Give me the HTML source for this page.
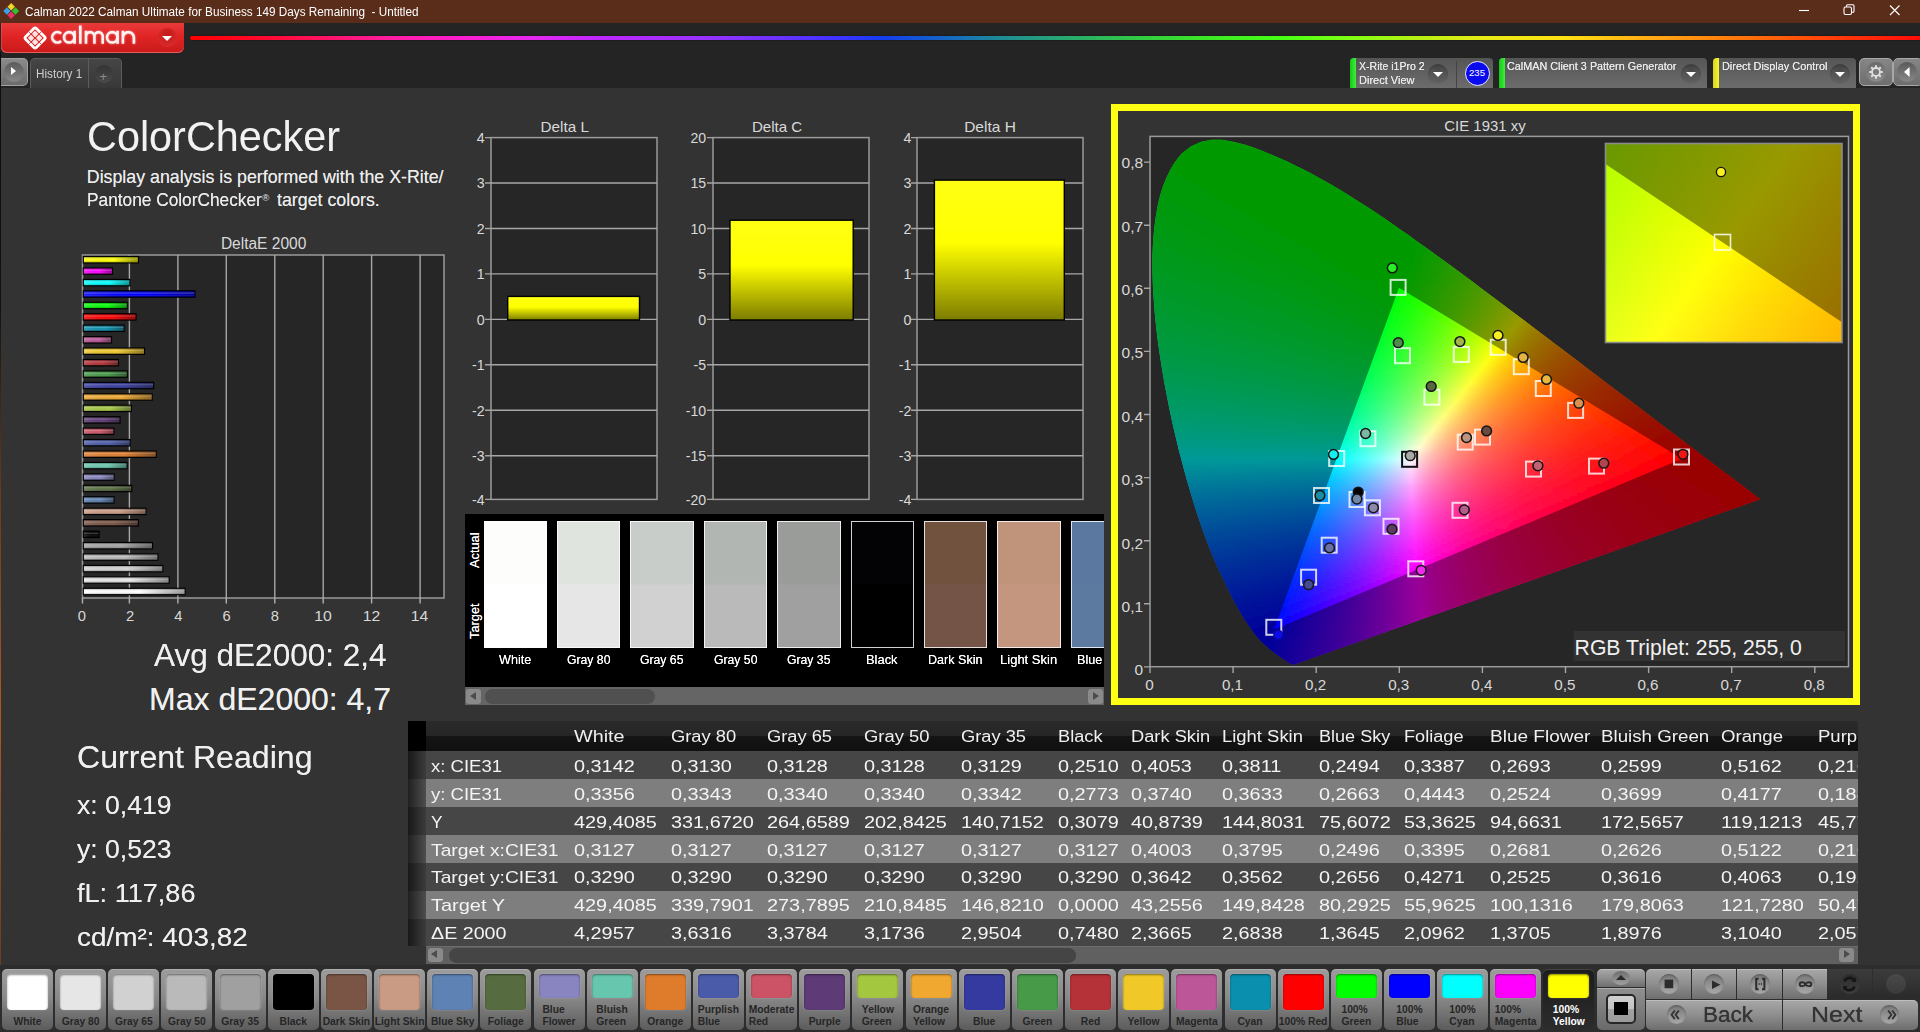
<!DOCTYPE html>
<html lang="en"><head><meta charset="utf-8"><title>Calman 2022 - ColorChecker</title>
<style>
html,body{margin:0;padding:0;background:#333;overflow:hidden;}
body{width:1920px;height:1032px;position:relative;overflow:hidden;font-family:"Liberation Sans",sans-serif;color:#e6e6e6;}
.t{position:absolute;white-space:pre;line-height:1;transform-origin:0 0;}
.abs{position:absolute;}
svg{position:absolute;left:0;top:0;overflow:visible;}
svg text{font-family:"Liberation Sans",sans-serif;}
.ddc{position:absolute;width:20px;height:20px;border-radius:50%;background:radial-gradient(circle at 50% 25%,#484848,#5c5c5c 65%,#6e6e6e);box-shadow:inset 0 2px 3px rgba(0,0,0,.25);}
.ddc:after{content:"";position:absolute;left:5px;top:8.3px;border-left:5px solid transparent;border-right:5px solid transparent;border-top:5.3px solid #fff;}
.tb{position:absolute;top:58px;height:30px;border-radius:4px 4px 0 0;background:linear-gradient(#555,#6c6c6c);overflow:hidden;}
.tb i{position:absolute;left:0;top:0;bottom:0;width:6px;}
.sw{position:absolute;top:969px;width:51px;height:61px;border-radius:5px;background:linear-gradient(#9c9c9c,#8a8a8a 45%,#5c5c5c);box-shadow:inset 0 1px 0 rgba(255,255,255,.18);}
.sw b{position:absolute;left:5px;top:5px;width:41px;border-radius:4px;box-shadow:inset 0 1px 2px rgba(0,0,0,.45),0 0 2px rgba(255,255,255,.25);}
.sw span{position:absolute;left:0;width:51px;text-align:center;font-size:10.3px;font-weight:700;color:#262626;line-height:11.8px;white-space:nowrap;}
.sw span u{display:inline-block;text-align:left;text-decoration:none;}
.sw.sel{background:linear-gradient(#1c1c1c,#2c2c2c);}
.sw.sel span{color:#fff;}
.cb{position:absolute;background:linear-gradient(#a8a8a8,#8e8e8e 50%,#6e6e6e);box-shadow:inset 0 1px 0 rgba(255,255,255,.25);}
.cb.dk{background:linear-gradient(#3c3c3c,#2a2a2a);box-shadow:none;}
.ic{position:absolute;width:20px;height:20px;border-radius:50%;background:linear-gradient(#777,#a9a9a9);box-shadow:inset 0 1px 2px rgba(0,0,0,.3);}
.row{position:absolute;left:425.5px;width:1432px;height:27.9px;}
</style></head><body>

<div id="titlebar" class="abs" style="left:0;top:0;width:1920px;height:23px;background:#5a2d1b"></div>
<svg width="1920" height="23" viewBox="0 0 1920 23"><g transform="translate(11.2,11) rotate(45)"><rect x="-5.6" y="-5.6" width="5.2" height="5.2" fill="#f4d62a"/><rect x="0.4" y="-5.6" width="5.2" height="5.2" fill="#35c02c"/><rect x="-5.6" y="0.4" width="5.2" height="5.2" fill="#3aa0e8"/><rect x="0.4" y="0.4" width="5.2" height="5.2" fill="#e8306a"/></g><g stroke="#fff" stroke-width="1.1" fill="none"><path d="M1799 10.5h10"/><rect x="1844" y="7" width="7.5" height="7.5" rx="1.5"/><path d="M1846.5 7v-1.2q0-1 1-1h5.5q1 0 1 1v5.5q0 1-1 1h-1.2"/><path d="M1890 5.5l9.5 9.5M1899.5 5.5l-9.5 9.5"/></g></svg>
<div class="t" style="left:25.00px;top:5.54px;font-size:12.00px;color:#ffffff;transform:scaleX(0.9784);">Calman 2022 Calman Ultimate for Business 149 Days Remaining  - Untitled</div>
<div id="toolbar" class="abs" style="left:0;top:23px;width:1920px;height:65px;background:#242424"></div>
<div class="abs" style="left:1px;top:23px;width:183px;height:29.5px;border-radius:0 0 6px 6px;background:linear-gradient(#ea3a3a,#e02424 45%,#c81a1a);box-shadow:inset 0 -1px 0 rgba(255,150,150,.55),inset 1px 0 0 rgba(255,120,120,.3)"></div>
<svg width="200" height="60" viewBox="0 0 200 60"><g transform="translate(35.1,38) rotate(45) scale(1.1)"><rect x="-6.9" y="-6.9" width="13.8" height="13.8" rx="1.6" fill="none" stroke="#fff" stroke-width="2.5"/><path d="M0 -8.4V8.4M-8.4 0H8.4" stroke="#d62a2a" stroke-width=".7"/><g fill="#ffe4e4"><rect x="-4.75" y="-4.75" width="4.3" height="4.3" rx=".8"/><rect x=".45" y="-4.75" width="4.3" height="4.3" rx=".8"/><rect x="-4.75" y=".45" width="4.3" height="4.3" rx=".8"/><rect x=".45" y=".45" width="4.3" height="4.3" rx=".8"/></g></g><g fill="none" stroke="#fff2f2" stroke-width="2.6" style="filter:drop-shadow(0 0 1px rgba(255,200,200,.6))"><path d="M61.08 33.62A5.2 5.2 0 1 0 61.08 40.98"/><circle cx="69.2" cy="37.3" r="5.2"/><path d="M74.6 30.8V43.8"/><path d="M80.3 25.5V43.8"/><path d="M86 30.8V43.8M86 36.3a4.2 4.2 0 0 1 8.4 0V43.8M94.4 36.3a4.15 4.15 0 0 1 8.3 0V43.8"/><circle cx="112.2" cy="37.3" r="5.2"/><path d="M117.6 30.8V43.8"/><path d="M122.9 30.8V43.8M122.9 37.6a5.5 5.5 0 0 1 11 0V43.8"/></g></svg>
<div class="abs" style="left:157.5px;top:28px;width:19px;height:19px;border-radius:50%;background:radial-gradient(circle at 50% 35%,#c41818,#d82a2a 75%,#e24444)"></div>
<div class="abs" style="left:161.5px;top:35.5px;border-left:5.5px solid transparent;border-right:5.5px solid transparent;border-top:5.5px solid #fff"></div>
<div class="abs" style="left:190px;top:35.6px;width:1732px;height:4.8px;border-radius:2px 0 0 2px;filter:blur(.45px);background:linear-gradient(90deg,#ff0000 0.0%,#ff0a32 4.5%,#ff146e 8.3%,#ff1eaa 12.1%,#fa1ed2 16.0%,#e628f0 19.8%,#be28ff 23.7%,#9632ff 29.9%,#6e32ff 33.7%,#3c32ff 37.6%,#143cf0 39.9%,#1464c8 43.4%,#1e8c96 46.8%,#28aa6e 50.7%,#32c846 54.5%,#3ce628 58.4%,#46ff14 63.0%,#82ff14 67.1%,#b4f014 70.7%,#e6eb14 74.6%,#ffe114 79.2%,#ffaa14 84.4%,#ff6e0a 90.2%,#ff320a 96.0%,#ff0a0a 100.0%);box-shadow:0 0 2px rgba(0,0,0,.6)"></div>
<div class="abs" style="left:0;top:58px;width:28px;height:28px;border-radius:0 5px 5px 0;background:linear-gradient(#8a8a8a,#6c6c6c);border:1px solid #a0a0a0;border-left:0;box-sizing:border-box"></div>
<div class="abs" style="left:4px;top:62px;width:20px;height:20px;border-radius:50%;background:linear-gradient(#5a5a5a,#888)"></div>
<div class="abs" style="left:11px;top:66.7px;border-top:4.9px solid transparent;border-bottom:4.9px solid transparent;border-left:5.6px solid #fff"></div>
<div class="abs" style="left:30px;top:58px;width:92px;height:30px;border-radius:5px 5px 0 0;background:linear-gradient(#454545,#383838);border:1px solid #5c5c5c;border-bottom:0;box-sizing:border-box"></div>
<div class="abs" style="left:88px;top:59px;width:1px;height:29px;background:#5c5c5c"></div>
<div class="t" style="left:36.30px;top:67.63px;font-size:12.60px;color:#cfcfcf;transform:scaleX(0.9294);">History 1</div>
<div class="abs" style="left:95px;top:65px;width:18px;height:18px;border-radius:50%;background:linear-gradient(#333,#4a4a4a)"></div>
<div class="t" style="left:99.60px;top:69.80px;font-size:13.00px;color:#8c8c8c;">+</div>
<div id="meter" class="tb" style="left:1350px;width:142.5px"><i style="background:linear-gradient(90deg,#16c816,#3cf03c)"></i></div>
<div class="t" style="left:1358.50px;top:60.73px;font-size:10.60px;color:#e8e8e8;transform:scaleX(0.9942);text-shadow:0 0 .5px #e8e8e8;">X-Rite i1Pro 2</div>
<div class="t" style="left:1358.50px;top:75.23px;font-size:10.60px;color:#e8e8e8;transform:scaleX(1.0391);text-shadow:0 0 .5px #e8e8e8;">Direct View</div>
<div class="ddc" style="left:1427.7px;top:63.5px"></div>
<div class="abs" style="left:1456px;top:61px;width:1px;height:27px;background:#444"></div>
<div class="abs" style="left:1464.5px;top:60.5px;width:25px;height:25px;border-radius:50%;background:#0a0aee;border:1.5px solid #e8e8ff;box-sizing:border-box"></div>
<div class="t" style="left:1468.99px;top:68.37px;font-size:9.60px;color:#fff;">235</div>
<div id="source" class="tb" style="left:1498.5px;width:208px"><i style="background:linear-gradient(90deg,#16c816,#3cf03c)"></i></div>
<div class="t" style="left:1507.00px;top:60.73px;font-size:10.60px;color:#e8e8e8;transform:scaleX(1.0202);text-shadow:0 0 .5px #e8e8e8;">CalMAN Client 3 Pattern Generator</div>
<div class="ddc" style="left:1680.6px;top:63.5px"></div>
<div id="display" class="tb" style="left:1713px;width:143px"><i style="background:linear-gradient(90deg,#d8d814,#f4f43c)"></i></div>
<div class="t" style="left:1721.50px;top:60.73px;font-size:10.60px;color:#e8e8e8;transform:scaleX(1.0293);text-shadow:0 0 .5px #e8e8e8;">Direct Display Control</div>
<div class="ddc" style="left:1830px;top:63.5px"></div>
<div class="abs" style="left:1859px;top:58px;width:33.5px;height:28px;border-radius:5px;background:linear-gradient(#868686,#6e6e6e);border:1px solid #a8a8a8;box-sizing:border-box"></div>
<div class="abs" style="left:1892.6px;top:58px;width:30px;height:28px;border-radius:5px;background:linear-gradient(#868686,#6e6e6e);border:1px solid #a8a8a8;box-sizing:border-box"></div>
<div class="abs" style="left:1865.5px;top:62px;width:20px;height:20px;border-radius:50%;background:linear-gradient(#6a6a6a,#8c8c8c)"></div>
<div class="abs" style="left:1896.7px;top:62px;width:20px;height:20px;border-radius:50%;background:linear-gradient(#5a5a5a,#888)"></div>
<svg width="1920" height="100" viewBox="0 0 1920 100"><g transform="translate(1876,72)" fill="none" stroke="#e2e2e2"><circle r="4" stroke-width="1.8"/><g stroke-width="2"><path d="M0 -4.6V-6.7" transform="rotate(0)"/><path d="M0 -4.6V-6.7" transform="rotate(45)"/><path d="M0 -4.6V-6.7" transform="rotate(90)"/><path d="M0 -4.6V-6.7" transform="rotate(135)"/><path d="M0 -4.6V-6.7" transform="rotate(180)"/><path d="M0 -4.6V-6.7" transform="rotate(225)"/><path d="M0 -4.6V-6.7" transform="rotate(270)"/><path d="M0 -4.6V-6.7" transform="rotate(315)"/></g></g><path d="M1909.6 67.1v9.8l-5.6-4.900z" fill="#fff"/></svg>
<div class="abs" style="left:0;top:52px;width:1px;height:916px;background:linear-gradient(#0c0c0c 0,#141210 28%,#6a3a1a 48%,#b0581e 72%,#6a3c20 100%)"></div>
<div class="t" style="left:87.00px;top:115.62px;font-size:42.50px;color:#f2f2f2;transform:scaleX(0.9737);">ColorChecker</div>
<div class="t" style="left:86.80px;top:168.63px;font-size:17.80px;color:#ededed;text-shadow:0 0 .6px rgba(240,240,240,.7);">Display analysis is performed with the X-Rite/</div>
<div class="t" style="left:86.80px;top:192.23px;font-size:17.80px;color:#ededed;transform:scaleX(0.9718);text-shadow:0 0 .6px rgba(240,240,240,.7);">Pantone ColorChecker</div>
<div class="t" style="left:262.20px;top:192.96px;font-size:9.50px;color:#ededed;">®</div>
<div class="t" style="left:277.00px;top:192.23px;font-size:17.80px;color:#ededed;text-shadow:0 0 .6px rgba(240,240,240,.7);">target colors.</div>
<div class="t" style="left:153.90px;top:639.11px;font-size:32.00px;color:#f0f0f0;transform:scaleX(0.9854);text-shadow:0 0 .6px rgba(240,240,240,.7);">Avg dE2000: 2,4</div>
<div class="t" style="left:149.10px;top:683.31px;font-size:32.00px;color:#f0f0f0;text-shadow:0 0 .6px rgba(240,240,240,.7);">Max dE2000: 4,7</div>
<div class="t" style="left:76.60px;top:741.86px;font-size:31.00px;color:#f0f0f0;transform:scaleX(1.0353);text-shadow:0 0 .6px rgba(240,240,240,.7);">Current Reading</div>
<div class="t" style="left:76.60px;top:792.80px;font-size:25.40px;color:#f0f0f0;transform:scaleX(1.0467);text-shadow:0 0 .6px rgba(240,240,240,.7);">x: 0,419</div>
<div class="t" style="left:76.60px;top:836.70px;font-size:25.40px;color:#f0f0f0;transform:scaleX(1.0467);text-shadow:0 0 .6px rgba(240,240,240,.7);">y: 0,523</div>
<div class="t" style="left:76.60px;top:880.90px;font-size:25.40px;color:#f0f0f0;transform:scaleX(1.0666);text-shadow:0 0 .6px rgba(240,240,240,.7);">fL: 117,86</div>
<div class="t" style="left:76.60px;top:924.60px;font-size:25.40px;color:#f0f0f0;transform:scaleX(1.0998);text-shadow:0 0 .6px rgba(240,240,240,.7);">cd/m²: 403,82</div>
<div id="cie" class="abs" style="left:1111px;top:104px;width:749px;height:601px;box-sizing:border-box;border:7.5px solid #ffff14;background:#333"></div>
<svg width="1920" height="1032" viewBox="0 0 1920 1032"><defs><linearGradient id="bs" x1="0" x2="1" y1="0" y2="0"><stop offset="0" stop-color="#fff" stop-opacity=".12"/><stop offset=".55" stop-color="#000" stop-opacity="0"/><stop offset="1" stop-color="#000" stop-opacity=".42"/></linearGradient><linearGradient id="bv" x1="0" x2="0" y1="0" y2="1"><stop offset="0" stop-color="#000" stop-opacity=".25"/><stop offset=".35" stop-color="#fff" stop-opacity=".22"/><stop offset=".6" stop-color="#fff" stop-opacity="0"/><stop offset="1" stop-color="#000" stop-opacity=".3"/></linearGradient><linearGradient id="yb" x1="0" x2="0" y1="0" y2="1"><stop offset="0" stop-color="#ffff14"/><stop offset=".45" stop-color="#ffff00"/><stop offset="1" stop-color="#7c7c00"/></linearGradient><clipPath id="hs"><path d="M1294.2 664.4L1293.0 664.6L1291.0 663.9L1289.9 663.2L1288.2 662.2L1286.1 660.7L1283.4 658.9L1279.6 656.4L1275.0 653.2L1269.2 648.8L1262.1 642.3L1257.6 637.4L1252.6 631.0L1248.9 625.8L1244.9 619.8L1240.5 612.7L1237.0 606.5L1233.3 599.7L1229.4 592.1L1225.3 583.6L1222.4 577.4L1219.3 570.9L1216.1 564.0L1212.9 556.7L1209.7 548.9L1206.5 540.6L1204.1 534.0L1201.6 527.2L1199.2 520.0L1196.7 512.7L1194.3 505.1L1191.9 497.2L1189.5 489.1L1187.1 480.9L1185.2 474.0L1183.3 467.0L1181.4 459.8L1179.4 452.4L1177.6 444.9L1175.7 437.2L1173.9 429.6L1172.1 421.8L1170.5 414.1L1168.9 406.4L1167.5 399.3L1166.1 392.1L1164.7 384.9L1163.4 377.6L1162.2 370.2L1161.0 362.8L1159.9 355.5L1158.8 348.2L1157.8 341.0L1156.9 333.8L1156.1 326.8L1155.3 319.1L1154.6 311.5L1154.0 303.8L1153.5 296.3L1153.0 288.8L1152.7 281.3L1152.5 274.1L1152.4 266.9L1152.4 259.9L1152.5 253.1L1152.9 244.8L1153.5 236.6L1154.2 228.6L1155.2 220.8L1156.3 213.2L1157.6 206.0L1159.1 199.2L1160.9 192.7L1163.5 184.7L1166.6 177.2L1170.0 170.3L1173.6 164.0L1177.6 158.4L1181.7 153.6L1190.7 146.4L1200.7 142.1L1211.1 139.8L1221.9 139.7L1233.1 141.7L1244.3 144.6L1252.8 147.2L1261.3 150.4L1269.8 153.9L1278.1 157.5L1286.2 161.1L1294.2 164.9L1302.0 168.8L1309.9 172.8L1317.6 177.0L1325.2 181.3L1332.8 185.6L1340.4 190.1L1348.0 194.7L1355.5 199.4L1363.0 204.2L1370.5 209.1L1378.0 214.1L1385.4 219.1L1392.9 224.2L1400.3 229.4L1407.8 234.6L1415.2 239.9L1422.6 245.2L1430.0 250.5L1437.5 255.9L1444.9 261.3L1452.4 266.8L1459.8 272.3L1467.3 277.8L1474.7 283.3L1482.1 288.9L1489.5 294.4L1496.9 299.9L1504.2 305.4L1511.6 311.0L1518.9 316.5L1526.2 322.0L1533.5 327.4L1540.7 332.9L1547.8 338.3L1554.9 343.7L1562.0 349.0L1568.9 354.3L1575.9 359.6L1582.7 364.8L1589.5 369.9L1596.2 375.0L1602.7 380.0L1609.2 384.9L1615.6 389.7L1621.9 394.4L1628.0 399.1L1636.0 405.1L1643.7 411.0L1651.1 416.6L1658.1 421.9L1664.8 427.0L1671.2 431.8L1680.3 438.7L1688.8 445.2L1696.5 450.9L1703.4 456.2L1709.7 460.9L1715.3 465.2L1724.8 472.4L1732.4 478.1L1738.5 482.8L1743.6 486.6L1747.7 489.8L1751.1 492.3L1753.5 494.2L1755.5 495.6L1756.9 496.7L1757.8 497.4L1759.1 498.4L1760.2 499.2Z"/></clipPath><linearGradient id="c0"><stop offset="0" stop-color="#00ff00"/><stop offset="0.4967" stop-color="#00ff00"/><stop offset="0.6672" stop-color="#6dff00"/><stop offset="0.777" stop-color="#c2ff00"/><stop offset="0.8459" stop-color="#ffff00"/><stop offset="0.918" stop-color="#ffc700"/><stop offset="1" stop-color="#ff9c00"/></linearGradient><linearGradient id="c1"><stop offset="0" stop-color="#00ff00"/><stop offset="0.4951" stop-color="#00ff00"/><stop offset="0.5885" stop-color="#39ff00"/><stop offset="0.6836" stop-color="#7bff00"/><stop offset="0.7639" stop-color="#baff00"/><stop offset="0.8426" stop-color="#fffe00"/><stop offset="0.9016" stop-color="#ffcf00"/><stop offset="1" stop-color="#ff9a00"/></linearGradient><linearGradient id="c2"><stop offset="0" stop-color="#00ff01"/><stop offset="0.4934" stop-color="#00ff00"/><stop offset="0.5967" stop-color="#40ff00"/><stop offset="0.682" stop-color="#7cff00"/><stop offset="0.7689" stop-color="#c1ff00"/><stop offset="0.8377" stop-color="#ffff00"/><stop offset="0.9033" stop-color="#ffcb00"/><stop offset="1" stop-color="#ff9700"/></linearGradient><linearGradient id="c3"><stop offset="0" stop-color="#00ff02"/><stop offset="0.4918" stop-color="#00ff00"/><stop offset="0.6656" stop-color="#72ff00"/><stop offset="0.7475" stop-color="#b2ff00"/><stop offset="0.8344" stop-color="#ffff00"/><stop offset="0.9066" stop-color="#ffc600"/><stop offset="1" stop-color="#ff9500"/></linearGradient><linearGradient id="c4"><stop offset="0" stop-color="#00ff03"/><stop offset="0.4902" stop-color="#00ff00"/><stop offset="0.5738" stop-color="#34ff00"/><stop offset="0.6721" stop-color="#79ff00"/><stop offset="0.7525" stop-color="#b9ff00"/><stop offset="0.8311" stop-color="#fffe00"/><stop offset="0.8902" stop-color="#ffce00"/><stop offset="0.941" stop-color="#ffaf00"/><stop offset="1" stop-color="#ff9300"/></linearGradient><linearGradient id="c5"><stop offset="0" stop-color="#00ff04"/><stop offset="0.0262" stop-color="#00ff00"/><stop offset="0.4885" stop-color="#00ff00"/><stop offset="0.582" stop-color="#3bff00"/><stop offset="0.6705" stop-color="#7aff00"/><stop offset="0.7443" stop-color="#b5ff00"/><stop offset="0.8262" stop-color="#ffff00"/><stop offset="0.8918" stop-color="#ffca00"/><stop offset="1" stop-color="#ff9100"/></linearGradient><linearGradient id="c6"><stop offset="0" stop-color="#00ff05"/><stop offset="0.0344" stop-color="#00ff00"/><stop offset="0.4852" stop-color="#00ff00"/><stop offset="0.5721" stop-color="#36ff00"/><stop offset="0.6623" stop-color="#76ff00"/><stop offset="0.741" stop-color="#b5ff00"/><stop offset="0.823" stop-color="#fffe00"/><stop offset="0.8934" stop-color="#ffc600"/><stop offset="1" stop-color="#ff8f00"/></linearGradient><linearGradient id="c7"><stop offset="0" stop-color="#00ff06"/><stop offset="0.0426" stop-color="#00ff00"/><stop offset="0.4836" stop-color="#00ff00"/><stop offset="0.5623" stop-color="#31ff00"/><stop offset="0.6541" stop-color="#72ff00"/><stop offset="0.7492" stop-color="#bfff00"/><stop offset="0.818" stop-color="#ffff00"/><stop offset="0.8984" stop-color="#ffc000"/><stop offset="1" stop-color="#ff8d00"/></linearGradient><linearGradient id="c8"><stop offset="0" stop-color="#00ff07"/><stop offset="0.0508" stop-color="#00ff00"/><stop offset="0.482" stop-color="#00ff00"/><stop offset="0.5705" stop-color="#38ff00"/><stop offset="0.6656" stop-color="#7dff00"/><stop offset="0.7295" stop-color="#b1ff00"/><stop offset="0.8148" stop-color="#ffff00"/><stop offset="0.8803" stop-color="#ffc900"/><stop offset="0.9377" stop-color="#ffa700"/><stop offset="1" stop-color="#ff8b00"/></linearGradient><linearGradient id="c9"><stop offset="0" stop-color="#00ff08"/><stop offset="0.059" stop-color="#00ff00"/><stop offset="0.4803" stop-color="#00ff00"/><stop offset="0.5754" stop-color="#3dff00"/><stop offset="0.6574" stop-color="#79ff00"/><stop offset="0.7295" stop-color="#b4ff00"/><stop offset="0.8115" stop-color="#fffe00"/><stop offset="0.8803" stop-color="#ffc600"/><stop offset="0.9328" stop-color="#ffa700"/><stop offset="1" stop-color="#ff8900"/></linearGradient><linearGradient id="c10"><stop offset="0" stop-color="#00ff09"/><stop offset="0.0672" stop-color="#00ff00"/><stop offset="0.4787" stop-color="#00ff00"/><stop offset="0.5672" stop-color="#39ff00"/><stop offset="0.6557" stop-color="#7aff00"/><stop offset="0.741" stop-color="#c1ff00"/><stop offset="0.8066" stop-color="#ffff00"/><stop offset="0.8836" stop-color="#ffc100"/><stop offset="0.9459" stop-color="#ff9e00"/><stop offset="1" stop-color="#ff8700"/></linearGradient><linearGradient id="c11"><stop offset="0" stop-color="#00ff0a"/><stop offset="0.0754" stop-color="#00ff00"/><stop offset="0.477" stop-color="#00ff00"/><stop offset="0.6426" stop-color="#72ff00"/><stop offset="0.7262" stop-color="#b7ff00"/><stop offset="0.8033" stop-color="#fffe00"/><stop offset="0.8443" stop-color="#ffda00"/><stop offset="0.8902" stop-color="#ffba00"/><stop offset="1" stop-color="#ff8500"/></linearGradient><linearGradient id="c12"><stop offset="0" stop-color="#00ff0b"/><stop offset="0.0836" stop-color="#00ff00"/><stop offset="0.4754" stop-color="#00ff00"/><stop offset="0.5639" stop-color="#3aff00"/><stop offset="0.6525" stop-color="#7cff00"/><stop offset="0.7262" stop-color="#baff00"/><stop offset="0.7984" stop-color="#ffff00"/><stop offset="0.8689" stop-color="#ffc500"/><stop offset="0.9344" stop-color="#ff9f00"/><stop offset="1" stop-color="#ff8300"/></linearGradient><linearGradient id="c13"><stop offset="0" stop-color="#00ff0c"/><stop offset="0.0918" stop-color="#00ff00"/><stop offset="0.4738" stop-color="#00ff00"/><stop offset="0.5672" stop-color="#3eff00"/><stop offset="0.6557" stop-color="#81ff00"/><stop offset="0.7951" stop-color="#ffff00"/><stop offset="0.8689" stop-color="#ffc200"/><stop offset="0.9295" stop-color="#ff9f00"/><stop offset="1" stop-color="#ff8100"/></linearGradient><linearGradient id="c14"><stop offset="0" stop-color="#00ff0d"/><stop offset="0.1" stop-color="#00ff00"/><stop offset="0.4721" stop-color="#00ff00"/><stop offset="0.6377" stop-color="#75ff00"/><stop offset="0.7115" stop-color="#b3ff00"/><stop offset="0.7918" stop-color="#fffe00"/><stop offset="0.8393" stop-color="#ffd400"/><stop offset="0.877" stop-color="#ffba00"/><stop offset="0.9328" stop-color="#ff9b00"/><stop offset="1" stop-color="#ff7f00"/></linearGradient><linearGradient id="c15"><stop offset="0" stop-color="#00ff0e"/><stop offset="0.1082" stop-color="#00ff00"/><stop offset="0.4705" stop-color="#00ff00"/><stop offset="0.6311" stop-color="#72ff00"/><stop offset="0.7115" stop-color="#b6ff00"/><stop offset="0.7869" stop-color="#ffff00"/><stop offset="0.8262" stop-color="#ffdb00"/><stop offset="0.8754" stop-color="#ffb800"/><stop offset="0.9426" stop-color="#ff9400"/><stop offset="1" stop-color="#ff7d00"/></linearGradient><linearGradient id="c16"><stop offset="0" stop-color="#00ff0f"/><stop offset="0.1164" stop-color="#00ff00"/><stop offset="0.4672" stop-color="#00ff00"/><stop offset="0.5361" stop-color="#2dff00"/><stop offset="0.6295" stop-color="#73ff00"/><stop offset="0.6902" stop-color="#a6ff00"/><stop offset="0.7836" stop-color="#ffff00"/><stop offset="0.8557" stop-color="#ffc200"/><stop offset="0.9131" stop-color="#ffa000"/><stop offset="1" stop-color="#ff7b00"/></linearGradient><linearGradient id="c17"><stop offset="0" stop-color="#00ff11"/><stop offset="0.1246" stop-color="#00ff00"/><stop offset="0.4656" stop-color="#00ff00"/><stop offset="0.5492" stop-color="#38ff00"/><stop offset="0.6279" stop-color="#74ff00"/><stop offset="0.6869" stop-color="#a6ff00"/><stop offset="0.7803" stop-color="#fffe00"/><stop offset="0.8279" stop-color="#ffd300"/><stop offset="0.8934" stop-color="#ffa800"/><stop offset="1" stop-color="#ff7900"/></linearGradient><linearGradient id="c18"><stop offset="0" stop-color="#00ff12"/><stop offset="0.1328" stop-color="#00ff00"/><stop offset="0.4639" stop-color="#00ff00"/><stop offset="0.5426" stop-color="#35ff00"/><stop offset="0.6262" stop-color="#75ff00"/><stop offset="0.7131" stop-color="#c1ff00"/><stop offset="0.7754" stop-color="#ffff00"/><stop offset="0.8262" stop-color="#ffd100"/><stop offset="0.8852" stop-color="#ffaa00"/><stop offset="1" stop-color="#ff7700"/></linearGradient><linearGradient id="c19"><stop offset="0" stop-color="#00ff13"/><stop offset="0.141" stop-color="#00ff00"/><stop offset="0.4623" stop-color="#00ff00"/><stop offset="0.5459" stop-color="#39ff00"/><stop offset="0.6197" stop-color="#72ff00"/><stop offset="0.7" stop-color="#b8ff00"/><stop offset="0.7721" stop-color="#fffe00"/><stop offset="0.8246" stop-color="#ffcf00"/><stop offset="0.877" stop-color="#ffac00"/><stop offset="0.9361" stop-color="#ff8e00"/><stop offset="1" stop-color="#ff7500"/></linearGradient><linearGradient id="c20"><stop offset="0" stop-color="#00ff14"/><stop offset="0.1492" stop-color="#00ff00"/><stop offset="0.4607" stop-color="#00ff00"/><stop offset="0.6131" stop-color="#6fff00"/><stop offset="0.6869" stop-color="#afff00"/><stop offset="0.7672" stop-color="#ffff00"/><stop offset="0.823" stop-color="#ffcd00"/><stop offset="0.8885" stop-color="#ffa300"/><stop offset="1" stop-color="#ff7300"/></linearGradient><linearGradient id="c21"><stop offset="0" stop-color="#00ff15"/><stop offset="0.1574" stop-color="#00ff00"/><stop offset="0.459" stop-color="#00ff00"/><stop offset="0.6115" stop-color="#70ff00"/><stop offset="0.6984" stop-color="#bdff00"/><stop offset="0.7639" stop-color="#ffff00"/><stop offset="0.8148" stop-color="#ffd000"/><stop offset="0.8836" stop-color="#ffa300"/><stop offset="1" stop-color="#ff7100"/></linearGradient><linearGradient id="c22"><stop offset="0" stop-color="#00ff17"/><stop offset="0.1656" stop-color="#00ff00"/><stop offset="0.4574" stop-color="#00ff00"/><stop offset="0.6098" stop-color="#71ff00"/><stop offset="0.6918" stop-color="#baff00"/><stop offset="0.7607" stop-color="#fffe00"/><stop offset="0.8131" stop-color="#ffce00"/><stop offset="0.877" stop-color="#ffa400"/><stop offset="0.9344" stop-color="#ff8800"/><stop offset="1" stop-color="#ff7000"/></linearGradient><linearGradient id="c23"><stop offset="0" stop-color="#00ff18"/><stop offset="0.1738" stop-color="#00ff00"/><stop offset="0.4557" stop-color="#00ff00"/><stop offset="0.5377" stop-color="#3aff00"/><stop offset="0.6164" stop-color="#79ff00"/><stop offset="0.6852" stop-color="#b7ff00"/><stop offset="0.7557" stop-color="#ffff00"/><stop offset="0.8" stop-color="#ffd500"/><stop offset="0.8689" stop-color="#ffa600"/><stop offset="0.9246" stop-color="#ff8a00"/><stop offset="1" stop-color="#ff6e00"/></linearGradient><linearGradient id="c24"><stop offset="0" stop-color="#00ff19"/><stop offset="0.182" stop-color="#00ff00"/><stop offset="0.4541" stop-color="#00ff00"/><stop offset="0.5393" stop-color="#3dff00"/><stop offset="0.6262" stop-color="#84ff00"/><stop offset="0.7525" stop-color="#fffe00"/><stop offset="0.8033" stop-color="#ffcf00"/><stop offset="0.8607" stop-color="#ffa800"/><stop offset="0.9311" stop-color="#ff8500"/><stop offset="1" stop-color="#ff6c00"/></linearGradient><linearGradient id="c25"><stop offset="0" stop-color="#00ff1a"/><stop offset="0.1902" stop-color="#00ff00"/><stop offset="0.4525" stop-color="#00ff00"/><stop offset="0.6082" stop-color="#77ff00"/><stop offset="0.6836" stop-color="#bcff00"/><stop offset="0.7492" stop-color="#fffe00"/><stop offset="0.8016" stop-color="#ffcd00"/><stop offset="0.8738" stop-color="#ff9e00"/><stop offset="1" stop-color="#ff6a00"/></linearGradient><linearGradient id="c26"><stop offset="0" stop-color="#00ff1c"/><stop offset="0.1984" stop-color="#00ff00"/><stop offset="0.4492" stop-color="#00ff00"/><stop offset="0.5082" stop-color="#29ff00"/><stop offset="0.5984" stop-color="#71ff00"/><stop offset="0.6689" stop-color="#b1ff00"/><stop offset="0.7443" stop-color="#ffff00"/><stop offset="0.8049" stop-color="#ffc700"/><stop offset="0.8672" stop-color="#ff9f00"/><stop offset="0.9279" stop-color="#ff8200"/><stop offset="1" stop-color="#ff6800"/></linearGradient><linearGradient id="c27"><stop offset="0" stop-color="#00ff1d"/><stop offset="0.2066" stop-color="#00ff00"/><stop offset="0.4475" stop-color="#00ff00"/><stop offset="0.5885" stop-color="#6bff00"/><stop offset="0.6623" stop-color="#aeff00"/><stop offset="0.741" stop-color="#fffe00"/><stop offset="0.7967" stop-color="#ffca00"/><stop offset="0.8623" stop-color="#ff9f00"/><stop offset="0.918" stop-color="#ff8400"/><stop offset="1" stop-color="#ff6600"/></linearGradient><linearGradient id="c28"><stop offset="0" stop-color="#00ff1e"/><stop offset="0.2148" stop-color="#00ff00"/><stop offset="0.4459" stop-color="#00ff00"/><stop offset="0.5246" stop-color="#39ff00"/><stop offset="0.5984" stop-color="#76ff00"/><stop offset="0.6721" stop-color="#bbff00"/><stop offset="0.7361" stop-color="#ffff00"/><stop offset="0.7951" stop-color="#ffc800"/><stop offset="0.8557" stop-color="#ffa000"/><stop offset="0.9197" stop-color="#ff8100"/><stop offset="1" stop-color="#ff6500"/></linearGradient><linearGradient id="c29"><stop offset="0" stop-color="#00ff20"/><stop offset="0.223" stop-color="#00ff00"/><stop offset="0.4443" stop-color="#00ff00"/><stop offset="0.5197" stop-color="#37ff00"/><stop offset="0.6" stop-color="#7aff00"/><stop offset="0.6738" stop-color="#c0ff00"/><stop offset="0.7328" stop-color="#ffff00"/><stop offset="0.7869" stop-color="#ffcb00"/><stop offset="0.8492" stop-color="#ffa100"/><stop offset="0.9098" stop-color="#ff8300"/><stop offset="1" stop-color="#ff6300"/></linearGradient><linearGradient id="c30"><stop offset="0" stop-color="#00ff21"/><stop offset="0.2311" stop-color="#00ff00"/><stop offset="0.4426" stop-color="#00ff00"/><stop offset="0.5869" stop-color="#71ff00"/><stop offset="0.6574" stop-color="#b3ff00"/><stop offset="0.7279" stop-color="#feff00"/><stop offset="0.7902" stop-color="#ffc500"/><stop offset="0.8426" stop-color="#ffa200"/><stop offset="0.9164" stop-color="#ff7e00"/><stop offset="1" stop-color="#ff6100"/></linearGradient><linearGradient id="c31"><stop offset="0" stop-color="#00ff22"/><stop offset="0.2393" stop-color="#00ff00"/><stop offset="0.441" stop-color="#00ff00"/><stop offset="0.5262" stop-color="#40ff00"/><stop offset="0.5885" stop-color="#75ff00"/><stop offset="0.6459" stop-color="#abff00"/><stop offset="0.7246" stop-color="#ffff00"/><stop offset="0.7721" stop-color="#ffd000"/><stop offset="0.8328" stop-color="#ffa500"/><stop offset="0.9016" stop-color="#ff8200"/><stop offset="1" stop-color="#ff5f00"/></linearGradient><linearGradient id="c32"><stop offset="0" stop-color="#00ff24"/><stop offset="0.2475" stop-color="#00ff00"/><stop offset="0.4393" stop-color="#00ff00"/><stop offset="0.5721" stop-color="#69ff00"/><stop offset="0.6426" stop-color="#abff00"/><stop offset="0.7197" stop-color="#feff00"/><stop offset="0.7803" stop-color="#ffc600"/><stop offset="0.8492" stop-color="#ff9900"/><stop offset="0.918" stop-color="#ff7900"/><stop offset="1" stop-color="#ff5e00"/></linearGradient><linearGradient id="c33"><stop offset="0" stop-color="#00ff25"/><stop offset="0.2557" stop-color="#00ff00"/><stop offset="0.4377" stop-color="#00ff00"/><stop offset="0.5705" stop-color="#6aff00"/><stop offset="0.6492" stop-color="#b5ff00"/><stop offset="0.7164" stop-color="#ffff00"/><stop offset="0.777" stop-color="#ffc500"/><stop offset="0.8443" stop-color="#ff9900"/><stop offset="0.923" stop-color="#ff7500"/><stop offset="1" stop-color="#ff5c00"/></linearGradient><linearGradient id="c34"><stop offset="0" stop-color="#00ff27"/><stop offset="0.2639" stop-color="#00ff00"/><stop offset="0.4361" stop-color="#00ff00"/><stop offset="0.5213" stop-color="#42ff00"/><stop offset="0.5885" stop-color="#7dff00"/><stop offset="0.6525" stop-color="#bcff00"/><stop offset="0.7131" stop-color="#ffff00"/><stop offset="0.7754" stop-color="#ffc300"/><stop offset="0.8393" stop-color="#ff9900"/><stop offset="0.9148" stop-color="#ff7600"/><stop offset="1" stop-color="#ff5a00"/></linearGradient><linearGradient id="c35"><stop offset="0" stop-color="#00ff28"/><stop offset="0.2721" stop-color="#00ff00"/><stop offset="0.4344" stop-color="#00ff00"/><stop offset="0.5213" stop-color="#44ff00"/><stop offset="0.5951" stop-color="#86ff00"/><stop offset="0.7082" stop-color="#feff00"/><stop offset="0.7721" stop-color="#ffc200"/><stop offset="0.8344" stop-color="#ff9900"/><stop offset="0.9197" stop-color="#ff7200"/><stop offset="1" stop-color="#ff5800"/></linearGradient><linearGradient id="c36"><stop offset="0" stop-color="#00ff2a"/><stop offset="0.2803" stop-color="#00ff00"/><stop offset="0.4311" stop-color="#00ff00"/><stop offset="0.5033" stop-color="#37ff00"/><stop offset="0.5836" stop-color="#7eff00"/><stop offset="0.6361" stop-color="#b2ff00"/><stop offset="0.7049" stop-color="#ffff00"/><stop offset="0.759" stop-color="#ffc900"/><stop offset="0.8279" stop-color="#ff9a00"/><stop offset="0.9115" stop-color="#ff7300"/><stop offset="1" stop-color="#ff5700"/></linearGradient><linearGradient id="c37"><stop offset="0" stop-color="#00ff2b"/><stop offset="0.2885" stop-color="#00ff00"/><stop offset="0.4295" stop-color="#00ff00"/><stop offset="0.5033" stop-color="#39ff00"/><stop offset="0.5754" stop-color="#79ff00"/><stop offset="0.6393" stop-color="#b9ff00"/><stop offset="0.7" stop-color="#feff00"/><stop offset="0.7525" stop-color="#ffcb00"/><stop offset="0.823" stop-color="#ff9a00"/><stop offset="0.8984" stop-color="#ff7600"/><stop offset="1" stop-color="#ff5500"/></linearGradient><linearGradient id="c38"><stop offset="0" stop-color="#00ff2d"/><stop offset="0.2967" stop-color="#00ff00"/><stop offset="0.4279" stop-color="#00ff00"/><stop offset="0.4902" stop-color="#30ff00"/><stop offset="0.5672" stop-color="#74ff00"/><stop offset="0.6246" stop-color="#adff00"/><stop offset="0.6967" stop-color="#feff00"/><stop offset="0.7492" stop-color="#ffca00"/><stop offset="0.8164" stop-color="#ff9b00"/><stop offset="0.9033" stop-color="#ff7200"/><stop offset="1" stop-color="#ff5300"/></linearGradient><linearGradient id="c39"><stop offset="0" stop-color="#00ff2e"/><stop offset="0.3049" stop-color="#00ff00"/><stop offset="0.4262" stop-color="#00ff00"/><stop offset="0.559" stop-color="#6fff00"/><stop offset="0.6361" stop-color="#bdff00"/><stop offset="0.6934" stop-color="#ffff00"/><stop offset="0.7508" stop-color="#ffc500"/><stop offset="0.8115" stop-color="#ff9b00"/><stop offset="0.8951" stop-color="#ff7300"/><stop offset="1" stop-color="#ff5200"/></linearGradient><linearGradient id="c40"><stop offset="0" stop-color="#00ff30"/><stop offset="0.3131" stop-color="#00ff00"/><stop offset="0.4246" stop-color="#00ff00"/><stop offset="0.482" stop-color="#2dff00"/><stop offset="0.5656" stop-color="#78ff00"/><stop offset="0.6262" stop-color="#b6ff00"/><stop offset="0.6885" stop-color="#feff00"/><stop offset="0.7393" stop-color="#ffcb00"/><stop offset="0.8049" stop-color="#ff9c00"/><stop offset="0.9" stop-color="#ff6f00"/><stop offset="1" stop-color="#ff5000"/></linearGradient><linearGradient id="c41"><stop offset="0" stop-color="#00ff31"/><stop offset="0.3213" stop-color="#00ff00"/><stop offset="0.423" stop-color="#00ff00"/><stop offset="0.4984" stop-color="#3dff00"/><stop offset="0.5574" stop-color="#73ff00"/><stop offset="0.6164" stop-color="#afff00"/><stop offset="0.6852" stop-color="#ffff00"/><stop offset="0.741" stop-color="#ffc600"/><stop offset="0.8213" stop-color="#ff9000"/><stop offset="0.9049" stop-color="#ff6b00"/><stop offset="1" stop-color="#ff4e00"/></linearGradient><linearGradient id="c42"><stop offset="0" stop-color="#00ff33"/><stop offset="0.3295" stop-color="#00ff00"/><stop offset="0.4213" stop-color="#00ff00"/><stop offset="0.4984" stop-color="#3fff00"/><stop offset="0.5689" stop-color="#81ff00"/><stop offset="0.6311" stop-color="#c3ff00"/><stop offset="0.6803" stop-color="#feff00"/><stop offset="0.7377" stop-color="#ffc500"/><stop offset="0.8164" stop-color="#ff9000"/><stop offset="0.9131" stop-color="#ff6600"/><stop offset="1" stop-color="#ff4d00"/></linearGradient><linearGradient id="c43"><stop offset="0" stop-color="#00ff34"/><stop offset="0.2" stop-color="#00ff19"/><stop offset="0.3377" stop-color="#00ff00"/><stop offset="0.4197" stop-color="#00ff00"/><stop offset="0.4902" stop-color="#3aff00"/><stop offset="0.5557" stop-color="#77ff00"/><stop offset="0.6197" stop-color="#baff00"/><stop offset="0.677" stop-color="#feff00"/><stop offset="0.7393" stop-color="#ffc000"/><stop offset="0.8131" stop-color="#ff8f00"/><stop offset="0.9016" stop-color="#ff6800"/><stop offset="1" stop-color="#ff4b00"/></linearGradient><linearGradient id="c44"><stop offset="0" stop-color="#00ff36"/><stop offset="0.1787" stop-color="#00ff1e"/><stop offset="0.3459" stop-color="#00ff00"/><stop offset="0.418" stop-color="#00ff00"/><stop offset="0.5508" stop-color="#75ff00"/><stop offset="0.6197" stop-color="#beff00"/><stop offset="0.6738" stop-color="#ffff00"/><stop offset="0.7279" stop-color="#ffc600"/><stop offset="0.8082" stop-color="#ff8f00"/><stop offset="0.9016" stop-color="#ff6600"/><stop offset="1" stop-color="#ff4900"/></linearGradient><linearGradient id="c45"><stop offset="0" stop-color="#00ff38"/><stop offset="0.2082" stop-color="#00ff1b"/><stop offset="0.3541" stop-color="#00ff00"/><stop offset="0.4164" stop-color="#00ff00"/><stop offset="0.5459" stop-color="#73ff00"/><stop offset="0.6066" stop-color="#b3ff00"/><stop offset="0.6689" stop-color="#feff00"/><stop offset="0.7246" stop-color="#ffc500"/><stop offset="0.8049" stop-color="#ff8e00"/><stop offset="0.8902" stop-color="#ff6800"/><stop offset="1" stop-color="#ff4800"/></linearGradient><linearGradient id="c46"><stop offset="0" stop-color="#00ff39"/><stop offset="0.2" stop-color="#00ff1e"/><stop offset="0.3623" stop-color="#00ff00"/><stop offset="0.4131" stop-color="#00ff00"/><stop offset="0.4672" stop-color="#2cff00"/><stop offset="0.5361" stop-color="#6cff00"/><stop offset="0.6049" stop-color="#b5ff00"/><stop offset="0.6656" stop-color="#ffff00"/><stop offset="0.7262" stop-color="#ffc000"/><stop offset="0.8" stop-color="#ff8e00"/><stop offset="0.8984" stop-color="#ff6300"/><stop offset="1" stop-color="#ff4600"/></linearGradient><linearGradient id="c47"><stop offset="0" stop-color="#00ff3b"/><stop offset="0.1984" stop-color="#00ff20"/><stop offset="0.3705" stop-color="#00ff00"/><stop offset="0.4115" stop-color="#00ff00"/><stop offset="0.4639" stop-color="#2bff00"/><stop offset="0.541" stop-color="#74ff00"/><stop offset="0.6033" stop-color="#b7ff00"/><stop offset="0.6623" stop-color="#ffff00"/><stop offset="0.6918" stop-color="#ffdc00"/><stop offset="0.723" stop-color="#ffbf00"/><stop offset="0.7967" stop-color="#ff8d00"/><stop offset="0.8869" stop-color="#ff6500"/><stop offset="1" stop-color="#ff4500"/></linearGradient><linearGradient id="c48"><stop offset="0" stop-color="#00ff3d"/><stop offset="0.2033" stop-color="#00ff21"/><stop offset="0.3787" stop-color="#00ff00"/><stop offset="0.4098" stop-color="#00ff00"/><stop offset="0.4639" stop-color="#2dff00"/><stop offset="0.5344" stop-color="#70ff00"/><stop offset="0.6016" stop-color="#b9ff00"/><stop offset="0.6574" stop-color="#feff00"/><stop offset="0.7197" stop-color="#ffbe00"/><stop offset="0.7934" stop-color="#ff8c00"/><stop offset="0.8869" stop-color="#ff6300"/><stop offset="1" stop-color="#ff4300"/></linearGradient><linearGradient id="c49"><stop offset="0" stop-color="#00ff3f"/><stop offset="0.4082" stop-color="#00ff00"/><stop offset="0.4639" stop-color="#2fff00"/><stop offset="0.5344" stop-color="#73ff00"/><stop offset="0.6033" stop-color="#bfff00"/><stop offset="0.6541" stop-color="#ffff00"/><stop offset="0.6836" stop-color="#ffdc00"/><stop offset="0.7164" stop-color="#ffbd00"/><stop offset="0.7902" stop-color="#ff8b00"/><stop offset="0.8836" stop-color="#ff6200"/><stop offset="1" stop-color="#ff4200"/></linearGradient><linearGradient id="c50"><stop offset="0" stop-color="#00ff41"/><stop offset="0.182" stop-color="#00ff28"/><stop offset="0.4066" stop-color="#00ff00"/><stop offset="0.4852" stop-color="#45ff00"/><stop offset="0.5344" stop-color="#76ff00"/><stop offset="0.5836" stop-color="#acff00"/><stop offset="0.6492" stop-color="#feff00"/><stop offset="0.7131" stop-color="#ffbc00"/><stop offset="0.7852" stop-color="#ff8b00"/><stop offset="0.8836" stop-color="#ff6000"/><stop offset="1" stop-color="#ff4000"/></linearGradient><linearGradient id="c51"><stop offset="0" stop-color="#00ff42"/><stop offset="0.2246" stop-color="#00ff23"/><stop offset="0.4049" stop-color="#00ff00"/><stop offset="0.523" stop-color="#6dff00"/><stop offset="0.582" stop-color="#aeff00"/><stop offset="0.6459" stop-color="#feff00"/><stop offset="0.677" stop-color="#ffda00"/><stop offset="0.7098" stop-color="#ffbb00"/><stop offset="0.782" stop-color="#ff8a00"/><stop offset="0.8803" stop-color="#ff5f00"/><stop offset="1" stop-color="#ff3e00"/></linearGradient><linearGradient id="c52"><stop offset="0" stop-color="#00ff44"/><stop offset="0.2115" stop-color="#00ff27"/><stop offset="0.4033" stop-color="#00ff02"/><stop offset="0.523" stop-color="#70ff00"/><stop offset="0.5803" stop-color="#b0ff00"/><stop offset="0.6426" stop-color="#ffff00"/><stop offset="0.6738" stop-color="#ffd900"/><stop offset="0.7066" stop-color="#ffba00"/><stop offset="0.7787" stop-color="#ff8900"/><stop offset="0.8803" stop-color="#ff5d00"/><stop offset="1" stop-color="#ff3d00"/></linearGradient><linearGradient id="c53"><stop offset="0" stop-color="#00ff46"/><stop offset="0.2295" stop-color="#00ff26"/><stop offset="0.4016" stop-color="#00ff04"/><stop offset="0.523" stop-color="#73ff00"/><stop offset="0.5787" stop-color="#b2ff00"/><stop offset="0.6377" stop-color="#feff00"/><stop offset="0.6705" stop-color="#ffd800"/><stop offset="0.7033" stop-color="#ffb900"/><stop offset="0.777" stop-color="#ff8700"/><stop offset="0.8803" stop-color="#ff5b00"/><stop offset="1" stop-color="#ff3b00"/></linearGradient><linearGradient id="c54"><stop offset="0" stop-color="#00ff48"/><stop offset="0.2049" stop-color="#00ff2c"/><stop offset="0.4" stop-color="#00ff07"/><stop offset="0.4279" stop-color="#19ff00"/><stop offset="0.5246" stop-color="#78ff00"/><stop offset="0.6049" stop-color="#d7ff00"/><stop offset="0.6344" stop-color="#ffff00"/><stop offset="0.6672" stop-color="#ffd700"/><stop offset="0.7" stop-color="#ffb800"/><stop offset="0.7738" stop-color="#ff8600"/><stop offset="0.877" stop-color="#ff5a00"/><stop offset="1" stop-color="#ff3a00"/></linearGradient><linearGradient id="c55"><stop offset="0" stop-color="#00ff4a"/><stop offset="0.2049" stop-color="#00ff2e"/><stop offset="0.3984" stop-color="#00ff09"/><stop offset="0.4361" stop-color="#22ff00"/><stop offset="0.518" stop-color="#74ff00"/><stop offset="0.5951" stop-color="#cfff00"/><stop offset="0.6295" stop-color="#fdff00"/><stop offset="0.6639" stop-color="#ffd600"/><stop offset="0.6967" stop-color="#ffb700"/><stop offset="0.7705" stop-color="#ff8500"/><stop offset="0.877" stop-color="#ff5800"/><stop offset="1" stop-color="#ff3800"/></linearGradient><linearGradient id="c56"><stop offset="0" stop-color="#00ff4c"/><stop offset="0.2049" stop-color="#00ff30"/><stop offset="0.3951" stop-color="#00ff0c"/><stop offset="0.4443" stop-color="#2cff00"/><stop offset="0.5197" stop-color="#79ff00"/><stop offset="0.5852" stop-color="#c7ff00"/><stop offset="0.6262" stop-color="#feff00"/><stop offset="0.6852" stop-color="#ffbd00"/><stop offset="0.7672" stop-color="#ff8400"/><stop offset="0.8738" stop-color="#ff5700"/><stop offset="1" stop-color="#ff3700"/></linearGradient><linearGradient id="c57"><stop offset="0" stop-color="#00ff4e"/><stop offset="0.2115" stop-color="#00ff31"/><stop offset="0.3934" stop-color="#00ff0e"/><stop offset="0.4525" stop-color="#36ff00"/><stop offset="0.5131" stop-color="#75ff00"/><stop offset="0.577" stop-color="#c1ff00"/><stop offset="0.623" stop-color="#ffff00"/><stop offset="0.6475" stop-color="#ffdf00"/><stop offset="0.682" stop-color="#ffbc00"/><stop offset="0.7213" stop-color="#ff9d00"/><stop offset="0.7656" stop-color="#ff8200"/><stop offset="0.8738" stop-color="#ff5500"/><stop offset="1" stop-color="#ff3500"/></linearGradient><linearGradient id="c58"><stop offset="0" stop-color="#00ff50"/><stop offset="0.2246" stop-color="#00ff31"/><stop offset="0.3918" stop-color="#00ff10"/><stop offset="0.4607" stop-color="#41ff00"/><stop offset="0.5148" stop-color="#7aff00"/><stop offset="0.5689" stop-color="#bbff00"/><stop offset="0.618" stop-color="#feff00"/><stop offset="0.6541" stop-color="#ffd300"/><stop offset="0.682" stop-color="#ffb800"/><stop offset="0.7623" stop-color="#ff8100"/><stop offset="0.8738" stop-color="#ff5300"/><stop offset="1" stop-color="#ff3400"/></linearGradient><linearGradient id="c59"><stop offset="0" stop-color="#00ff52"/><stop offset="0.2131" stop-color="#00ff35"/><stop offset="0.3902" stop-color="#00ff13"/><stop offset="0.4689" stop-color="#4cff00"/><stop offset="0.5066" stop-color="#74ff00"/><stop offset="0.5623" stop-color="#b7ff00"/><stop offset="0.6148" stop-color="#ffff00"/><stop offset="0.6426" stop-color="#ffdb00"/><stop offset="0.6787" stop-color="#ffb700"/><stop offset="0.7607" stop-color="#ff7f00"/><stop offset="0.8738" stop-color="#ff5100"/><stop offset="1" stop-color="#ff3200"/></linearGradient><linearGradient id="c60"><stop offset="0" stop-color="#00ff54"/><stop offset="0.2082" stop-color="#00ff38"/><stop offset="0.3885" stop-color="#00ff15"/><stop offset="0.477" stop-color="#57ff00"/><stop offset="0.4984" stop-color="#6eff00"/><stop offset="0.5574" stop-color="#b5ff00"/><stop offset="0.6098" stop-color="#fdff00"/><stop offset="0.6393" stop-color="#ffda00"/><stop offset="0.6787" stop-color="#ffb300"/><stop offset="0.7574" stop-color="#ff7e00"/><stop offset="0.8492" stop-color="#ff5700"/><stop offset="1" stop-color="#ff3100"/></linearGradient><linearGradient id="c61"><stop offset="0" stop-color="#00ff56"/><stop offset="0.2033" stop-color="#00ff3b"/><stop offset="0.3869" stop-color="#00ff18"/><stop offset="0.459" stop-color="#46ff07"/><stop offset="0.5016" stop-color="#75ff00"/><stop offset="0.5508" stop-color="#b1ff00"/><stop offset="0.6066" stop-color="#feff00"/><stop offset="0.6361" stop-color="#ffd900"/><stop offset="0.6754" stop-color="#ffb200"/><stop offset="0.7557" stop-color="#ff7c00"/><stop offset="0.8459" stop-color="#ff5600"/><stop offset="1" stop-color="#ff2f00"/></linearGradient><linearGradient id="c62"><stop offset="0" stop-color="#00ff58"/><stop offset="0.2115" stop-color="#00ff3c"/><stop offset="0.3852" stop-color="#00ff1b"/><stop offset="0.4918" stop-color="#6dff01"/><stop offset="0.5574" stop-color="#beff00"/><stop offset="0.6033" stop-color="#ffff00"/><stop offset="0.6344" stop-color="#ffd600"/><stop offset="0.6639" stop-color="#ffb800"/><stop offset="0.7" stop-color="#ff9b00"/><stop offset="0.7525" stop-color="#ff7b00"/><stop offset="0.8426" stop-color="#ff5500"/><stop offset="1" stop-color="#ff2e00"/></linearGradient><linearGradient id="c63"><stop offset="0" stop-color="#00ff5b"/><stop offset="0.2197" stop-color="#00ff3d"/><stop offset="0.3836" stop-color="#00ff1d"/><stop offset="0.4311" stop-color="#2eff12"/><stop offset="0.4984" stop-color="#78ff01"/><stop offset="0.5426" stop-color="#afff00"/><stop offset="0.5984" stop-color="#fdff00"/><stop offset="0.6311" stop-color="#ffd500"/><stop offset="0.6639" stop-color="#ffb400"/><stop offset="0.7082" stop-color="#ff9200"/><stop offset="0.7508" stop-color="#ff7900"/><stop offset="0.8393" stop-color="#ff5400"/><stop offset="1" stop-color="#ff2c00"/></linearGradient><linearGradient id="c64"><stop offset="0" stop-color="#00ff5d"/><stop offset="0.2033" stop-color="#00ff42"/><stop offset="0.382" stop-color="#00ff20"/><stop offset="0.4836" stop-color="#6aff07"/><stop offset="0.5098" stop-color="#8aff00"/><stop offset="0.5951" stop-color="#feff00"/><stop offset="0.6295" stop-color="#ffd200"/><stop offset="0.6639" stop-color="#ffb000"/><stop offset="0.7016" stop-color="#ff9300"/><stop offset="0.7492" stop-color="#ff7700"/><stop offset="0.8082" stop-color="#ff5d00"/><stop offset="0.882" stop-color="#ff4500"/><stop offset="1" stop-color="#ff2b00"/></linearGradient><linearGradient id="c65"><stop offset="0" stop-color="#00ff5f"/><stop offset="0.218" stop-color="#00ff42"/><stop offset="0.3803" stop-color="#00ff23"/><stop offset="0.4721" stop-color="#60ff0d"/><stop offset="0.518" stop-color="#98ff00"/><stop offset="0.5918" stop-color="#ffff00"/><stop offset="0.6262" stop-color="#ffd100"/><stop offset="0.6639" stop-color="#ffac00"/><stop offset="0.7459" stop-color="#ff7600"/><stop offset="0.8049" stop-color="#ff5c00"/><stop offset="0.8754" stop-color="#ff4500"/><stop offset="1" stop-color="#ff2a00"/></linearGradient><linearGradient id="c66"><stop offset="0" stop-color="#00ff62"/><stop offset="0.2213" stop-color="#00ff44"/><stop offset="0.377" stop-color="#00ff26"/><stop offset="0.4738" stop-color="#65ff0f"/><stop offset="0.5262" stop-color="#a7ff00"/><stop offset="0.5869" stop-color="#feff00"/><stop offset="0.6246" stop-color="#ffce00"/><stop offset="0.6525" stop-color="#ffb200"/><stop offset="0.6918" stop-color="#ff9300"/><stop offset="0.7443" stop-color="#ff7400"/><stop offset="0.8066" stop-color="#ff5900"/><stop offset="0.8721" stop-color="#ff4400"/><stop offset="1" stop-color="#ff2800"/></linearGradient><linearGradient id="c67"><stop offset="0" stop-color="#00ff64"/><stop offset="0.218" stop-color="#00ff47"/><stop offset="0.3754" stop-color="#00ff29"/><stop offset="0.4377" stop-color="#3fff1b"/><stop offset="0.5066" stop-color="#91ff08"/><stop offset="0.5328" stop-color="#b4ff00"/><stop offset="0.5836" stop-color="#ffff00"/><stop offset="0.623" stop-color="#ffcb00"/><stop offset="0.6525" stop-color="#ffae00"/><stop offset="0.6869" stop-color="#ff9300"/><stop offset="0.7426" stop-color="#ff7200"/><stop offset="0.8689" stop-color="#ff4300"/><stop offset="1" stop-color="#ff2700"/></linearGradient><linearGradient id="c68"><stop offset="0" stop-color="#00ff66"/><stop offset="0.2279" stop-color="#00ff48"/><stop offset="0.3738" stop-color="#00ff2c"/><stop offset="0.4344" stop-color="#3eff1e"/><stop offset="0.4902" stop-color="#80ff10"/><stop offset="0.541" stop-color="#c5ff00"/><stop offset="0.5787" stop-color="#fdff00"/><stop offset="0.6197" stop-color="#ffca00"/><stop offset="0.6525" stop-color="#ffaa00"/><stop offset="0.7295" stop-color="#ff7600"/><stop offset="0.7918" stop-color="#ff5a00"/><stop offset="0.8656" stop-color="#ff4200"/><stop offset="1" stop-color="#ff2500"/></linearGradient><linearGradient id="c69"><stop offset="0" stop-color="#00ff69"/><stop offset="0.2131" stop-color="#00ff4d"/><stop offset="0.3721" stop-color="#00ff2f"/><stop offset="0.4311" stop-color="#3dff22"/><stop offset="0.4918" stop-color="#86ff12"/><stop offset="0.5492" stop-color="#d6ff00"/><stop offset="0.5754" stop-color="#feff00"/><stop offset="0.618" stop-color="#ffc700"/><stop offset="0.6443" stop-color="#ffad00"/><stop offset="0.6885" stop-color="#ff8b00"/><stop offset="0.7279" stop-color="#ff7400"/><stop offset="0.7885" stop-color="#ff5900"/><stop offset="0.859" stop-color="#ff4200"/><stop offset="1" stop-color="#ff2400"/></linearGradient><linearGradient id="c70"><stop offset="0" stop-color="#00ff6b"/><stop offset="0.1984" stop-color="#00ff52"/><stop offset="0.3705" stop-color="#00ff32"/><stop offset="0.418" stop-color="#31ff28"/><stop offset="0.4787" stop-color="#79ff18"/><stop offset="0.5344" stop-color="#c5ff08"/><stop offset="0.5721" stop-color="#ffff00"/><stop offset="0.5984" stop-color="#ffd900"/><stop offset="0.6311" stop-color="#ffb500"/><stop offset="0.6705" stop-color="#ff9400"/><stop offset="0.7262" stop-color="#ff7200"/><stop offset="0.7902" stop-color="#ff5600"/><stop offset="0.8557" stop-color="#ff4100"/><stop offset="1" stop-color="#ff2300"/></linearGradient><linearGradient id="c71"><stop offset="0" stop-color="#00ff6e"/><stop offset="0.1623" stop-color="#00ff5a"/><stop offset="0.3689" stop-color="#00ff36"/><stop offset="0.4656" stop-color="#6cff1f"/><stop offset="0.5213" stop-color="#b7ff0f"/><stop offset="0.5672" stop-color="#feff00"/><stop offset="0.6066" stop-color="#ffca00"/><stop offset="0.6361" stop-color="#ffac00"/><stop offset="0.6754" stop-color="#ff8d00"/><stop offset="0.7246" stop-color="#ff7000"/><stop offset="0.7787" stop-color="#ff5800"/><stop offset="0.8525" stop-color="#ff4000"/><stop offset="1" stop-color="#ff2100"/></linearGradient><linearGradient id="c72"><stop offset="0" stop-color="#00ff70"/><stop offset="0.1951" stop-color="#00ff58"/><stop offset="0.3672" stop-color="#00ff39"/><stop offset="0.4213" stop-color="#3aff2d"/><stop offset="0.4705" stop-color="#76ff20"/><stop offset="0.5213" stop-color="#bcff12"/><stop offset="0.5639" stop-color="#ffff04"/><stop offset="0.5869" stop-color="#ffdd00"/><stop offset="0.623" stop-color="#ffb400"/><stop offset="0.6607" stop-color="#ff9400"/><stop offset="0.7131" stop-color="#ff7300"/><stop offset="0.7803" stop-color="#ff5500"/><stop offset="0.8492" stop-color="#ff3f00"/><stop offset="1" stop-color="#ff2000"/></linearGradient><linearGradient id="c73"><stop offset="0" stop-color="#00ff73"/><stop offset="0.1803" stop-color="#00ff5d"/><stop offset="0.3656" stop-color="#00ff3c"/><stop offset="0.4164" stop-color="#37ff31"/><stop offset="0.4721" stop-color="#7cff23"/><stop offset="0.5246" stop-color="#c6ff14"/><stop offset="0.559" stop-color="#fdff08"/><stop offset="0.582" stop-color="#ffde00"/><stop offset="0.6197" stop-color="#ffb300"/><stop offset="0.6639" stop-color="#ff8e00"/><stop offset="0.7115" stop-color="#ff7100"/><stop offset="0.8279" stop-color="#ff4300"/><stop offset="1" stop-color="#ff1e00"/></linearGradient><linearGradient id="c74"><stop offset="0" stop-color="#00ff76"/><stop offset="0.1934" stop-color="#00ff5e"/><stop offset="0.3639" stop-color="#00ff40"/><stop offset="0.4115" stop-color="#34ff35"/><stop offset="0.4639" stop-color="#75ff28"/><stop offset="0.5131" stop-color="#baff1a"/><stop offset="0.5557" stop-color="#feff0d"/><stop offset="0.5902" stop-color="#ffcf00"/><stop offset="0.618" stop-color="#ffb000"/><stop offset="0.659" stop-color="#ff8e00"/><stop offset="0.7115" stop-color="#ff6e00"/><stop offset="0.8279" stop-color="#ff4100"/><stop offset="1" stop-color="#ff1d00"/></linearGradient><linearGradient id="c75"><stop offset="0" stop-color="#00ff79"/><stop offset="0.2" stop-color="#00ff60"/><stop offset="0.3623" stop-color="#00ff43"/><stop offset="0.4066" stop-color="#31ff39"/><stop offset="0.4656" stop-color="#7bff2b"/><stop offset="0.5016" stop-color="#aeff21"/><stop offset="0.5525" stop-color="#ffff11"/><stop offset="0.5836" stop-color="#ffd105"/><stop offset="0.6197" stop-color="#ffaa00"/><stop offset="0.6639" stop-color="#ff8700"/><stop offset="0.7098" stop-color="#ff6c00"/><stop offset="0.7721" stop-color="#ff5100"/><stop offset="0.8426" stop-color="#ff3b00"/><stop offset="1" stop-color="#ff1c00"/></linearGradient><linearGradient id="c76"><stop offset="0" stop-color="#00ff7b"/><stop offset="0.1934" stop-color="#00ff64"/><stop offset="0.359" stop-color="#00ff47"/><stop offset="0.4" stop-color="#2cff3e"/><stop offset="0.4492" stop-color="#69ff32"/><stop offset="0.5016" stop-color="#b3ff24"/><stop offset="0.5475" stop-color="#fdff16"/><stop offset="0.577" stop-color="#ffd40a"/><stop offset="0.6098" stop-color="#ffaf00"/><stop offset="0.6557" stop-color="#ff8900"/><stop offset="0.7082" stop-color="#ff6a00"/><stop offset="0.8246" stop-color="#ff3e00"/><stop offset="1" stop-color="#ff1a00"/></linearGradient><linearGradient id="c77"><stop offset="0" stop-color="#00ff7e"/><stop offset="0.1869" stop-color="#00ff68"/><stop offset="0.3574" stop-color="#00ff4b"/><stop offset="0.3918" stop-color="#25ff43"/><stop offset="0.4508" stop-color="#6fff35"/><stop offset="0.5098" stop-color="#c5ff25"/><stop offset="0.5443" stop-color="#feff1a"/><stop offset="0.5705" stop-color="#ffd70f"/><stop offset="0.6115" stop-color="#ffa901"/><stop offset="0.6508" stop-color="#ff8900"/><stop offset="0.7066" stop-color="#ff6800"/><stop offset="0.8246" stop-color="#ff3c00"/><stop offset="1" stop-color="#ff1900"/></linearGradient><linearGradient id="c78"><stop offset="0" stop-color="#00ff81"/><stop offset="0.1951" stop-color="#00ff6a"/><stop offset="0.3557" stop-color="#00ff4e"/><stop offset="0.3836" stop-color="#1eff48"/><stop offset="0.4574" stop-color="#7cff37"/><stop offset="0.5" stop-color="#bbff2b"/><stop offset="0.5393" stop-color="#fdff1f"/><stop offset="0.5656" stop-color="#ffd813"/><stop offset="0.6016" stop-color="#ffae06"/><stop offset="0.623" stop-color="#ff9b00"/><stop offset="0.6557" stop-color="#ff8200"/><stop offset="0.7066" stop-color="#ff6500"/><stop offset="0.7639" stop-color="#ff4d00"/><stop offset="0.8361" stop-color="#ff3700"/><stop offset="1" stop-color="#ff1800"/></linearGradient><linearGradient id="c79"><stop offset="0" stop-color="#00ff84"/><stop offset="0.1967" stop-color="#00ff6d"/><stop offset="0.3541" stop-color="#00ff52"/><stop offset="0.4459" stop-color="#70ff3e"/><stop offset="0.4902" stop-color="#b1ff32"/><stop offset="0.5361" stop-color="#feff24"/><stop offset="0.5689" stop-color="#ffce14"/><stop offset="0.6" stop-color="#ffab09"/><stop offset="0.6311" stop-color="#ff9000"/><stop offset="0.6967" stop-color="#ff6700"/><stop offset="0.8213" stop-color="#ff3900"/><stop offset="1" stop-color="#ff1600"/></linearGradient><linearGradient id="c80"><stop offset="0" stop-color="#00ff87"/><stop offset="0.1918" stop-color="#00ff71"/><stop offset="0.3525" stop-color="#00ff56"/><stop offset="0.3967" stop-color="#33ff4d"/><stop offset="0.4459" stop-color="#74ff41"/><stop offset="0.4918" stop-color="#b9ff35"/><stop offset="0.5328" stop-color="#ffff29"/><stop offset="0.5623" stop-color="#ffd119"/><stop offset="0.6016" stop-color="#ffa50b"/><stop offset="0.6393" stop-color="#ff8700"/><stop offset="0.6951" stop-color="#ff6500"/><stop offset="0.818" stop-color="#ff3800"/><stop offset="1" stop-color="#ff1500"/></linearGradient><linearGradient id="c81"><stop offset="0" stop-color="#00ff8a"/><stop offset="0.1951" stop-color="#00ff74"/><stop offset="0.3508" stop-color="#00ff5a"/><stop offset="0.3984" stop-color="#38ff50"/><stop offset="0.4492" stop-color="#7dff44"/><stop offset="0.4803" stop-color="#acff3c"/><stop offset="0.5279" stop-color="#fdff2e"/><stop offset="0.5574" stop-color="#ffd21e"/><stop offset="0.5918" stop-color="#ffaa10"/><stop offset="0.6475" stop-color="#ff7d00"/><stop offset="0.6852" stop-color="#ff6700"/><stop offset="0.7393" stop-color="#ff4f00"/><stop offset="0.818" stop-color="#ff3600"/><stop offset="1" stop-color="#ff1400"/></linearGradient><linearGradient id="c82"><stop offset="0" stop-color="#00ff8d"/><stop offset="0.1836" stop-color="#00ff79"/><stop offset="0.3492" stop-color="#00ff5e"/><stop offset="0.3984" stop-color="#3bff54"/><stop offset="0.4443" stop-color="#7aff49"/><stop offset="0.482" stop-color="#b4ff40"/><stop offset="0.5246" stop-color="#feff33"/><stop offset="0.5525" stop-color="#ffd323"/><stop offset="0.5902" stop-color="#ffa713"/><stop offset="0.6557" stop-color="#ff7500"/><stop offset="0.6852" stop-color="#ff6400"/><stop offset="0.7492" stop-color="#ff4900"/><stop offset="0.818" stop-color="#ff3400"/><stop offset="1" stop-color="#ff1300"/></linearGradient><linearGradient id="c83"><stop offset="0" stop-color="#00ff90"/><stop offset="0.1803" stop-color="#00ff7d"/><stop offset="0.3475" stop-color="#00ff62"/><stop offset="0.3967" stop-color="#3cff58"/><stop offset="0.4426" stop-color="#7cff4e"/><stop offset="0.4803" stop-color="#b7ff44"/><stop offset="0.5213" stop-color="#ffff38"/><stop offset="0.5525" stop-color="#ffcd25"/><stop offset="0.5885" stop-color="#ffa416"/><stop offset="0.6295" stop-color="#ff8209"/><stop offset="0.6836" stop-color="#ff6200"/><stop offset="0.7508" stop-color="#ff4600"/><stop offset="0.8148" stop-color="#ff3300"/><stop offset="1" stop-color="#ff1100"/></linearGradient><linearGradient id="c84"><stop offset="0" stop-color="#00ff94"/><stop offset="0.1852" stop-color="#00ff80"/><stop offset="0.3459" stop-color="#00ff67"/><stop offset="0.3951" stop-color="#3dff5d"/><stop offset="0.4377" stop-color="#79ff53"/><stop offset="0.4721" stop-color="#afff4b"/><stop offset="0.5164" stop-color="#fdff3e"/><stop offset="0.5475" stop-color="#ffce2a"/><stop offset="0.5869" stop-color="#ffa118"/><stop offset="0.6344" stop-color="#ff7b09"/><stop offset="0.6836" stop-color="#ff5f00"/><stop offset="0.7443" stop-color="#ff4600"/><stop offset="0.8148" stop-color="#ff3100"/><stop offset="1" stop-color="#ff1000"/></linearGradient><linearGradient id="c85"><stop offset="0" stop-color="#00ff97"/><stop offset="0.1984" stop-color="#00ff82"/><stop offset="0.3443" stop-color="#00ff6b"/><stop offset="0.3934" stop-color="#3eff61"/><stop offset="0.4328" stop-color="#76ff59"/><stop offset="0.477" stop-color="#bdff4e"/><stop offset="0.5131" stop-color="#ffff44"/><stop offset="0.5426" stop-color="#ffcf30"/><stop offset="0.577" stop-color="#ffa61e"/><stop offset="0.6164" stop-color="#ff8410"/><stop offset="0.6738" stop-color="#ff6101"/><stop offset="0.7377" stop-color="#ff4600"/><stop offset="0.8033" stop-color="#ff3200"/><stop offset="1" stop-color="#ff0f00"/></linearGradient><linearGradient id="c86"><stop offset="0" stop-color="#00ff9a"/><stop offset="0.2049" stop-color="#00ff85"/><stop offset="0.3426" stop-color="#00ff6f"/><stop offset="0.4246" stop-color="#6eff5f"/><stop offset="0.4672" stop-color="#b2ff55"/><stop offset="0.5098" stop-color="#fffe49"/><stop offset="0.5426" stop-color="#ffc932"/><stop offset="0.5836" stop-color="#ff9b1e"/><stop offset="0.6328" stop-color="#ff750d"/><stop offset="0.6738" stop-color="#ff5e03"/><stop offset="0.7393" stop-color="#ff4300"/><stop offset="0.8115" stop-color="#ff2e00"/><stop offset="1" stop-color="#ff0d00"/></linearGradient><linearGradient id="c87"><stop offset="0" stop-color="#00ff9e"/><stop offset="0.2049" stop-color="#00ff89"/><stop offset="0.3393" stop-color="#00ff74"/><stop offset="0.3738" stop-color="#2aff6e"/><stop offset="0.4164" stop-color="#66ff65"/><stop offset="0.4574" stop-color="#a7ff5c"/><stop offset="0.5066" stop-color="#fffd4e"/><stop offset="0.5361" stop-color="#ffcc38"/><stop offset="0.5787" stop-color="#ff9b22"/><stop offset="0.6213" stop-color="#ff7912"/><stop offset="0.6738" stop-color="#ff5b05"/><stop offset="0.7443" stop-color="#ff3f00"/><stop offset="0.8164" stop-color="#ff2b00"/><stop offset="1" stop-color="#ff0c00"/></linearGradient><linearGradient id="c88"><stop offset="0" stop-color="#00ffa1"/><stop offset="0.1721" stop-color="#00ff91"/><stop offset="0.3377" stop-color="#00ff79"/><stop offset="0.3869" stop-color="#3fff70"/><stop offset="0.4279" stop-color="#7cff68"/><stop offset="0.4656" stop-color="#bbff5f"/><stop offset="0.5016" stop-color="#ffff55"/><stop offset="0.5361" stop-color="#ffc63b"/><stop offset="0.5689" stop-color="#ffa029"/><stop offset="0.6131" stop-color="#ff7b17"/><stop offset="0.6639" stop-color="#ff5d09"/><stop offset="0.7033" stop-color="#ff4c00"/><stop offset="0.8082" stop-color="#ff2b00"/><stop offset="1" stop-color="#ff0b00"/></linearGradient><linearGradient id="c89"><stop offset="0" stop-color="#00ffa5"/><stop offset="0.1902" stop-color="#00ff93"/><stop offset="0.3361" stop-color="#00ff7e"/><stop offset="0.3738" stop-color="#30ff77"/><stop offset="0.4148" stop-color="#6cff6f"/><stop offset="0.4525" stop-color="#aaff67"/><stop offset="0.4984" stop-color="#fffe5b"/><stop offset="0.5295" stop-color="#ffc941"/><stop offset="0.5721" stop-color="#ff9829"/><stop offset="0.6164" stop-color="#ff7518"/><stop offset="0.6721" stop-color="#ff5608"/><stop offset="0.7115" stop-color="#ff4600"/><stop offset="0.8131" stop-color="#ff2800"/><stop offset="1" stop-color="#ff0a00"/></linearGradient><linearGradient id="c90"><stop offset="0" stop-color="#00ffa9"/><stop offset="0.1918" stop-color="#00ff97"/><stop offset="0.3344" stop-color="#00ff83"/><stop offset="0.3721" stop-color="#31ff7d"/><stop offset="0.4164" stop-color="#73ff74"/><stop offset="0.4951" stop-color="#fffc61"/><stop offset="0.5295" stop-color="#ffc343"/><stop offset="0.5623" stop-color="#ff9d30"/><stop offset="0.6066" stop-color="#ff781d"/><stop offset="0.6639" stop-color="#ff570c"/><stop offset="0.7197" stop-color="#ff4100"/><stop offset="0.7967" stop-color="#ff2a00"/><stop offset="1" stop-color="#ff0800"/></linearGradient><linearGradient id="c91"><stop offset="0" stop-color="#00ffac"/><stop offset="0.177" stop-color="#00ff9d"/><stop offset="0.3328" stop-color="#00ff88"/><stop offset="0.4066" stop-color="#68ff7b"/><stop offset="0.4475" stop-color="#adff73"/><stop offset="0.4902" stop-color="#fffe68"/><stop offset="0.523" stop-color="#ffc64a"/><stop offset="0.5574" stop-color="#ff9d35"/><stop offset="0.6098" stop-color="#ff721e"/><stop offset="0.6639" stop-color="#ff540e"/><stop offset="0.7279" stop-color="#ff3c00"/><stop offset="0.8016" stop-color="#ff2700"/><stop offset="1" stop-color="#ff0700"/></linearGradient><linearGradient id="c92"><stop offset="0" stop-color="#00ffb0"/><stop offset="0.2" stop-color="#00ff9f"/><stop offset="0.3311" stop-color="#00ff8e"/><stop offset="0.3738" stop-color="#3aff87"/><stop offset="0.4148" stop-color="#7aff7f"/><stop offset="0.4869" stop-color="#fffd6e"/><stop offset="0.523" stop-color="#ffc04d"/><stop offset="0.5607" stop-color="#ff9535"/><stop offset="0.6" stop-color="#ff7523"/><stop offset="0.6557" stop-color="#ff5511"/><stop offset="0.7361" stop-color="#ff3700"/><stop offset="0.7934" stop-color="#ff2700"/><stop offset="1" stop-color="#ff0600"/></linearGradient><linearGradient id="c93"><stop offset="0" stop-color="#00ffb4"/><stop offset="0.177" stop-color="#00ffa6"/><stop offset="0.3295" stop-color="#00ff93"/><stop offset="0.3754" stop-color="#40ff8c"/><stop offset="0.4131" stop-color="#7cff85"/><stop offset="0.4541" stop-color="#c6ff7d"/><stop offset="0.482" stop-color="#ffff76"/><stop offset="0.5164" stop-color="#ffc354"/><stop offset="0.5557" stop-color="#ff953a"/><stop offset="0.6033" stop-color="#ff6f24"/><stop offset="0.6557" stop-color="#ff5213"/><stop offset="0.7443" stop-color="#ff3200"/><stop offset="0.8639" stop-color="#ff1700"/><stop offset="1" stop-color="#ff0500"/></linearGradient><linearGradient id="c94"><stop offset="0" stop-color="#00ffb8"/><stop offset="0.3279" stop-color="#00ff99"/><stop offset="0.3623" stop-color="#30ff93"/><stop offset="0.4066" stop-color="#76ff8c"/><stop offset="0.4459" stop-color="#bdff84"/><stop offset="0.4787" stop-color="#fffe7d"/><stop offset="0.5066" stop-color="#ffcb5f"/><stop offset="0.5508" stop-color="#ff953e"/><stop offset="0.5918" stop-color="#ff732a"/><stop offset="0.6475" stop-color="#ff5317"/><stop offset="0.7525" stop-color="#ff2e00"/><stop offset="0.8607" stop-color="#ff1600"/><stop offset="1" stop-color="#ff0400"/></linearGradient><linearGradient id="c95"><stop offset="0" stop-color="#00ffbc"/><stop offset="0.182" stop-color="#00ffaf"/><stop offset="0.3262" stop-color="#00ff9e"/><stop offset="0.3738" stop-color="#45ff97"/><stop offset="0.4066" stop-color="#7bff92"/><stop offset="0.4754" stop-color="#fffc83"/><stop offset="0.5049" stop-color="#ffc762"/><stop offset="0.541" stop-color="#ff9a46"/><stop offset="0.5836" stop-color="#ff752f"/><stop offset="0.641" stop-color="#ff531a"/><stop offset="0.7" stop-color="#ff3b0b"/><stop offset="0.7607" stop-color="#ff2a00"/><stop offset="0.8689" stop-color="#ff1300"/><stop offset="1" stop-color="#ff0200"/></linearGradient><linearGradient id="c96"><stop offset="0" stop-color="#00ffc1"/><stop offset="0.3246" stop-color="#00ffa4"/><stop offset="0.3656" stop-color="#3cff9f"/><stop offset="0.4082" stop-color="#83ff98"/><stop offset="0.4705" stop-color="#ffff8c"/><stop offset="0.4967" stop-color="#ffcd6c"/><stop offset="0.5361" stop-color="#ff9a4c"/><stop offset="0.5836" stop-color="#ff7131"/><stop offset="0.641" stop-color="#ff501c"/><stop offset="0.7016" stop-color="#ff380c"/><stop offset="0.7689" stop-color="#ff2500"/><stop offset="0.8656" stop-color="#ff1200"/><stop offset="1" stop-color="#ff0100"/></linearGradient><linearGradient id="c97"><stop offset="0" stop-color="#00ffc5"/><stop offset="0.3213" stop-color="#00ffab"/><stop offset="0.3607" stop-color="#38ffa6"/><stop offset="0.3951" stop-color="#71ffa1"/><stop offset="0.4295" stop-color="#b1ff9b"/><stop offset="0.4672" stop-color="#fffd93"/><stop offset="0.4852" stop-color="#ffd97b"/><stop offset="0.5016" stop-color="#ffbf6a"/><stop offset="0.541" stop-color="#ff904a"/><stop offset="0.5852" stop-color="#ff6c32"/><stop offset="0.641" stop-color="#ff4d1e"/><stop offset="0.7066" stop-color="#ff340d"/><stop offset="0.7754" stop-color="#ff2200"/><stop offset="0.8885" stop-color="#ff0d00"/><stop offset="1" stop-color="#ff0000"/></linearGradient><linearGradient id="c98"><stop offset="0" stop-color="#00ffc9"/><stop offset="0.3197" stop-color="#00ffb1"/><stop offset="0.3557" stop-color="#34ffad"/><stop offset="0.4" stop-color="#7fffa6"/><stop offset="0.4311" stop-color="#bbffa2"/><stop offset="0.4623" stop-color="#ffff9c"/><stop offset="0.4918" stop-color="#ffc776"/><stop offset="0.5311" stop-color="#ff9553"/><stop offset="0.5754" stop-color="#ff6f39"/><stop offset="0.6344" stop-color="#ff4d21"/><stop offset="0.6902" stop-color="#ff3712"/><stop offset="0.7836" stop-color="#ff1e00"/><stop offset="0.9066" stop-color="#ff0900"/><stop offset="1" stop-color="#ff0000"/></linearGradient><linearGradient id="c99"><stop offset="0" stop-color="#00ffce"/><stop offset="0.318" stop-color="#00ffb7"/><stop offset="0.3803" stop-color="#61ffb0"/><stop offset="0.4213" stop-color="#aeffaa"/><stop offset="0.459" stop-color="#fffea4"/><stop offset="0.4869" stop-color="#ffc87d"/><stop offset="0.5262" stop-color="#ff9559"/><stop offset="0.5754" stop-color="#ff6b3a"/><stop offset="0.6344" stop-color="#ff4a23"/><stop offset="0.718" stop-color="#ff2c0d"/><stop offset="0.7918" stop-color="#ff1b00"/><stop offset="0.9115" stop-color="#ff0700"/><stop offset="1" stop-color="#ff0000"/></linearGradient><linearGradient id="c100"><stop offset="0" stop-color="#00ffd3"/><stop offset="0.3164" stop-color="#00ffbe"/><stop offset="0.377" stop-color="#60ffb8"/><stop offset="0.4115" stop-color="#a1ffb3"/><stop offset="0.4557" stop-color="#fffcab"/><stop offset="0.482" stop-color="#ffc985"/><stop offset="0.5033" stop-color="#ffaa6e"/><stop offset="0.5279" stop-color="#ff8e59"/><stop offset="0.577" stop-color="#ff663b"/><stop offset="0.6279" stop-color="#ff4a27"/><stop offset="0.7033" stop-color="#ff2e12"/><stop offset="0.8" stop-color="#ff1700"/><stop offset="0.9328" stop-color="#ff0300"/><stop offset="1" stop-color="#ff0000"/></linearGradient><linearGradient id="c101"><stop offset="0" stop-color="#00ffd7"/><stop offset="0.3148" stop-color="#00ffc5"/><stop offset="0.3475" stop-color="#32ffc2"/><stop offset="0.3836" stop-color="#71ffbe"/><stop offset="0.4131" stop-color="#abffbb"/><stop offset="0.4508" stop-color="#ffffb6"/><stop offset="0.482" stop-color="#ffc287"/><stop offset="0.518" stop-color="#ff9363"/><stop offset="0.5656" stop-color="#ff6a43"/><stop offset="0.6213" stop-color="#ff4a2a"/><stop offset="0.7164" stop-color="#ff2810"/><stop offset="0.8082" stop-color="#ff1400"/><stop offset="0.9475" stop-color="#ff0000"/><stop offset="1" stop-color="#ff0000"/></linearGradient><linearGradient id="c102"><stop offset="0" stop-color="#00ffdc"/><stop offset="0.3131" stop-color="#00ffcc"/><stop offset="0.3754" stop-color="#67ffc7"/><stop offset="0.4098" stop-color="#abffc3"/><stop offset="0.4475" stop-color="#fffdbd"/><stop offset="0.4623" stop-color="#ffdda4"/><stop offset="0.482" stop-color="#ffbb89"/><stop offset="0.5131" stop-color="#ff9369"/><stop offset="0.5557" stop-color="#ff6d4a"/><stop offset="0.6148" stop-color="#ff4a2e"/><stop offset="0.7049" stop-color="#ff2914"/><stop offset="0.8164" stop-color="#ff1100"/><stop offset="0.9361" stop-color="#ff0000"/><stop offset="1" stop-color="#ff0000"/></linearGradient><linearGradient id="c103"><stop offset="0" stop-color="#00ffe1"/><stop offset="0.3115" stop-color="#00ffd3"/><stop offset="0.3459" stop-color="#37ffd1"/><stop offset="0.382" stop-color="#79ffce"/><stop offset="0.4443" stop-color="#fffcc5"/><stop offset="0.4738" stop-color="#ffc195"/><stop offset="0.5148" stop-color="#ff8c69"/><stop offset="0.5672" stop-color="#ff6146"/><stop offset="0.6213" stop-color="#ff442d"/><stop offset="0.7115" stop-color="#ff2514"/><stop offset="0.8246" stop-color="#ff0e00"/><stop offset="0.9246" stop-color="#ff0000"/><stop offset="1" stop-color="#ff0000"/></linearGradient><linearGradient id="c104"><stop offset="0" stop-color="#00ffe6"/><stop offset="0.3098" stop-color="#00ffdb"/><stop offset="0.3475" stop-color="#3effd9"/><stop offset="0.377" stop-color="#75ffd7"/><stop offset="0.4082" stop-color="#b6ffd4"/><stop offset="0.4393" stop-color="#fffed1"/><stop offset="0.4705" stop-color="#ffbf9b"/><stop offset="0.5098" stop-color="#ff8c6f"/><stop offset="0.5525" stop-color="#ff6750"/><stop offset="0.6213" stop-color="#ff412f"/><stop offset="0.7148" stop-color="#ff2214"/><stop offset="0.8246" stop-color="#ff0c01"/><stop offset="0.9131" stop-color="#ff0000"/><stop offset="1" stop-color="#ff0000"/></linearGradient><linearGradient id="c105"><stop offset="0" stop-color="#00ffec"/><stop offset="0.3082" stop-color="#00ffe3"/><stop offset="0.3721" stop-color="#71ffe0"/><stop offset="0.4016" stop-color="#afffde"/><stop offset="0.4361" stop-color="#fffdda"/><stop offset="0.4656" stop-color="#ffc0a4"/><stop offset="0.5" stop-color="#ff917a"/><stop offset="0.5525" stop-color="#ff6351"/><stop offset="0.6098" stop-color="#ff4335"/><stop offset="0.6984" stop-color="#ff2419"/><stop offset="0.818" stop-color="#ff0c03"/><stop offset="0.9016" stop-color="#ff0000"/><stop offset="1" stop-color="#ff0000"/></linearGradient><linearGradient id="c106"><stop offset="0" stop-color="#00fff1"/><stop offset="0.3066" stop-color="#00ffeb"/><stop offset="0.3344" stop-color="#2fffea"/><stop offset="0.377" stop-color="#81ffe8"/><stop offset="0.4066" stop-color="#c2ffe7"/><stop offset="0.4311" stop-color="#ffffe6"/><stop offset="0.4475" stop-color="#ffd9c4"/><stop offset="0.4623" stop-color="#ffbeab"/><stop offset="0.5033" stop-color="#ff8879"/><stop offset="0.5525" stop-color="#ff5f53"/><stop offset="0.6098" stop-color="#ff4036"/><stop offset="0.7016" stop-color="#ff211a"/><stop offset="0.8328" stop-color="#ff0802"/><stop offset="0.8902" stop-color="#ff0000"/><stop offset="1" stop-color="#ff0000"/></linearGradient><linearGradient id="c107"><stop offset="0" stop-color="#00fff7"/><stop offset="0.3033" stop-color="#00fff3"/><stop offset="0.3197" stop-color="#19fff3"/><stop offset="0.3689" stop-color="#76fff2"/><stop offset="0.3967" stop-color="#b3fff2"/><stop offset="0.4279" stop-color="#fffdef"/><stop offset="0.441" stop-color="#ffded2"/><stop offset="0.459" stop-color="#ffbcb1"/><stop offset="0.5" stop-color="#ff867e"/><stop offset="0.5377" stop-color="#ff665e"/><stop offset="0.6049" stop-color="#ff3f3a"/><stop offset="0.6967" stop-color="#ff201c"/><stop offset="0.8262" stop-color="#ff0704"/><stop offset="0.8787" stop-color="#ff0000"/><stop offset="1" stop-color="#ff0000"/></linearGradient><linearGradient id="c108"><stop offset="0" stop-color="#00fffc"/><stop offset="0.3016" stop-color="#00fffc"/><stop offset="0.3148" stop-color="#14fffc"/><stop offset="0.3607" stop-color="#6bfffc"/><stop offset="0.3869" stop-color="#a4fffc"/><stop offset="0.4246" stop-color="#fffcf9"/><stop offset="0.4393" stop-color="#ffd9d6"/><stop offset="0.4557" stop-color="#ffbab8"/><stop offset="0.4951" stop-color="#ff8684"/><stop offset="0.5475" stop-color="#ff5b59"/><stop offset="0.6049" stop-color="#ff3c3c"/><stop offset="0.6902" stop-color="#ff201f"/><stop offset="0.8262" stop-color="#ff0605"/><stop offset="0.8672" stop-color="#ff0000"/><stop offset="1" stop-color="#ff0000"/></linearGradient><linearGradient id="c109"><stop offset="0" stop-color="#00fcff"/><stop offset="0.3" stop-color="#00f9ff"/><stop offset="0.3426" stop-color="#4af8ff"/><stop offset="0.3689" stop-color="#7ff8ff"/><stop offset="0.423" stop-color="#fff6fe"/><stop offset="0.4361" stop-color="#ffd7de"/><stop offset="0.4525" stop-color="#ffb8bf"/><stop offset="0.4902" stop-color="#ff868b"/><stop offset="0.5361" stop-color="#ff5e63"/><stop offset="0.6016" stop-color="#ff3b3e"/><stop offset="0.6951" stop-color="#ff1c1f"/><stop offset="0.8246" stop-color="#ff0407"/><stop offset="0.8738" stop-color="#ff0000"/><stop offset="1" stop-color="#ff0000"/></linearGradient><linearGradient id="c110"><stop offset="0" stop-color="#00f6ff"/><stop offset="0.2984" stop-color="#00f1ff"/><stop offset="0.323" stop-color="#28f0ff"/><stop offset="0.3672" stop-color="#7deeff"/><stop offset="0.3984" stop-color="#c2edff"/><stop offset="0.423" stop-color="#ffecff"/><stop offset="0.4361" stop-color="#ffcee0"/><stop offset="0.4525" stop-color="#ffb1c0"/><stop offset="0.4934" stop-color="#ff7d89"/><stop offset="0.5361" stop-color="#ff5a64"/><stop offset="0.6049" stop-color="#ff363e"/><stop offset="0.7" stop-color="#ff191f"/><stop offset="0.8131" stop-color="#ff0409"/><stop offset="0.8803" stop-color="#ff0000"/><stop offset="1" stop-color="#ff0000"/></linearGradient><linearGradient id="c111"><stop offset="0" stop-color="#00f1ff"/><stop offset="0.2967" stop-color="#00e8ff"/><stop offset="0.3295" stop-color="#36e7ff"/><stop offset="0.3607" stop-color="#71e5ff"/><stop offset="0.3934" stop-color="#b7e3ff"/><stop offset="0.423" stop-color="#ffe1ff"/><stop offset="0.4377" stop-color="#ffc3dd"/><stop offset="0.4557" stop-color="#ffa5bc"/><stop offset="0.4951" stop-color="#ff7689"/><stop offset="0.5426" stop-color="#ff5261"/><stop offset="0.6082" stop-color="#ff323e"/><stop offset="0.7131" stop-color="#ff141d"/><stop offset="0.8311" stop-color="#ff0008"/><stop offset="0.8885" stop-color="#ff0000"/><stop offset="1" stop-color="#ff0000"/></linearGradient><linearGradient id="c112"><stop offset="0" stop-color="#00ebff"/><stop offset="0.2951" stop-color="#00e0ff"/><stop offset="0.3574" stop-color="#6cdcff"/><stop offset="0.3902" stop-color="#b0daff"/><stop offset="0.4246" stop-color="#ffd5fc"/><stop offset="0.4541" stop-color="#ffa0c0"/><stop offset="0.4754" stop-color="#ff85a1"/><stop offset="0.4984" stop-color="#ff6e87"/><stop offset="0.5377" stop-color="#ff5166"/><stop offset="0.6" stop-color="#ff3243"/><stop offset="0.7016" stop-color="#ff1521"/><stop offset="0.8197" stop-color="#ff000b"/><stop offset="0.8967" stop-color="#ff0000"/><stop offset="1" stop-color="#ff0000"/></linearGradient><linearGradient id="c113"><stop offset="0" stop-color="#00e6ff"/><stop offset="0.2934" stop-color="#00d8ff"/><stop offset="0.323" stop-color="#2fd6ff"/><stop offset="0.3623" stop-color="#77d3ff"/><stop offset="0.4246" stop-color="#ffccfd"/><stop offset="0.4393" stop-color="#ffb0dc"/><stop offset="0.4574" stop-color="#ff95bc"/><stop offset="0.4951" stop-color="#ff6c8c"/><stop offset="0.5443" stop-color="#ff4963"/><stop offset="0.6033" stop-color="#ff2e43"/><stop offset="0.6836" stop-color="#ff1727"/><stop offset="0.8082" stop-color="#ff000d"/><stop offset="0.9049" stop-color="#ff0000"/><stop offset="1" stop-color="#ff0000"/></linearGradient><linearGradient id="c114"><stop offset="0" stop-color="#00e0ff"/><stop offset="0.2918" stop-color="#00d1ff"/><stop offset="0.3246" stop-color="#34ceff"/><stop offset="0.359" stop-color="#72cbff"/><stop offset="0.3984" stop-color="#c3c7ff"/><stop offset="0.4246" stop-color="#ffc3fe"/><stop offset="0.4393" stop-color="#ffa8dd"/><stop offset="0.4557" stop-color="#ff91c0"/><stop offset="0.4918" stop-color="#ff6a91"/><stop offset="0.5377" stop-color="#ff4969"/><stop offset="0.6066" stop-color="#ff2a43"/><stop offset="0.6918" stop-color="#ff1326"/><stop offset="0.7967" stop-color="#ff0010"/><stop offset="0.9131" stop-color="#ff0000"/><stop offset="1" stop-color="#ff0000"/></linearGradient><linearGradient id="c115"><stop offset="0" stop-color="#00dbff"/><stop offset="0.2902" stop-color="#00caff"/><stop offset="0.3262" stop-color="#39c6ff"/><stop offset="0.3656" stop-color="#80c2ff"/><stop offset="0.4246" stop-color="#ffbafe"/><stop offset="0.4541" stop-color="#ff8cc4"/><stop offset="0.4951" stop-color="#ff628f"/><stop offset="0.5426" stop-color="#ff4367"/><stop offset="0.6049" stop-color="#ff2845"/><stop offset="0.6852" stop-color="#ff1229"/><stop offset="0.7852" stop-color="#ff0013"/><stop offset="0.9213" stop-color="#ff0000"/><stop offset="1" stop-color="#ff0000"/></linearGradient><linearGradient id="c116"><stop offset="0" stop-color="#00d6ff"/><stop offset="0.2885" stop-color="#00c2ff"/><stop offset="0.3262" stop-color="#3bbfff"/><stop offset="0.3639" stop-color="#7ebaff"/><stop offset="0.3902" stop-color="#b2b7ff"/><stop offset="0.4246" stop-color="#ffb2ff"/><stop offset="0.4541" stop-color="#ff86c5"/><stop offset="0.4984" stop-color="#ff5b8d"/><stop offset="0.5525" stop-color="#ff3a62"/><stop offset="0.6082" stop-color="#ff2445"/><stop offset="0.6721" stop-color="#ff132e"/><stop offset="0.7738" stop-color="#ff0016"/><stop offset="0.9295" stop-color="#ff0000"/><stop offset="1" stop-color="#ff0000"/></linearGradient><linearGradient id="c117"><stop offset="0" stop-color="#00d1ff"/><stop offset="0.2852" stop-color="#00bcff"/><stop offset="0.3164" stop-color="#2db8ff"/><stop offset="0.3557" stop-color="#70b3ff"/><stop offset="0.4262" stop-color="#ffa7fc"/><stop offset="0.4393" stop-color="#ff92e0"/><stop offset="0.4623" stop-color="#ff76ba"/><stop offset="0.5" stop-color="#ff558d"/><stop offset="0.5426" stop-color="#ff3c6a"/><stop offset="0.6066" stop-color="#ff2247"/><stop offset="0.6869" stop-color="#ff0d2b"/><stop offset="0.7623" stop-color="#ff001a"/><stop offset="0.9279" stop-color="#ff0001"/><stop offset="1" stop-color="#ff0000"/></linearGradient><linearGradient id="c118"><stop offset="0" stop-color="#00ccff"/><stop offset="0.2836" stop-color="#00b5ff"/><stop offset="0.3459" stop-color="#60adff"/><stop offset="0.377" stop-color="#99a9ff"/><stop offset="0.4262" stop-color="#ff9ffd"/><stop offset="0.4393" stop-color="#ff8ce1"/><stop offset="0.4623" stop-color="#ff71bb"/><stop offset="0.5033" stop-color="#ff4f8b"/><stop offset="0.5492" stop-color="#ff3567"/><stop offset="0.6098" stop-color="#ff1e47"/><stop offset="0.677" stop-color="#ff0d2f"/><stop offset="0.7492" stop-color="#ff001d"/><stop offset="0.918" stop-color="#ff0003"/><stop offset="1" stop-color="#ff0000"/></linearGradient><linearGradient id="c119"><stop offset="0" stop-color="#00c7ff"/><stop offset="0.282" stop-color="#00afff"/><stop offset="0.3213" stop-color="#39aaff"/><stop offset="0.3508" stop-color="#6aa5ff"/><stop offset="0.3869" stop-color="#ad9fff"/><stop offset="0.4262" stop-color="#ff97fd"/><stop offset="0.459" stop-color="#ff6ec1"/><stop offset="0.5016" stop-color="#ff4b8e"/><stop offset="0.5393" stop-color="#ff366f"/><stop offset="0.6082" stop-color="#ff1c49"/><stop offset="0.7377" stop-color="#ff0021"/><stop offset="0.8836" stop-color="#ff0008"/><stop offset="1" stop-color="#ff0000"/></linearGradient><linearGradient id="c120"><stop offset="0" stop-color="#00c2ff"/><stop offset="0.2803" stop-color="#00a8ff"/><stop offset="0.3246" stop-color="#40a2ff"/><stop offset="0.3557" stop-color="#749dff"/><stop offset="0.3902" stop-color="#b497ff"/><stop offset="0.4262" stop-color="#ff90fe"/><stop offset="0.4443" stop-color="#ff78da"/><stop offset="0.4607" stop-color="#ff67c0"/><stop offset="0.5" stop-color="#ff4891"/><stop offset="0.5443" stop-color="#ff306d"/><stop offset="0.6066" stop-color="#ff1a4b"/><stop offset="0.7262" stop-color="#ff0025"/><stop offset="0.8754" stop-color="#ff000a"/><stop offset="1" stop-color="#ff0000"/></linearGradient><linearGradient id="c121"><stop offset="0" stop-color="#00bdff"/><stop offset="0.2787" stop-color="#00a2ff"/><stop offset="0.3049" stop-color="#249fff"/><stop offset="0.3574" stop-color="#7896ff"/><stop offset="0.3951" stop-color="#be8fff"/><stop offset="0.4262" stop-color="#ff89ff"/><stop offset="0.4443" stop-color="#ff72db"/><stop offset="0.4607" stop-color="#ff62c1"/><stop offset="0.4984" stop-color="#ff4594"/><stop offset="0.5508" stop-color="#ff2a6a"/><stop offset="0.6049" stop-color="#ff184d"/><stop offset="0.7148" stop-color="#ff0029"/><stop offset="0.8459" stop-color="#ff000f"/><stop offset="1" stop-color="#ff0000"/></linearGradient><linearGradient id="c122"><stop offset="0" stop-color="#00b9ff"/><stop offset="0.277" stop-color="#009cff"/><stop offset="0.3049" stop-color="#2698ff"/><stop offset="0.359" stop-color="#7c8fff"/><stop offset="0.3934" stop-color="#bb88ff"/><stop offset="0.4262" stop-color="#ff81ff"/><stop offset="0.4574" stop-color="#ff5fc7"/><stop offset="0.5016" stop-color="#ff3f92"/><stop offset="0.541" stop-color="#ff2b72"/><stop offset="0.6033" stop-color="#ff164f"/><stop offset="0.7033" stop-color="#ff002d"/><stop offset="0.7803" stop-color="#ff001b"/><stop offset="0.8885" stop-color="#ff000a"/><stop offset="1" stop-color="#ff0000"/></linearGradient><linearGradient id="c123"><stop offset="0" stop-color="#00b4ff"/><stop offset="0.2754" stop-color="#0097ff"/><stop offset="0.3164" stop-color="#3990ff"/><stop offset="0.3525" stop-color="#728aff"/><stop offset="0.4279" stop-color="#ff78fd"/><stop offset="0.4574" stop-color="#ff5ac8"/><stop offset="0.5" stop-color="#ff3c95"/><stop offset="0.5443" stop-color="#ff2671"/><stop offset="0.6016" stop-color="#ff1351"/><stop offset="0.6918" stop-color="#ff0031"/><stop offset="0.7508" stop-color="#ff0022"/><stop offset="0.8656" stop-color="#ff000e"/><stop offset="1" stop-color="#ff0000"/></linearGradient><linearGradient id="c124"><stop offset="0" stop-color="#00b0ff"/><stop offset="0.2738" stop-color="#0091ff"/><stop offset="0.3131" stop-color="#368aff"/><stop offset="0.3541" stop-color="#7683ff"/><stop offset="0.4279" stop-color="#ff72fd"/><stop offset="0.4623" stop-color="#ff50c2"/><stop offset="0.5033" stop-color="#ff3693"/><stop offset="0.5508" stop-color="#ff216e"/><stop offset="0.6066" stop-color="#ff1050"/><stop offset="0.6803" stop-color="#ff0035"/><stop offset="0.7557" stop-color="#ff0022"/><stop offset="0.8721" stop-color="#ff000e"/><stop offset="1" stop-color="#ff0000"/></linearGradient><linearGradient id="c125"><stop offset="0" stop-color="#00abff"/><stop offset="0.2721" stop-color="#008bff"/><stop offset="0.318" stop-color="#3f84ff"/><stop offset="0.3607" stop-color="#827bff"/><stop offset="0.4279" stop-color="#ff6bfe"/><stop offset="0.4541" stop-color="#ff52cf"/><stop offset="0.4984" stop-color="#ff3499"/><stop offset="0.5393" stop-color="#ff2277"/><stop offset="0.6049" stop-color="#ff0e52"/><stop offset="0.6689" stop-color="#ff003a"/><stop offset="0.7557" stop-color="#ff0023"/><stop offset="0.8639" stop-color="#ff0010"/><stop offset="1" stop-color="#ff0001"/></linearGradient><linearGradient id="c126"><stop offset="0" stop-color="#00a7ff"/><stop offset="0.2705" stop-color="#0086ff"/><stop offset="0.3508" stop-color="#7377ff"/><stop offset="0.3754" stop-color="#9c72ff"/><stop offset="0.4279" stop-color="#ff65ff"/><stop offset="0.4639" stop-color="#ff45c2"/><stop offset="0.5049" stop-color="#ff2d94"/><stop offset="0.5426" stop-color="#ff1d76"/><stop offset="0.6098" stop-color="#ff0a51"/><stop offset="0.6574" stop-color="#ff003f"/><stop offset="0.7557" stop-color="#ff0024"/><stop offset="0.8705" stop-color="#ff0010"/><stop offset="1" stop-color="#ff0001"/></linearGradient><linearGradient id="c127"><stop offset="0" stop-color="#00a3ff"/><stop offset="0.2689" stop-color="#0081ff"/><stop offset="0.3164" stop-color="#4078ff"/><stop offset="0.3557" stop-color="#7c70ff"/><stop offset="0.382" stop-color="#a86aff"/><stop offset="0.4279" stop-color="#ff5fff"/><stop offset="0.4639" stop-color="#ff40c3"/><stop offset="0.5" stop-color="#ff2c9a"/><stop offset="0.5459" stop-color="#ff1975"/><stop offset="0.6082" stop-color="#ff0853"/><stop offset="0.6443" stop-color="#ff0045"/><stop offset="0.7557" stop-color="#ff0025"/><stop offset="0.8623" stop-color="#ff0012"/><stop offset="1" stop-color="#ff0002"/></linearGradient><linearGradient id="c128"><stop offset="0" stop-color="#009eff"/><stop offset="0.2656" stop-color="#007cff"/><stop offset="0.2934" stop-color="#2277ff"/><stop offset="0.3475" stop-color="#706cff"/><stop offset="0.4295" stop-color="#ff57fc"/><stop offset="0.4639" stop-color="#ff3cc4"/><stop offset="0.5033" stop-color="#ff2698"/><stop offset="0.5508" stop-color="#ff1473"/><stop offset="0.6131" stop-color="#ff0452"/><stop offset="0.6721" stop-color="#ff003c"/><stop offset="0.7557" stop-color="#ff0026"/><stop offset="0.8754" stop-color="#ff0011"/><stop offset="1" stop-color="#ff0003"/></linearGradient><linearGradient id="c129"><stop offset="0" stop-color="#009aff"/><stop offset="0.2639" stop-color="#0077ff"/><stop offset="0.3016" stop-color="#2f70ff"/><stop offset="0.3557" stop-color="#7e65ff"/><stop offset="0.4295" stop-color="#ff51fd"/><stop offset="0.4639" stop-color="#ff37c5"/><stop offset="0.5148" stop-color="#ff1e8f"/><stop offset="0.5803" stop-color="#ff0963"/><stop offset="0.618" stop-color="#ff0151"/><stop offset="0.7066" stop-color="#ff0033"/><stop offset="0.7951" stop-color="#ff001f"/><stop offset="1" stop-color="#ff0004"/></linearGradient><linearGradient id="c130"><stop offset="0" stop-color="#0096ff"/><stop offset="0.2623" stop-color="#0072ff"/><stop offset="0.3393" stop-color="#6663ff"/><stop offset="0.3787" stop-color="#a45aff"/><stop offset="0.4295" stop-color="#ff4bfe"/><stop offset="0.4574" stop-color="#ff37cf"/><stop offset="0.4984" stop-color="#ff219f"/><stop offset="0.541" stop-color="#ff127c"/><stop offset="0.6115" stop-color="#ff0055"/><stop offset="0.6607" stop-color="#ff0042"/><stop offset="0.7557" stop-color="#ff0028"/><stop offset="0.8803" stop-color="#ff0012"/><stop offset="1" stop-color="#ff0004"/></linearGradient><linearGradient id="c131"><stop offset="0" stop-color="#0092ff"/><stop offset="0.2607" stop-color="#006eff"/><stop offset="0.2984" stop-color="#2e66ff"/><stop offset="0.3426" stop-color="#6c5dff"/><stop offset="0.3885" stop-color="#b552ff"/><stop offset="0.4295" stop-color="#ff46fe"/><stop offset="0.4639" stop-color="#ff2ec7"/><stop offset="0.5082" stop-color="#ff1a97"/><stop offset="0.5443" stop-color="#ff0e7b"/><stop offset="0.6164" stop-color="#ff0054"/><stop offset="0.7557" stop-color="#ff0029"/><stop offset="0.8656" stop-color="#ff0015"/><stop offset="1" stop-color="#ff0005"/></linearGradient><linearGradient id="c132"><stop offset="0" stop-color="#008eff"/><stop offset="0.259" stop-color="#0069ff"/><stop offset="0.3" stop-color="#3261ff"/><stop offset="0.3459" stop-color="#7257ff"/><stop offset="0.3918" stop-color="#bb4bff"/><stop offset="0.4295" stop-color="#ff40ff"/><stop offset="0.4639" stop-color="#ff2ac8"/><stop offset="0.4967" stop-color="#ff1ba3"/><stop offset="0.5475" stop-color="#ff0a7a"/><stop offset="0.5869" stop-color="#ff0063"/><stop offset="0.6098" stop-color="#ff0058"/><stop offset="0.7033" stop-color="#ff0037"/><stop offset="0.7787" stop-color="#ff0025"/><stop offset="1" stop-color="#ff0006"/></linearGradient><linearGradient id="c133"><stop offset="0" stop-color="#008aff"/><stop offset="0.2574" stop-color="#0065ff"/><stop offset="0.3033" stop-color="#385bff"/><stop offset="0.3492" stop-color="#7851ff"/><stop offset="0.3934" stop-color="#be45ff"/><stop offset="0.4295" stop-color="#ff3bff"/><stop offset="0.4639" stop-color="#ff26c9"/><stop offset="0.5131" stop-color="#ff1195"/><stop offset="0.5754" stop-color="#ff006b"/><stop offset="0.6148" stop-color="#ff0057"/><stop offset="0.6672" stop-color="#ff0043"/><stop offset="0.7689" stop-color="#ff0028"/><stop offset="0.877" stop-color="#ff0015"/><stop offset="1" stop-color="#ff0007"/></linearGradient><linearGradient id="c134"><stop offset="0" stop-color="#0087ff"/><stop offset="0.2557" stop-color="#0060ff"/><stop offset="0.341" stop-color="#6d4eff"/><stop offset="0.3836" stop-color="#ae43ff"/><stop offset="0.4311" stop-color="#ff35fd"/><stop offset="0.4623" stop-color="#ff22cc"/><stop offset="0.5098" stop-color="#ff0f99"/><stop offset="0.5639" stop-color="#ff0072"/><stop offset="0.6197" stop-color="#ff0056"/><stop offset="0.7639" stop-color="#ff002a"/><stop offset="1" stop-color="#ff0007"/></linearGradient><linearGradient id="c135"><stop offset="0" stop-color="#0083ff"/><stop offset="0.2541" stop-color="#005cff"/><stop offset="0.3016" stop-color="#3952ff"/><stop offset="0.3492" stop-color="#7a47ff"/><stop offset="0.4311" stop-color="#ff2ffe"/><stop offset="0.4623" stop-color="#ff1ecd"/><stop offset="0.5098" stop-color="#ff0c9a"/><stop offset="0.5508" stop-color="#ff007c"/><stop offset="0.6246" stop-color="#ff0055"/><stop offset="0.7639" stop-color="#ff002b"/><stop offset="0.8885" stop-color="#ff0015"/><stop offset="1" stop-color="#ff0008"/></linearGradient><linearGradient id="c136"><stop offset="0" stop-color="#007fff"/><stop offset="0.2525" stop-color="#0058ff"/><stop offset="0.3082" stop-color="#434cff"/><stop offset="0.3541" stop-color="#8241ff"/><stop offset="0.4311" stop-color="#ff2afe"/><stop offset="0.4607" stop-color="#ff1bd0"/><stop offset="0.5066" stop-color="#ff099e"/><stop offset="0.5393" stop-color="#ff0085"/><stop offset="0.6131" stop-color="#ff005b"/><stop offset="0.6738" stop-color="#ff0044"/><stop offset="0.759" stop-color="#ff002d"/><stop offset="0.8803" stop-color="#ff0017"/><stop offset="1" stop-color="#ff0009"/></linearGradient><linearGradient id="c137"><stop offset="0" stop-color="#007bff"/><stop offset="0.2508" stop-color="#0054ff"/><stop offset="0.3393" stop-color="#6e40ff"/><stop offset="0.3885" stop-color="#b733ff"/><stop offset="0.4311" stop-color="#ff26ff"/><stop offset="0.459" stop-color="#ff17d3"/><stop offset="0.5033" stop-color="#ff07a2"/><stop offset="0.5426" stop-color="#ff0083"/><stop offset="0.618" stop-color="#ff005a"/><stop offset="0.7" stop-color="#ff003d"/><stop offset="0.777" stop-color="#ff002a"/><stop offset="1" stop-color="#ff000a"/></linearGradient><linearGradient id="c138"><stop offset="0" stop-color="#0078ff"/><stop offset="0.2492" stop-color="#0050ff"/><stop offset="0.3393" stop-color="#6f3bff"/><stop offset="0.3902" stop-color="#ba2dff"/><stop offset="0.4311" stop-color="#ff21ff"/><stop offset="0.459" stop-color="#ff13d4"/><stop offset="0.5115" stop-color="#ff029c"/><stop offset="0.5426" stop-color="#ff0084"/><stop offset="0.618" stop-color="#ff005b"/><stop offset="0.677" stop-color="#ff0045"/><stop offset="0.7672" stop-color="#ff002d"/><stop offset="1" stop-color="#ff000a"/></linearGradient><linearGradient id="c139"><stop offset="0" stop-color="#0074ff"/><stop offset="0.2459" stop-color="#004cff"/><stop offset="0.3311" stop-color="#6539ff"/><stop offset="0.377" stop-color="#a62dff"/><stop offset="0.4328" stop-color="#ff1bfd"/><stop offset="0.4574" stop-color="#ff10d7"/><stop offset="0.5115" stop-color="#ff009d"/><stop offset="0.577" stop-color="#ff0070"/><stop offset="0.623" stop-color="#ff005a"/><stop offset="0.7672" stop-color="#ff002e"/><stop offset="0.8902" stop-color="#ff0018"/><stop offset="1" stop-color="#ff000b"/></linearGradient><linearGradient id="c140"><stop offset="0" stop-color="#0071ff"/><stop offset="0.2443" stop-color="#0049ff"/><stop offset="0.2787" stop-color="#2541ff"/><stop offset="0.3459" stop-color="#7a31ff"/><stop offset="0.4328" stop-color="#ff17fd"/><stop offset="0.4557" stop-color="#ff0dda"/><stop offset="0.4803" stop-color="#ff04bc"/><stop offset="0.5115" stop-color="#ff009e"/><stop offset="0.5754" stop-color="#ff0072"/><stop offset="0.623" stop-color="#ff005b"/><stop offset="0.7033" stop-color="#ff003f"/><stop offset="0.7803" stop-color="#ff002c"/><stop offset="1" stop-color="#ff000c"/></linearGradient><linearGradient id="c141"><stop offset="0" stop-color="#006dff"/><stop offset="0.2426" stop-color="#0045ff"/><stop offset="0.2918" stop-color="#363aff"/><stop offset="0.3377" stop-color="#702fff"/><stop offset="0.377" stop-color="#a724ff"/><stop offset="0.4328" stop-color="#ff12fe"/><stop offset="0.4705" stop-color="#ff04c8"/><stop offset="0.5115" stop-color="#ff009f"/><stop offset="0.5738" stop-color="#ff0074"/><stop offset="0.623" stop-color="#ff005c"/><stop offset="0.7705" stop-color="#ff002f"/><stop offset="1" stop-color="#ff000c"/></linearGradient><linearGradient id="c142"><stop offset="0" stop-color="#006aff"/><stop offset="0.241" stop-color="#0041ff"/><stop offset="0.282" stop-color="#2c38ff"/><stop offset="0.3393" stop-color="#732aff"/><stop offset="0.3869" stop-color="#b61cff"/><stop offset="0.4328" stop-color="#ff0efe"/><stop offset="0.4738" stop-color="#ff00c5"/><stop offset="0.5115" stop-color="#ff00a0"/><stop offset="0.5738" stop-color="#ff0075"/><stop offset="0.6279" stop-color="#ff005b"/><stop offset="0.7656" stop-color="#ff0031"/><stop offset="1" stop-color="#ff000d"/></linearGradient><linearGradient id="c143"><stop offset="0" stop-color="#0066ff"/><stop offset="0.2393" stop-color="#003eff"/><stop offset="0.2918" stop-color="#3932ff"/><stop offset="0.3393" stop-color="#7426ff"/><stop offset="0.3934" stop-color="#c016ff"/><stop offset="0.4328" stop-color="#ff09ff"/><stop offset="0.4738" stop-color="#ff00c6"/><stop offset="0.5115" stop-color="#ff00a1"/><stop offset="0.5721" stop-color="#ff0077"/><stop offset="0.6279" stop-color="#ff005c"/><stop offset="0.7098" stop-color="#ff0040"/><stop offset="0.7787" stop-color="#ff002f"/><stop offset="1" stop-color="#ff000e"/></linearGradient><linearGradient id="c144"><stop offset="0" stop-color="#0063ff"/><stop offset="0.2377" stop-color="#003aff"/><stop offset="0.2836" stop-color="#3130ff"/><stop offset="0.341" stop-color="#7721ff"/><stop offset="0.3885" stop-color="#b914ff"/><stop offset="0.4328" stop-color="#ff05ff"/><stop offset="0.4754" stop-color="#ff00c5"/><stop offset="0.5115" stop-color="#ff00a2"/><stop offset="0.5721" stop-color="#ff0078"/><stop offset="0.6279" stop-color="#ff005d"/><stop offset="0.7738" stop-color="#ff0031"/><stop offset="1" stop-color="#ff000e"/></linearGradient><linearGradient id="c145"><stop offset="0" stop-color="#0060ff"/><stop offset="0.2361" stop-color="#0037ff"/><stop offset="0.2902" stop-color="#3a2bff"/><stop offset="0.3426" stop-color="#7a1dff"/><stop offset="0.4344" stop-color="#ff00fd"/><stop offset="0.477" stop-color="#ff00c4"/><stop offset="0.5066" stop-color="#ff00a7"/><stop offset="0.5721" stop-color="#ff0079"/><stop offset="0.6279" stop-color="#ff005e"/><stop offset="0.7164" stop-color="#ff0040"/><stop offset="0.7869" stop-color="#ff002f"/><stop offset="1" stop-color="#ff000f"/></linearGradient><linearGradient id="c146"><stop offset="0" stop-color="#005dff"/><stop offset="0.2344" stop-color="#0034ff"/><stop offset="0.2951" stop-color="#4126ff"/><stop offset="0.3443" stop-color="#7d19ff"/><stop offset="0.4344" stop-color="#ff00fe"/><stop offset="0.4672" stop-color="#ff00d0"/><stop offset="0.5066" stop-color="#ff00a8"/><stop offset="0.5721" stop-color="#ff007a"/><stop offset="0.6279" stop-color="#ff005f"/><stop offset="0.777" stop-color="#ff0032"/><stop offset="1" stop-color="#ff0010"/></linearGradient><linearGradient id="c147"><stop offset="0" stop-color="#0059ff"/><stop offset="0.2328" stop-color="#0030ff"/><stop offset="0.2869" stop-color="#3924ff"/><stop offset="0.3475" stop-color="#8214ff"/><stop offset="0.4115" stop-color="#dc00ff"/><stop offset="0.4344" stop-color="#ff00fe"/><stop offset="0.4705" stop-color="#ff00cd"/><stop offset="0.5148" stop-color="#ff00a2"/><stop offset="0.5721" stop-color="#ff007b"/><stop offset="0.623" stop-color="#ff0062"/><stop offset="0.6984" stop-color="#ff0047"/><stop offset="0.7902" stop-color="#ff0030"/><stop offset="1" stop-color="#ff0011"/></linearGradient><linearGradient id="c148"><stop offset="0" stop-color="#0056ff"/><stop offset="0.2311" stop-color="#002dff"/><stop offset="0.2902" stop-color="#3e1fff"/><stop offset="0.3508" stop-color="#870fff"/><stop offset="0.4" stop-color="#cb00ff"/><stop offset="0.4344" stop-color="#ff00ff"/><stop offset="0.4738" stop-color="#ff00ca"/><stop offset="0.5098" stop-color="#ff00a7"/><stop offset="0.5721" stop-color="#ff007c"/><stop offset="0.623" stop-color="#ff0063"/><stop offset="0.6852" stop-color="#ff004c"/><stop offset="0.7754" stop-color="#ff0034"/><stop offset="1" stop-color="#ff0011"/></linearGradient><linearGradient id="c149"><stop offset="0" stop-color="#0053ff"/><stop offset="0.2295" stop-color="#002aff"/><stop offset="0.2934" stop-color="#431bff"/><stop offset="0.3541" stop-color="#8c0aff"/><stop offset="0.3885" stop-color="#bb00ff"/><stop offset="0.4344" stop-color="#ff00ff"/><stop offset="0.4754" stop-color="#ff00c9"/><stop offset="0.5098" stop-color="#ff00a8"/><stop offset="0.5738" stop-color="#ff007c"/><stop offset="0.623" stop-color="#ff0064"/><stop offset="0.7115" stop-color="#ff0045"/><stop offset="0.7885" stop-color="#ff0032"/><stop offset="1" stop-color="#ff0012"/></linearGradient><linearGradient id="c150"><stop offset="0" stop-color="#0050ff"/><stop offset="0.2262" stop-color="#0027ff"/><stop offset="0.3082" stop-color="#5514ff"/><stop offset="0.3754" stop-color="#a900ff"/><stop offset="0.4361" stop-color="#ff00fd"/><stop offset="0.4672" stop-color="#ff00d3"/><stop offset="0.5049" stop-color="#ff00ad"/><stop offset="0.5443" stop-color="#ff008f"/><stop offset="0.618" stop-color="#ff0067"/><stop offset="0.6787" stop-color="#ff0050"/><stop offset="0.7787" stop-color="#ff0035"/><stop offset="1" stop-color="#ff0013"/></linearGradient><linearGradient id="c151"><stop offset="0" stop-color="#004dff"/><stop offset="0.2246" stop-color="#0024ff"/><stop offset="0.2754" stop-color="#3218ff"/><stop offset="0.3279" stop-color="#6d0bff"/><stop offset="0.3639" stop-color="#9a00ff"/><stop offset="0.4361" stop-color="#ff00fe"/><stop offset="0.4705" stop-color="#ff00d0"/><stop offset="0.5131" stop-color="#ff00a7"/><stop offset="0.5754" stop-color="#ff007d"/><stop offset="0.618" stop-color="#ff0068"/><stop offset="0.6754" stop-color="#ff0052"/><stop offset="0.7869" stop-color="#ff0034"/><stop offset="1" stop-color="#ff0013"/></linearGradient><linearGradient id="c152"><stop offset="0" stop-color="#004aff"/><stop offset="0.223" stop-color="#0021ff"/><stop offset="0.3262" stop-color="#6c08ff"/><stop offset="0.3525" stop-color="#8c00ff"/><stop offset="0.4361" stop-color="#ff00fe"/><stop offset="0.4721" stop-color="#ff00cf"/><stop offset="0.518" stop-color="#ff00a4"/><stop offset="0.5754" stop-color="#ff007e"/><stop offset="0.6295" stop-color="#ff0064"/><stop offset="0.777" stop-color="#ff0037"/><stop offset="1" stop-color="#ff0014"/></linearGradient><linearGradient id="c153"><stop offset="0" stop-color="#0047ff"/><stop offset="0.2213" stop-color="#001fff"/><stop offset="0.3246" stop-color="#6b05ff"/><stop offset="0.3787" stop-color="#ae00ff"/><stop offset="0.4361" stop-color="#ff00ff"/><stop offset="0.4738" stop-color="#ff00ce"/><stop offset="0.523" stop-color="#ff00a1"/><stop offset="0.577" stop-color="#ff007e"/><stop offset="0.6246" stop-color="#ff0067"/><stop offset="0.6869" stop-color="#ff0050"/><stop offset="0.7852" stop-color="#ff0036"/><stop offset="1" stop-color="#ff0015"/></linearGradient><linearGradient id="c154"><stop offset="0" stop-color="#0044ff"/><stop offset="0.2197" stop-color="#001cff"/><stop offset="0.323" stop-color="#6a02ff"/><stop offset="0.3852" stop-color="#b700ff"/><stop offset="0.4361" stop-color="#ff00ff"/><stop offset="0.4689" stop-color="#ff00d4"/><stop offset="0.5164" stop-color="#ff00a7"/><stop offset="0.5787" stop-color="#ff007e"/><stop offset="0.6246" stop-color="#ff0068"/><stop offset="0.6803" stop-color="#ff0053"/><stop offset="0.7754" stop-color="#ff0039"/><stop offset="1" stop-color="#ff0015"/></linearGradient><linearGradient id="c155"><stop offset="0" stop-color="#0041ff"/><stop offset="0.218" stop-color="#0019ff"/><stop offset="0.3164" stop-color="#6400ff"/><stop offset="0.3393" stop-color="#7e00ff"/><stop offset="0.4377" stop-color="#ff00fd"/><stop offset="0.477" stop-color="#ff00cc"/><stop offset="0.5213" stop-color="#ff00a4"/><stop offset="0.5787" stop-color="#ff007f"/><stop offset="0.6197" stop-color="#ff006b"/><stop offset="0.677" stop-color="#ff0055"/><stop offset="0.7836" stop-color="#ff0038"/><stop offset="1" stop-color="#ff0016"/></linearGradient><linearGradient id="c156"><stop offset="0" stop-color="#003fff"/><stop offset="0.2164" stop-color="#0016ff"/><stop offset="0.3049" stop-color="#5800ff"/><stop offset="0.3344" stop-color="#7900ff"/><stop offset="0.4377" stop-color="#ff00fe"/><stop offset="0.4738" stop-color="#ff00d0"/><stop offset="0.5148" stop-color="#ff00aa"/><stop offset="0.5803" stop-color="#ff007f"/><stop offset="0.6262" stop-color="#ff0069"/><stop offset="0.7049" stop-color="#ff004d"/><stop offset="0.7918" stop-color="#ff0037"/><stop offset="1" stop-color="#ff0017"/></linearGradient><linearGradient id="c157"><stop offset="0" stop-color="#003cff"/><stop offset="0.2148" stop-color="#0014ff"/><stop offset="0.2934" stop-color="#4d00ff"/><stop offset="0.3311" stop-color="#7600ff"/><stop offset="0.3902" stop-color="#be00ff"/><stop offset="0.4377" stop-color="#ff00fe"/><stop offset="0.4754" stop-color="#ff00cf"/><stop offset="0.5197" stop-color="#ff00a7"/><stop offset="0.5607" stop-color="#ff008b"/><stop offset="0.6213" stop-color="#ff006c"/><stop offset="0.6852" stop-color="#ff0054"/><stop offset="0.782" stop-color="#ff003a"/><stop offset="1" stop-color="#ff0017"/></linearGradient><linearGradient id="c158"><stop offset="0" stop-color="#0039ff"/><stop offset="0.2131" stop-color="#0011ff"/><stop offset="0.282" stop-color="#4200ff"/><stop offset="0.3295" stop-color="#7500ff"/><stop offset="0.3869" stop-color="#ba00ff"/><stop offset="0.4377" stop-color="#ff00fe"/><stop offset="0.4705" stop-color="#ff00d5"/><stop offset="0.5131" stop-color="#ff00ad"/><stop offset="0.5672" stop-color="#ff0088"/><stop offset="0.6213" stop-color="#ff006d"/><stop offset="0.6787" stop-color="#ff0057"/><stop offset="0.7852" stop-color="#ff003a"/><stop offset="1" stop-color="#ff0018"/></linearGradient><linearGradient id="c159"><stop offset="0" stop-color="#0036ff"/><stop offset="0.2115" stop-color="#000eff"/><stop offset="0.2705" stop-color="#3800ff"/><stop offset="0.3377" stop-color="#7f00ff"/><stop offset="0.382" stop-color="#b400ff"/><stop offset="0.4377" stop-color="#ff00ff"/><stop offset="0.4787" stop-color="#ff00cd"/><stop offset="0.518" stop-color="#ff00aa"/><stop offset="0.5705" stop-color="#ff0087"/><stop offset="0.6279" stop-color="#ff006b"/><stop offset="0.7279" stop-color="#ff0049"/><stop offset="0.7934" stop-color="#ff0039"/><stop offset="1" stop-color="#ff0019"/></linearGradient><linearGradient id="c160"><stop offset="0" stop-color="#0034ff"/><stop offset="0.2098" stop-color="#000cff"/><stop offset="0.259" stop-color="#2e00ff"/><stop offset="0.3344" stop-color="#7c00ff"/><stop offset="0.3967" stop-color="#c700ff"/><stop offset="0.4377" stop-color="#ff00ff"/><stop offset="0.4754" stop-color="#ff00d1"/><stop offset="0.5164" stop-color="#ff00ac"/><stop offset="0.5721" stop-color="#ff0087"/><stop offset="0.623" stop-color="#ff006e"/><stop offset="0.6869" stop-color="#ff0056"/><stop offset="0.7836" stop-color="#ff003c"/><stop offset="1" stop-color="#ff0019"/></linearGradient><linearGradient id="c161"><stop offset="0" stop-color="#0031ff"/><stop offset="0.2066" stop-color="#000aff"/><stop offset="0.2459" stop-color="#2300ff"/><stop offset="0.3164" stop-color="#6900ff"/><stop offset="0.3672" stop-color="#a300ff"/><stop offset="0.4393" stop-color="#ff00fd"/><stop offset="0.477" stop-color="#ff00d0"/><stop offset="0.5213" stop-color="#ff00a9"/><stop offset="0.5754" stop-color="#ff0086"/><stop offset="0.6393" stop-color="#ff0068"/><stop offset="0.7869" stop-color="#ff003c"/><stop offset="1" stop-color="#ff001a"/></linearGradient><linearGradient id="c162"><stop offset="0" stop-color="#002eff"/><stop offset="0.2049" stop-color="#0007ff"/><stop offset="0.2344" stop-color="#1900ff"/><stop offset="0.3295" stop-color="#7800ff"/><stop offset="0.3934" stop-color="#c300ff"/><stop offset="0.4393" stop-color="#ff00fe"/><stop offset="0.4787" stop-color="#ff00cf"/><stop offset="0.5197" stop-color="#ff00ab"/><stop offset="0.577" stop-color="#ff0086"/><stop offset="0.6393" stop-color="#ff0069"/><stop offset="0.7049" stop-color="#ff0052"/><stop offset="0.7951" stop-color="#ff003b"/><stop offset="1" stop-color="#ff001a"/></linearGradient><linearGradient id="c163"><stop offset="0" stop-color="#002cff"/><stop offset="0.2033" stop-color="#0005ff"/><stop offset="0.223" stop-color="#1100ff"/><stop offset="0.3279" stop-color="#7700ff"/><stop offset="0.382" stop-color="#b500ff"/><stop offset="0.4393" stop-color="#ff00fe"/><stop offset="0.4803" stop-color="#ff00ce"/><stop offset="0.5262" stop-color="#ff00a7"/><stop offset="0.5803" stop-color="#ff0085"/><stop offset="0.641" stop-color="#ff0069"/><stop offset="0.7984" stop-color="#ff003b"/><stop offset="1" stop-color="#ff001b"/></linearGradient><linearGradient id="c164"><stop offset="0" stop-color="#0029ff"/><stop offset="0.2016" stop-color="#0002ff"/><stop offset="0.2607" stop-color="#3400ff"/><stop offset="0.3328" stop-color="#7d00ff"/><stop offset="0.4393" stop-color="#ff00ff"/><stop offset="0.477" stop-color="#ff00d2"/><stop offset="0.5328" stop-color="#ff00a3"/><stop offset="0.582" stop-color="#ff0085"/><stop offset="0.6508" stop-color="#ff0066"/><stop offset="0.8066" stop-color="#ff003a"/><stop offset="1" stop-color="#ff001c"/></linearGradient><linearGradient id="c165"><stop offset="0" stop-color="#0027ff"/><stop offset="0.2" stop-color="#0000ff"/><stop offset="0.318" stop-color="#6e00ff"/><stop offset="0.3705" stop-color="#a800ff"/><stop offset="0.4393" stop-color="#ff00ff"/><stop offset="0.4787" stop-color="#ff00d1"/><stop offset="0.523" stop-color="#ff00ab"/><stop offset="0.5689" stop-color="#ff008d"/><stop offset="0.6377" stop-color="#ff006c"/><stop offset="0.7918" stop-color="#ff003e"/><stop offset="1" stop-color="#ff001c"/></linearGradient><linearGradient id="c166"><stop offset="0" stop-color="#0024ff"/><stop offset="0.1984" stop-color="#0000ff"/><stop offset="0.2689" stop-color="#3e00ff"/><stop offset="0.323" stop-color="#7400ff"/><stop offset="0.377" stop-color="#b000ff"/><stop offset="0.441" stop-color="#ff00fd"/><stop offset="0.4803" stop-color="#ff00d0"/><stop offset="0.5295" stop-color="#ff00a7"/><stop offset="0.5852" stop-color="#ff0085"/><stop offset="0.6475" stop-color="#ff0069"/><stop offset="0.7951" stop-color="#ff003e"/><stop offset="1" stop-color="#ff001d"/></linearGradient><linearGradient id="c167"><stop offset="0" stop-color="#0022ff"/><stop offset="0.1754" stop-color="#0000ff"/><stop offset="0.1967" stop-color="#0000ff"/><stop offset="0.2623" stop-color="#3900ff"/><stop offset="0.3213" stop-color="#7300ff"/><stop offset="0.382" stop-color="#b600ff"/><stop offset="0.441" stop-color="#ff00fe"/><stop offset="0.477" stop-color="#ff00d4"/><stop offset="0.5262" stop-color="#ff00aa"/><stop offset="0.5754" stop-color="#ff008b"/><stop offset="0.6443" stop-color="#ff006b"/><stop offset="0.7984" stop-color="#ff003e"/><stop offset="1" stop-color="#ff001e"/></linearGradient><linearGradient id="c168"><stop offset="0" stop-color="#001fff"/><stop offset="0.1639" stop-color="#0000ff"/><stop offset="0.1951" stop-color="#0000ff"/><stop offset="0.3148" stop-color="#6d00ff"/><stop offset="0.3705" stop-color="#a900ff"/><stop offset="0.441" stop-color="#ff00fe"/><stop offset="0.4869" stop-color="#ff00cb"/><stop offset="0.5344" stop-color="#ff00a5"/><stop offset="0.5902" stop-color="#ff0084"/><stop offset="0.6492" stop-color="#ff006a"/><stop offset="0.8016" stop-color="#ff003e"/><stop offset="1" stop-color="#ff001e"/></linearGradient><linearGradient id="c169"><stop offset="0" stop-color="#001dff"/><stop offset="0.1525" stop-color="#0000ff"/><stop offset="0.1934" stop-color="#0000ff"/><stop offset="0.277" stop-color="#4900ff"/><stop offset="0.3295" stop-color="#7d00ff"/><stop offset="0.3902" stop-color="#c000ff"/><stop offset="0.441" stop-color="#ff00ff"/><stop offset="0.4803" stop-color="#ff00d2"/><stop offset="0.5311" stop-color="#ff00a8"/><stop offset="0.5803" stop-color="#ff008a"/><stop offset="0.6459" stop-color="#ff006c"/><stop offset="0.7311" stop-color="#ff0050"/><stop offset="0.8098" stop-color="#ff003d"/><stop offset="1" stop-color="#ff001f"/></linearGradient><linearGradient id="c170"><stop offset="0" stop-color="#001bff"/><stop offset="0.141" stop-color="#0000ff"/><stop offset="0.1918" stop-color="#0000ff"/><stop offset="0.2541" stop-color="#3500ff"/><stop offset="0.3328" stop-color="#8100ff"/><stop offset="0.3934" stop-color="#c400ff"/><stop offset="0.441" stop-color="#ff00ff"/><stop offset="0.482" stop-color="#ff00d1"/><stop offset="0.5295" stop-color="#ff00aa"/><stop offset="0.5836" stop-color="#ff0089"/><stop offset="0.6557" stop-color="#ff0069"/><stop offset="0.818" stop-color="#ff003c"/><stop offset="1" stop-color="#ff0020"/></linearGradient><linearGradient id="c171"><stop offset="0" stop-color="#0018ff"/><stop offset="0.1279" stop-color="#0000ff"/><stop offset="0.1902" stop-color="#0000ff"/><stop offset="0.3164" stop-color="#7100ff"/><stop offset="0.3803" stop-color="#b500ff"/><stop offset="0.441" stop-color="#ff00ff"/><stop offset="0.4836" stop-color="#ff00d0"/><stop offset="0.5262" stop-color="#ff00ad"/><stop offset="0.5852" stop-color="#ff0089"/><stop offset="0.6475" stop-color="#ff006d"/><stop offset="0.7934" stop-color="#ff0042"/><stop offset="1" stop-color="#ff0020"/></linearGradient><linearGradient id="c172"><stop offset="0" stop-color="#0016ff"/><stop offset="0.1164" stop-color="#0000ff"/><stop offset="0.1869" stop-color="#0000ff"/><stop offset="0.2459" stop-color="#3000ff"/><stop offset="0.3197" stop-color="#7500ff"/><stop offset="0.3836" stop-color="#b900ff"/><stop offset="0.4426" stop-color="#ff00fe"/><stop offset="0.477" stop-color="#ff00d7"/><stop offset="0.5344" stop-color="#ff00a8"/><stop offset="0.5885" stop-color="#ff0088"/><stop offset="0.6443" stop-color="#ff006f"/><stop offset="0.7967" stop-color="#ff0042"/><stop offset="1" stop-color="#ff0021"/></linearGradient><linearGradient id="c173"><stop offset="0" stop-color="#0014ff"/><stop offset="0.1049" stop-color="#0000ff"/><stop offset="0.1852" stop-color="#0000ff"/><stop offset="0.3098" stop-color="#6c00ff"/><stop offset="0.3754" stop-color="#b000ff"/><stop offset="0.4426" stop-color="#ff00fe"/><stop offset="0.4787" stop-color="#ff00d6"/><stop offset="0.5311" stop-color="#ff00ab"/><stop offset="0.5902" stop-color="#ff0088"/><stop offset="0.6541" stop-color="#ff006c"/><stop offset="0.8" stop-color="#ff0042"/><stop offset="1" stop-color="#ff0021"/></linearGradient><linearGradient id="c174"><stop offset="0" stop-color="#0011ff"/><stop offset="0.0934" stop-color="#0000ff"/><stop offset="0.1836" stop-color="#0000ff"/><stop offset="0.2525" stop-color="#3800ff"/><stop offset="0.3213" stop-color="#7800ff"/><stop offset="0.3869" stop-color="#bd00ff"/><stop offset="0.4426" stop-color="#ff00fe"/><stop offset="0.4803" stop-color="#ff00d5"/><stop offset="0.5279" stop-color="#ff00ae"/><stop offset="0.582" stop-color="#ff008d"/><stop offset="0.6508" stop-color="#ff006e"/><stop offset="0.8033" stop-color="#ff0042"/><stop offset="1" stop-color="#ff0022"/></linearGradient><linearGradient id="c175"><stop offset="0" stop-color="#000fff"/><stop offset="0.082" stop-color="#0000ff"/><stop offset="0.182" stop-color="#0000ff"/><stop offset="0.2525" stop-color="#3900ff"/><stop offset="0.3197" stop-color="#7700ff"/><stop offset="0.3885" stop-color="#bf00ff"/><stop offset="0.4426" stop-color="#ff00ff"/><stop offset="0.482" stop-color="#ff00d4"/><stop offset="0.5246" stop-color="#ff00b1"/><stop offset="0.5852" stop-color="#ff008c"/><stop offset="0.6475" stop-color="#ff0070"/><stop offset="0.8066" stop-color="#ff0042"/><stop offset="1" stop-color="#ff0023"/></linearGradient><linearGradient id="c176"><stop offset="0" stop-color="#000dff"/><stop offset="0.0705" stop-color="#0000ff"/><stop offset="0.1803" stop-color="#0000ff"/><stop offset="0.2443" stop-color="#3300ff"/><stop offset="0.3148" stop-color="#7300ff"/><stop offset="0.382" stop-color="#b800ff"/><stop offset="0.4426" stop-color="#ff00ff"/><stop offset="0.4836" stop-color="#ff00d3"/><stop offset="0.5328" stop-color="#ff00ac"/><stop offset="0.5754" stop-color="#ff0092"/><stop offset="0.6393" stop-color="#ff0074"/><stop offset="0.7213" stop-color="#ff0058"/><stop offset="0.8049" stop-color="#ff0043"/><stop offset="1" stop-color="#ff0023"/></linearGradient><linearGradient id="c177"><stop offset="0" stop-color="#000bff"/><stop offset="0.0574" stop-color="#0000ff"/><stop offset="0.1787" stop-color="#0000ff"/><stop offset="0.2557" stop-color="#3e00ff"/><stop offset="0.3213" stop-color="#7a00ff"/><stop offset="0.4443" stop-color="#ff00fe"/><stop offset="0.4738" stop-color="#ff00dd"/><stop offset="0.5279" stop-color="#ff00b0"/><stop offset="0.5902" stop-color="#ff008b"/><stop offset="0.6541" stop-color="#ff006f"/><stop offset="0.8082" stop-color="#ff0043"/><stop offset="1" stop-color="#ff0024"/></linearGradient><linearGradient id="c178"><stop offset="0" stop-color="#0009ff"/><stop offset="0.0492" stop-color="#0000ff"/><stop offset="0.177" stop-color="#0000ff"/><stop offset="0.2492" stop-color="#3900ff"/><stop offset="0.3115" stop-color="#7100ff"/><stop offset="0.3836" stop-color="#ba00ff"/><stop offset="0.4443" stop-color="#ff00fe"/><stop offset="0.4869" stop-color="#ff00d1"/><stop offset="0.5344" stop-color="#ff00ac"/><stop offset="0.5852" stop-color="#ff008e"/><stop offset="0.6426" stop-color="#ff0074"/><stop offset="0.7967" stop-color="#ff0046"/><stop offset="1" stop-color="#ff0024"/></linearGradient><linearGradient id="c179"><stop offset="0" stop-color="#0009ff"/><stop offset="0.0492" stop-color="#0000ff"/><stop offset="0.177" stop-color="#0000ff"/><stop offset="0.2492" stop-color="#3900ff"/><stop offset="0.3115" stop-color="#7100ff"/><stop offset="0.3836" stop-color="#ba00ff"/><stop offset="0.4443" stop-color="#ff00fe"/><stop offset="0.4869" stop-color="#ff00d1"/><stop offset="0.5344" stop-color="#ff00ac"/><stop offset="0.5852" stop-color="#ff008e"/><stop offset="0.6426" stop-color="#ff0074"/><stop offset="0.7967" stop-color="#ff0046"/><stop offset="1" stop-color="#ff0024"/></linearGradient><filter id="vb" x="0" y="0" width="1" height="1" filterUnits="objectBoundingBox"><feGaussianBlur stdDeviation="0 1.3"/></filter><linearGradient id="i0"><stop offset="0" stop-color="#b0ff00"/><stop offset="0.7949" stop-color="#ffff00"/><stop offset="1.0021" stop-color="#ffeb00"/></linearGradient><linearGradient id="i1"><stop offset="0" stop-color="#b1ff00"/><stop offset="0.7822" stop-color="#ffff00"/><stop offset="1.0021" stop-color="#ffea00"/></linearGradient><linearGradient id="i2"><stop offset="0" stop-color="#b2ff00"/><stop offset="0.7696" stop-color="#ffff00"/><stop offset="1.0021" stop-color="#ffe800"/></linearGradient><linearGradient id="i3"><stop offset="0" stop-color="#b3ff00"/><stop offset="0.7569" stop-color="#ffff00"/><stop offset="1.0021" stop-color="#ffe700"/></linearGradient><linearGradient id="i4"><stop offset="0" stop-color="#b4ff00"/><stop offset="0.7442" stop-color="#ffff00"/><stop offset="1.0021" stop-color="#ffe600"/></linearGradient><linearGradient id="i5"><stop offset="0" stop-color="#b5ff00"/><stop offset="0.7357" stop-color="#ffff00"/><stop offset="1.0021" stop-color="#ffe500"/></linearGradient><linearGradient id="i6"><stop offset="0" stop-color="#b6ff01"/><stop offset="0.723" stop-color="#ffff00"/><stop offset="1.0021" stop-color="#ffe400"/></linearGradient><linearGradient id="i7"><stop offset="0" stop-color="#b7ff01"/><stop offset="0.7104" stop-color="#ffff00"/><stop offset="1.0021" stop-color="#ffe300"/></linearGradient><linearGradient id="i8"><stop offset="0" stop-color="#b8ff02"/><stop offset="0.6977" stop-color="#ffff00"/><stop offset="1.0021" stop-color="#ffe200"/></linearGradient><linearGradient id="i9"><stop offset="0" stop-color="#b9ff02"/><stop offset="0.685" stop-color="#ffff00"/><stop offset="1.0021" stop-color="#ffe000"/></linearGradient><linearGradient id="i10"><stop offset="0" stop-color="#baff03"/><stop offset="0.6723" stop-color="#ffff00"/><stop offset="1.0021" stop-color="#ffdf00"/></linearGradient><linearGradient id="i11"><stop offset="0" stop-color="#bbff03"/><stop offset="0.6596" stop-color="#ffff00"/><stop offset="1.0021" stop-color="#ffde00"/></linearGradient><linearGradient id="i12"><stop offset="0" stop-color="#bcff04"/><stop offset="0.6512" stop-color="#ffff00"/><stop offset="1.0021" stop-color="#ffdd00"/></linearGradient><linearGradient id="i13"><stop offset="0" stop-color="#bdff05"/><stop offset="0.1903" stop-color="#d0ff00"/><stop offset="0.6385" stop-color="#ffff00"/><stop offset="1.0021" stop-color="#ffdc00"/></linearGradient><linearGradient id="i14"><stop offset="0" stop-color="#bfff05"/><stop offset="0.2156" stop-color="#d4ff00"/><stop offset="0.6258" stop-color="#ffff00"/><stop offset="1.0021" stop-color="#ffdb00"/></linearGradient><linearGradient id="i15"><stop offset="0" stop-color="#c0ff06"/><stop offset="0.241" stop-color="#d8ff00"/><stop offset="0.6131" stop-color="#ffff00"/><stop offset="1.0021" stop-color="#ffda00"/></linearGradient><linearGradient id="i16"><stop offset="0" stop-color="#c1ff06"/><stop offset="0.2664" stop-color="#dbff00"/><stop offset="0.6004" stop-color="#ffff00"/><stop offset="1.0021" stop-color="#ffd900"/></linearGradient><linearGradient id="i17"><stop offset="0" stop-color="#c2ff07"/><stop offset="0.2918" stop-color="#dfff00"/><stop offset="0.5877" stop-color="#ffff00"/><stop offset="1.0021" stop-color="#ffd800"/></linearGradient><linearGradient id="i18"><stop offset="0" stop-color="#c3ff07"/><stop offset="0.3171" stop-color="#e3ff00"/><stop offset="0.5751" stop-color="#ffff00"/><stop offset="1.0021" stop-color="#ffd600"/></linearGradient><linearGradient id="i19"><stop offset="0" stop-color="#c4ff08"/><stop offset="0.3425" stop-color="#e7ff00"/><stop offset="0.5624" stop-color="#ffff00"/><stop offset="1.0021" stop-color="#ffd500"/></linearGradient><linearGradient id="i20"><stop offset="0" stop-color="#c5ff09"/><stop offset="0.3679" stop-color="#ebff00"/><stop offset="0.5539" stop-color="#ffff00"/><stop offset="1.0021" stop-color="#ffd400"/></linearGradient><linearGradient id="i21"><stop offset="0" stop-color="#c6ff09"/><stop offset="0.5412" stop-color="#ffff00"/><stop offset="1.0021" stop-color="#ffd300"/></linearGradient><linearGradient id="i22"><stop offset="0" stop-color="#c7ff0a"/><stop offset="0.5285" stop-color="#ffff00"/><stop offset="1.0021" stop-color="#ffd200"/></linearGradient><linearGradient id="i23"><stop offset="0" stop-color="#c8ff0a"/><stop offset="0.5159" stop-color="#ffff00"/><stop offset="1.0021" stop-color="#ffd100"/></linearGradient><linearGradient id="i24"><stop offset="0" stop-color="#c9ff0b"/><stop offset="0.5032" stop-color="#ffff00"/><stop offset="1.0021" stop-color="#ffd000"/></linearGradient><linearGradient id="i25"><stop offset="0" stop-color="#caff0c"/><stop offset="0.4905" stop-color="#ffff01"/><stop offset="1.0021" stop-color="#ffcf00"/></linearGradient><linearGradient id="i26"><stop offset="0" stop-color="#ccff0c"/><stop offset="0.4778" stop-color="#ffff01"/><stop offset="1.0021" stop-color="#ffce00"/></linearGradient><linearGradient id="i27"><stop offset="0" stop-color="#cdff0d"/><stop offset="0.4651" stop-color="#ffff02"/><stop offset="1.0021" stop-color="#ffcd00"/></linearGradient><linearGradient id="i28"><stop offset="0" stop-color="#ceff0d"/><stop offset="0.4567" stop-color="#ffff03"/><stop offset="1.0021" stop-color="#ffcc00"/></linearGradient><linearGradient id="i29"><stop offset="0" stop-color="#cfff0e"/><stop offset="0.444" stop-color="#ffff04"/><stop offset="1.0021" stop-color="#ffcb00"/></linearGradient><linearGradient id="i30"><stop offset="0" stop-color="#d0ff0f"/><stop offset="0.4313" stop-color="#ffff05"/><stop offset="0.6216" stop-color="#ffeb00"/><stop offset="1.0021" stop-color="#ffc900"/></linearGradient><linearGradient id="i31"><stop offset="0" stop-color="#d1ff0f"/><stop offset="0.4186" stop-color="#ffff06"/><stop offset="0.6469" stop-color="#ffe700"/><stop offset="1.0021" stop-color="#ffc800"/></linearGradient><linearGradient id="i32"><stop offset="0" stop-color="#d3ff10"/><stop offset="0.4059" stop-color="#ffff07"/><stop offset="0.6723" stop-color="#ffe400"/><stop offset="1.0021" stop-color="#ffc700"/></linearGradient><linearGradient id="i33"><stop offset="0" stop-color="#d4ff11"/><stop offset="0.3932" stop-color="#ffff08"/><stop offset="0.6977" stop-color="#ffe000"/><stop offset="1.0021" stop-color="#ffc600"/></linearGradient><linearGradient id="i34"><stop offset="0" stop-color="#d5ff11"/><stop offset="0.3805" stop-color="#ffff09"/><stop offset="0.723" stop-color="#ffdd00"/><stop offset="1.0021" stop-color="#ffc500"/></linearGradient><linearGradient id="i35"><stop offset="0" stop-color="#d6ff12"/><stop offset="0.3679" stop-color="#ffff0a"/><stop offset="0.7484" stop-color="#ffd900"/><stop offset="1.0021" stop-color="#ffc400"/></linearGradient><linearGradient id="i36"><stop offset="0" stop-color="#d7ff12"/><stop offset="0.3594" stop-color="#ffff0a"/><stop offset="0.7738" stop-color="#ffd600"/><stop offset="1.0021" stop-color="#ffc300"/></linearGradient><linearGradient id="i37"><stop offset="0" stop-color="#d8ff13"/><stop offset="0.3467" stop-color="#ffff0b"/><stop offset="0.6638" stop-color="#ffde03"/><stop offset="1.0021" stop-color="#ffc200"/></linearGradient><linearGradient id="i38"><stop offset="0" stop-color="#daff14"/><stop offset="0.334" stop-color="#ffff0c"/><stop offset="0.6723" stop-color="#ffdc04"/><stop offset="1.0021" stop-color="#ffc100"/></linearGradient><linearGradient id="i39"><stop offset="0" stop-color="#dbff14"/><stop offset="0.3214" stop-color="#ffff0d"/><stop offset="0.6596" stop-color="#ffdc05"/><stop offset="1.0021" stop-color="#ffc000"/></linearGradient><linearGradient id="i40"><stop offset="0" stop-color="#dcff15"/><stop offset="0.3087" stop-color="#ffff0e"/><stop offset="0.6469" stop-color="#ffdc05"/><stop offset="1.0021" stop-color="#ffbf00"/></linearGradient><linearGradient id="i41"><stop offset="0" stop-color="#ddff16"/><stop offset="0.296" stop-color="#ffff0f"/><stop offset="0.6554" stop-color="#ffda06"/><stop offset="1.0021" stop-color="#ffbe00"/></linearGradient><linearGradient id="i42"><stop offset="0" stop-color="#dfff16"/><stop offset="0.2833" stop-color="#ffff10"/><stop offset="0.6427" stop-color="#ffda07"/><stop offset="1.0021" stop-color="#ffbd00"/></linearGradient><linearGradient id="i43"><stop offset="0" stop-color="#e0ff17"/><stop offset="0.2706" stop-color="#ffff11"/><stop offset="0.6512" stop-color="#ffd807"/><stop offset="1.0021" stop-color="#ffbc00"/></linearGradient><linearGradient id="i44"><stop offset="0" stop-color="#e1ff18"/><stop offset="0.2622" stop-color="#ffff12"/><stop offset="0.6385" stop-color="#ffd808"/><stop offset="1.0021" stop-color="#ffbb00"/></linearGradient><linearGradient id="i45"><stop offset="0" stop-color="#e2ff19"/><stop offset="0.2495" stop-color="#ffff13"/><stop offset="0.5708" stop-color="#ffdd0a"/><stop offset="1.0021" stop-color="#ffba00"/></linearGradient><linearGradient id="i46"><stop offset="0" stop-color="#e4ff19"/><stop offset="0.2368" stop-color="#ffff14"/><stop offset="0.6342" stop-color="#ffd609"/><stop offset="1.0021" stop-color="#ffb901"/></linearGradient><linearGradient id="i47"><stop offset="0" stop-color="#e5ff1a"/><stop offset="0.2241" stop-color="#ffff15"/><stop offset="0.5666" stop-color="#ffdb0b"/><stop offset="1.0021" stop-color="#ffb801"/></linearGradient><linearGradient id="i48"><stop offset="0" stop-color="#e6ff1b"/><stop offset="0.2114" stop-color="#ffff16"/><stop offset="0.5751" stop-color="#ffd90b"/><stop offset="1.0021" stop-color="#ffb702"/></linearGradient><linearGradient id="i49"><stop offset="0" stop-color="#e8ff1b"/><stop offset="0.1987" stop-color="#ffff17"/><stop offset="0.6173" stop-color="#ffd40b"/><stop offset="1.0021" stop-color="#ffb602"/></linearGradient><clipPath id="ic"><rect x="1605.5" y="143.5" width="236.5" height="199"/></clipPath></defs><rect x="82.5" y="255" width="361.5" height="343" fill="#262626" stroke="#9a9a9a" stroke-width="1.5"/><path d="M129.4 255V598M177.9 255V598M226.3 255V598M274.8 255V598M323.2 255V598M371.6 255V598M420.1 255V598" stroke="#a6a6a6" stroke-width="1.4" fill="none"/><path d="M82.5 598v5.5M129.4 598v5.5M177.9 598v5.5M226.3 598v5.5M274.8 598v5.5M323.2 598v5.5M371.6 598v5.5M420.1 598v5.5" stroke="#b0b0b0" stroke-width="1.4" fill="none"/><rect x="83.3" y="256.5" width="55.1" height="6.4" fill="#ffff00" stroke="#000" stroke-width="1.2"/><rect x="83.9" y="257.1" width="53.9" height="5.2" fill="url(#bs)"/><rect x="83.9" y="257.1" width="53.9" height="5.2" fill="url(#bv)"/><rect x="83.3" y="267.9" width="29.2" height="6.4" fill="#ff00ff" stroke="#000" stroke-width="1.2"/><rect x="83.9" y="268.5" width="28.0" height="5.2" fill="url(#bs)"/><rect x="83.9" y="268.5" width="28.0" height="5.2" fill="url(#bv)"/><rect x="83.3" y="279.4" width="46.6" height="6.4" fill="#00ffff" stroke="#000" stroke-width="1.2"/><rect x="83.9" y="280.0" width="45.4" height="5.2" fill="url(#bs)"/><rect x="83.9" y="280.0" width="45.4" height="5.2" fill="url(#bv)"/><rect x="83.3" y="290.8" width="111.8" height="6.4" fill="#0000ff" stroke="#000" stroke-width="1.2"/><rect x="83.9" y="291.4" width="110.6" height="5.2" fill="url(#bs)"/><rect x="83.9" y="291.4" width="110.6" height="5.2" fill="url(#bv)"/><rect x="83.3" y="302.3" width="44.0" height="6.4" fill="#00ff00" stroke="#000" stroke-width="1.2"/><rect x="83.9" y="302.9" width="42.8" height="5.2" fill="url(#bs)"/><rect x="83.9" y="302.9" width="42.8" height="5.2" fill="url(#bv)"/><rect x="83.3" y="313.7" width="52.7" height="6.4" fill="#ff0000" stroke="#000" stroke-width="1.2"/><rect x="83.9" y="314.3" width="51.5" height="5.2" fill="url(#bs)"/><rect x="83.9" y="314.3" width="51.5" height="5.2" fill="url(#bv)"/><rect x="83.3" y="325.1" width="40.8" height="6.4" fill="#0a8fae" stroke="#000" stroke-width="1.2"/><rect x="83.9" y="325.7" width="39.6" height="5.2" fill="url(#bs)"/><rect x="83.9" y="325.7" width="39.6" height="5.2" fill="url(#bv)"/><rect x="83.3" y="336.6" width="28.2" height="6.4" fill="#bd5698" stroke="#000" stroke-width="1.2"/><rect x="83.9" y="337.2" width="27.0" height="5.2" fill="url(#bs)"/><rect x="83.9" y="337.2" width="27.0" height="5.2" fill="url(#bv)"/><rect x="83.3" y="348.0" width="61.2" height="6.4" fill="#f0c828" stroke="#000" stroke-width="1.2"/><rect x="83.9" y="348.6" width="60.0" height="5.2" fill="url(#bs)"/><rect x="83.9" y="348.6" width="60.0" height="5.2" fill="url(#bv)"/><rect x="83.3" y="359.5" width="35.2" height="6.4" fill="#b53238" stroke="#000" stroke-width="1.2"/><rect x="83.9" y="360.1" width="34.0" height="5.2" fill="url(#bs)"/><rect x="83.9" y="360.1" width="34.0" height="5.2" fill="url(#bv)"/><rect x="83.3" y="370.9" width="44.0" height="6.4" fill="#469a48" stroke="#000" stroke-width="1.2"/><rect x="83.9" y="371.5" width="42.8" height="5.2" fill="url(#bs)"/><rect x="83.9" y="371.5" width="42.8" height="5.2" fill="url(#bv)"/><rect x="83.3" y="382.3" width="70.4" height="6.4" fill="#353aa0" stroke="#000" stroke-width="1.2"/><rect x="83.9" y="382.9" width="69.2" height="5.2" fill="url(#bs)"/><rect x="83.9" y="382.9" width="69.2" height="5.2" fill="url(#bv)"/><rect x="83.3" y="393.8" width="68.9" height="6.4" fill="#f0a830" stroke="#000" stroke-width="1.2"/><rect x="83.9" y="394.4" width="67.7" height="5.2" fill="url(#bs)"/><rect x="83.9" y="394.4" width="67.7" height="5.2" fill="url(#bv)"/><rect x="83.3" y="405.2" width="48.1" height="6.4" fill="#a4c740" stroke="#000" stroke-width="1.2"/><rect x="83.9" y="405.8" width="46.9" height="5.2" fill="url(#bs)"/><rect x="83.9" y="405.8" width="46.9" height="5.2" fill="url(#bv)"/><rect x="83.3" y="416.7" width="36.7" height="6.4" fill="#5e3a76" stroke="#000" stroke-width="1.2"/><rect x="83.9" y="417.3" width="35.5" height="5.2" fill="url(#bs)"/><rect x="83.9" y="417.3" width="35.5" height="5.2" fill="url(#bv)"/><rect x="83.3" y="428.1" width="30.6" height="6.4" fill="#cc5365" stroke="#000" stroke-width="1.2"/><rect x="83.9" y="428.7" width="29.4" height="5.2" fill="url(#bs)"/><rect x="83.9" y="428.7" width="29.4" height="5.2" fill="url(#bv)"/><rect x="83.3" y="439.5" width="46.9" height="6.4" fill="#4a5baa" stroke="#000" stroke-width="1.2"/><rect x="83.9" y="440.1" width="45.7" height="5.2" fill="url(#bs)"/><rect x="83.9" y="440.1" width="45.7" height="5.2" fill="url(#bv)"/><rect x="83.3" y="451.0" width="72.9" height="6.4" fill="#df7c2c" stroke="#000" stroke-width="1.2"/><rect x="83.9" y="451.6" width="71.7" height="5.2" fill="url(#bs)"/><rect x="83.9" y="451.6" width="71.7" height="5.2" fill="url(#bv)"/><rect x="83.3" y="462.4" width="43.7" height="6.4" fill="#66c7ae" stroke="#000" stroke-width="1.2"/><rect x="83.9" y="463.0" width="42.5" height="5.2" fill="url(#bs)"/><rect x="83.9" y="463.0" width="42.5" height="5.2" fill="url(#bv)"/><rect x="83.3" y="473.9" width="30.9" height="6.4" fill="#8885c0" stroke="#000" stroke-width="1.2"/><rect x="83.9" y="474.5" width="29.7" height="5.2" fill="url(#bs)"/><rect x="83.9" y="474.5" width="29.7" height="5.2" fill="url(#bv)"/><rect x="83.3" y="485.3" width="48.5" height="6.4" fill="#566c40" stroke="#000" stroke-width="1.2"/><rect x="83.9" y="485.9" width="47.3" height="5.2" fill="url(#bs)"/><rect x="83.9" y="485.9" width="47.3" height="5.2" fill="url(#bv)"/><rect x="83.3" y="496.7" width="30.7" height="6.4" fill="#5f82b4" stroke="#000" stroke-width="1.2"/><rect x="83.9" y="497.3" width="29.5" height="5.2" fill="url(#bs)"/><rect x="83.9" y="497.3" width="29.5" height="5.2" fill="url(#bv)"/><rect x="83.3" y="508.2" width="62.7" height="6.4" fill="#c99a84" stroke="#000" stroke-width="1.2"/><rect x="83.9" y="508.8" width="61.5" height="5.2" fill="url(#bs)"/><rect x="83.9" y="508.8" width="61.5" height="5.2" fill="url(#bv)"/><rect x="83.3" y="519.6" width="55.0" height="6.4" fill="#7a5545" stroke="#000" stroke-width="1.2"/><rect x="83.9" y="520.2" width="53.8" height="5.2" fill="url(#bs)"/><rect x="83.9" y="520.2" width="53.8" height="5.2" fill="url(#bv)"/><rect x="83.3" y="531.1" width="15.8" height="6.4" fill="#000000" stroke="#000" stroke-width="1.2"/><rect x="83.9" y="531.7" width="14.6" height="5.2" fill="url(#bs)"/><rect x="83.9" y="531.7" width="14.6" height="5.2" fill="url(#bv)"/><rect x="83.3" y="542.5" width="69.2" height="6.4" fill="#a0a0a0" stroke="#000" stroke-width="1.2"/><rect x="83.9" y="543.1" width="68.0" height="5.2" fill="url(#bs)"/><rect x="83.9" y="543.1" width="68.0" height="5.2" fill="url(#bv)"/><rect x="83.3" y="553.9" width="74.6" height="6.4" fill="#bababa" stroke="#000" stroke-width="1.2"/><rect x="83.9" y="554.5" width="73.4" height="5.2" fill="url(#bs)"/><rect x="83.9" y="554.5" width="73.4" height="5.2" fill="url(#bv)"/><rect x="83.3" y="565.4" width="79.5" height="6.4" fill="#d1d1d1" stroke="#000" stroke-width="1.2"/><rect x="83.9" y="566.0" width="78.3" height="5.2" fill="url(#bs)"/><rect x="83.9" y="566.0" width="78.3" height="5.2" fill="url(#bv)"/><rect x="83.3" y="576.8" width="85.7" height="6.4" fill="#e6e6e6" stroke="#000" stroke-width="1.2"/><rect x="83.9" y="577.4" width="84.5" height="5.2" fill="url(#bs)"/><rect x="83.9" y="577.4" width="84.5" height="5.2" fill="url(#bv)"/><rect x="83.3" y="588.3" width="101.7" height="6.4" fill="#ffffff" stroke="#000" stroke-width="1.2"/><rect x="83.9" y="588.9" width="100.5" height="5.2" fill="url(#bs)"/><rect x="83.9" y="588.9" width="100.5" height="5.2" fill="url(#bv)"/><text x="263.6" y="249.2" font-size="16" fill="#d9d9d9" text-anchor="middle" textLength="85.4" lengthAdjust="spacingAndGlyphs">DeltaE 2000</text><text x="81.8" y="621.3" font-size="15.2" fill="#d9d9d9" text-anchor="middle" textLength="8.2" lengthAdjust="spacingAndGlyphs">0</text><text x="130.1" y="621.3" font-size="15.2" fill="#d9d9d9" text-anchor="middle" textLength="8.2" lengthAdjust="spacingAndGlyphs">2</text><text x="178.3" y="621.3" font-size="15.2" fill="#d9d9d9" text-anchor="middle" textLength="8.2" lengthAdjust="spacingAndGlyphs">4</text><text x="226.6" y="621.3" font-size="15.2" fill="#d9d9d9" text-anchor="middle" textLength="8.2" lengthAdjust="spacingAndGlyphs">6</text><text x="274.8" y="621.3" font-size="15.2" fill="#d9d9d9" text-anchor="middle" textLength="8.2" lengthAdjust="spacingAndGlyphs">8</text><text x="323.1" y="621.3" font-size="15.2" fill="#d9d9d9" text-anchor="middle" textLength="17.5" lengthAdjust="spacingAndGlyphs">10</text><text x="371.4" y="621.3" font-size="15.2" fill="#d9d9d9" text-anchor="middle" textLength="17.5" lengthAdjust="spacingAndGlyphs">12</text><text x="419.6" y="621.3" font-size="15.2" fill="#d9d9d9" text-anchor="middle" textLength="17.5" lengthAdjust="spacingAndGlyphs">14</text><rect x="491" y="137.6" width="166" height="361.8" fill="#262626" stroke="#9a9a9a" stroke-width="1.5"/><path d="M485 137.6H491M485 183.0H657M485 228.5H657M485 273.9H657M485 319.4H657M485 364.8H657M485 410.2H657M485 455.7H657M485 499.4H491" stroke="#a6a6a6" stroke-width="1.4" fill="none"/><rect x="507.7" y="296.4" width="131.8" height="23.6" fill="url(#yb)" stroke="#000" stroke-width="1.4"/><text x="564.8" y="132.0" font-size="15" fill="#d9d9d9" text-anchor="middle" textLength="48.4" lengthAdjust="spacingAndGlyphs">Delta L</text><text x="484.6" y="143.0" font-size="15.2" fill="#d9d9d9" text-anchor="end" textLength="7.9" lengthAdjust="spacingAndGlyphs">4</text><text x="484.6" y="188.4" font-size="15.2" fill="#d9d9d9" text-anchor="end" textLength="7.9" lengthAdjust="spacingAndGlyphs">3</text><text x="484.6" y="233.9" font-size="15.2" fill="#d9d9d9" text-anchor="end" textLength="7.9" lengthAdjust="spacingAndGlyphs">2</text><text x="484.6" y="279.3" font-size="15.2" fill="#d9d9d9" text-anchor="end" textLength="7.9" lengthAdjust="spacingAndGlyphs">1</text><text x="484.6" y="324.8" font-size="15.2" fill="#d9d9d9" text-anchor="end" textLength="7.9" lengthAdjust="spacingAndGlyphs">0</text><text x="484.6" y="370.2" font-size="15.2" fill="#d9d9d9" text-anchor="end" textLength="12.6" lengthAdjust="spacingAndGlyphs">-1</text><text x="484.6" y="415.6" font-size="15.2" fill="#d9d9d9" text-anchor="end" textLength="12.6" lengthAdjust="spacingAndGlyphs">-2</text><text x="484.6" y="461.1" font-size="15.2" fill="#d9d9d9" text-anchor="end" textLength="12.6" lengthAdjust="spacingAndGlyphs">-3</text><text x="484.6" y="504.8" font-size="15.2" fill="#d9d9d9" text-anchor="end" textLength="12.6" lengthAdjust="spacingAndGlyphs">-4</text><rect x="713" y="137.6" width="156" height="361.8" fill="#262626" stroke="#9a9a9a" stroke-width="1.5"/><path d="M707 137.6H713M707 183.0H869M707 228.5H869M707 273.9H869M707 319.4H869M707 364.8H869M707 410.2H869M707 455.7H869M707 499.4H713" stroke="#a6a6a6" stroke-width="1.4" fill="none"/><rect x="730.0" y="220.2" width="123.2" height="99.8" fill="url(#yb)" stroke="#000" stroke-width="1.4"/><text x="777.1" y="132.0" font-size="15" fill="#d9d9d9" text-anchor="middle" textLength="50.4" lengthAdjust="spacingAndGlyphs">Delta C</text><text x="706.2" y="143.0" font-size="15.2" fill="#d9d9d9" text-anchor="end" textLength="15.7" lengthAdjust="spacingAndGlyphs">20</text><text x="706.2" y="188.4" font-size="15.2" fill="#d9d9d9" text-anchor="end" textLength="15.7" lengthAdjust="spacingAndGlyphs">15</text><text x="706.2" y="233.9" font-size="15.2" fill="#d9d9d9" text-anchor="end" textLength="15.7" lengthAdjust="spacingAndGlyphs">10</text><text x="706.2" y="279.3" font-size="15.2" fill="#d9d9d9" text-anchor="end" textLength="7.9" lengthAdjust="spacingAndGlyphs">5</text><text x="706.2" y="324.8" font-size="15.2" fill="#d9d9d9" text-anchor="end" textLength="7.9" lengthAdjust="spacingAndGlyphs">0</text><text x="706.2" y="370.2" font-size="15.2" fill="#d9d9d9" text-anchor="end" textLength="12.6" lengthAdjust="spacingAndGlyphs">-5</text><text x="706.2" y="415.6" font-size="15.2" fill="#d9d9d9" text-anchor="end" textLength="20.4" lengthAdjust="spacingAndGlyphs">-10</text><text x="706.2" y="461.1" font-size="15.2" fill="#d9d9d9" text-anchor="end" textLength="20.4" lengthAdjust="spacingAndGlyphs">-15</text><text x="706.2" y="504.8" font-size="15.2" fill="#d9d9d9" text-anchor="end" textLength="20.4" lengthAdjust="spacingAndGlyphs">-20</text><rect x="917" y="137.6" width="166" height="361.8" fill="#262626" stroke="#9a9a9a" stroke-width="1.5"/><path d="M911 137.6H917M911 183.0H1083M911 228.5H1083M911 273.9H1083M911 319.4H1083M911 364.8H1083M911 410.2H1083M911 455.7H1083M911 499.4H917" stroke="#a6a6a6" stroke-width="1.4" fill="none"/><rect x="934.4" y="180.1" width="129.9" height="139.9" fill="url(#yb)" stroke="#000" stroke-width="1.4"/><text x="990.0" y="132.0" font-size="15" fill="#d9d9d9" text-anchor="middle" textLength="51.7" lengthAdjust="spacingAndGlyphs">Delta H</text><text x="911.3" y="143.0" font-size="15.2" fill="#d9d9d9" text-anchor="end" textLength="7.9" lengthAdjust="spacingAndGlyphs">4</text><text x="911.3" y="188.4" font-size="15.2" fill="#d9d9d9" text-anchor="end" textLength="7.9" lengthAdjust="spacingAndGlyphs">3</text><text x="911.3" y="233.9" font-size="15.2" fill="#d9d9d9" text-anchor="end" textLength="7.9" lengthAdjust="spacingAndGlyphs">2</text><text x="911.3" y="279.3" font-size="15.2" fill="#d9d9d9" text-anchor="end" textLength="7.9" lengthAdjust="spacingAndGlyphs">1</text><text x="911.3" y="324.8" font-size="15.2" fill="#d9d9d9" text-anchor="end" textLength="7.9" lengthAdjust="spacingAndGlyphs">0</text><text x="911.3" y="370.2" font-size="15.2" fill="#d9d9d9" text-anchor="end" textLength="12.6" lengthAdjust="spacingAndGlyphs">-1</text><text x="911.3" y="415.6" font-size="15.2" fill="#d9d9d9" text-anchor="end" textLength="12.6" lengthAdjust="spacingAndGlyphs">-2</text><text x="911.3" y="461.1" font-size="15.2" fill="#d9d9d9" text-anchor="end" textLength="12.6" lengthAdjust="spacingAndGlyphs">-3</text><text x="911.3" y="504.8" font-size="15.2" fill="#d9d9d9" text-anchor="end" textLength="12.6" lengthAdjust="spacingAndGlyphs">-4</text><rect x="1150" y="136.4" width="698.5" height="530.3" fill="#262626" stroke="#9a9a9a" stroke-width="1.5"/><g clip-path="url(#hs)"><g filter="url(#vb)"><rect x="1152" y="133" width="610" height="3.6" fill="url(#c0)"/><rect x="1152" y="136" width="610" height="3.6" fill="url(#c1)"/><rect x="1152" y="139" width="610" height="3.6" fill="url(#c2)"/><rect x="1152" y="142" width="610" height="3.6" fill="url(#c3)"/><rect x="1152" y="145" width="610" height="3.6" fill="url(#c4)"/><rect x="1152" y="148" width="610" height="3.6" fill="url(#c5)"/><rect x="1152" y="151" width="610" height="3.6" fill="url(#c6)"/><rect x="1152" y="154" width="610" height="3.6" fill="url(#c7)"/><rect x="1152" y="157" width="610" height="3.6" fill="url(#c8)"/><rect x="1152" y="160" width="610" height="3.6" fill="url(#c9)"/><rect x="1152" y="163" width="610" height="3.6" fill="url(#c10)"/><rect x="1152" y="166" width="610" height="3.6" fill="url(#c11)"/><rect x="1152" y="169" width="610" height="3.6" fill="url(#c12)"/><rect x="1152" y="172" width="610" height="3.6" fill="url(#c13)"/><rect x="1152" y="175" width="610" height="3.6" fill="url(#c14)"/><rect x="1152" y="178" width="610" height="3.6" fill="url(#c15)"/><rect x="1152" y="181" width="610" height="3.6" fill="url(#c16)"/><rect x="1152" y="184" width="610" height="3.6" fill="url(#c17)"/><rect x="1152" y="187" width="610" height="3.6" fill="url(#c18)"/><rect x="1152" y="190" width="610" height="3.6" fill="url(#c19)"/><rect x="1152" y="193" width="610" height="3.6" fill="url(#c20)"/><rect x="1152" y="196" width="610" height="3.6" fill="url(#c21)"/><rect x="1152" y="199" width="610" height="3.6" fill="url(#c22)"/><rect x="1152" y="202" width="610" height="3.6" fill="url(#c23)"/><rect x="1152" y="205" width="610" height="3.6" fill="url(#c24)"/><rect x="1152" y="208" width="610" height="3.6" fill="url(#c25)"/><rect x="1152" y="211" width="610" height="3.6" fill="url(#c26)"/><rect x="1152" y="214" width="610" height="3.6" fill="url(#c27)"/><rect x="1152" y="217" width="610" height="3.6" fill="url(#c28)"/><rect x="1152" y="220" width="610" height="3.6" fill="url(#c29)"/><rect x="1152" y="223" width="610" height="3.6" fill="url(#c30)"/><rect x="1152" y="226" width="610" height="3.6" fill="url(#c31)"/><rect x="1152" y="229" width="610" height="3.6" fill="url(#c32)"/><rect x="1152" y="232" width="610" height="3.6" fill="url(#c33)"/><rect x="1152" y="235" width="610" height="3.6" fill="url(#c34)"/><rect x="1152" y="238" width="610" height="3.6" fill="url(#c35)"/><rect x="1152" y="241" width="610" height="3.6" fill="url(#c36)"/><rect x="1152" y="244" width="610" height="3.6" fill="url(#c37)"/><rect x="1152" y="247" width="610" height="3.6" fill="url(#c38)"/><rect x="1152" y="250" width="610" height="3.6" fill="url(#c39)"/><rect x="1152" y="253" width="610" height="3.6" fill="url(#c40)"/><rect x="1152" y="256" width="610" height="3.6" fill="url(#c41)"/><rect x="1152" y="259" width="610" height="3.6" fill="url(#c42)"/><rect x="1152" y="262" width="610" height="3.6" fill="url(#c43)"/><rect x="1152" y="265" width="610" height="3.6" fill="url(#c44)"/><rect x="1152" y="268" width="610" height="3.6" fill="url(#c45)"/><rect x="1152" y="271" width="610" height="3.6" fill="url(#c46)"/><rect x="1152" y="274" width="610" height="3.6" fill="url(#c47)"/><rect x="1152" y="277" width="610" height="3.6" fill="url(#c48)"/><rect x="1152" y="280" width="610" height="3.6" fill="url(#c49)"/><rect x="1152" y="283" width="610" height="3.6" fill="url(#c50)"/><rect x="1152" y="286" width="610" height="3.6" fill="url(#c51)"/><rect x="1152" y="289" width="610" height="3.6" fill="url(#c52)"/><rect x="1152" y="292" width="610" height="3.6" fill="url(#c53)"/><rect x="1152" y="295" width="610" height="3.6" fill="url(#c54)"/><rect x="1152" y="298" width="610" height="3.6" fill="url(#c55)"/><rect x="1152" y="301" width="610" height="3.6" fill="url(#c56)"/><rect x="1152" y="304" width="610" height="3.6" fill="url(#c57)"/><rect x="1152" y="307" width="610" height="3.6" fill="url(#c58)"/><rect x="1152" y="310" width="610" height="3.6" fill="url(#c59)"/><rect x="1152" y="313" width="610" height="3.6" fill="url(#c60)"/><rect x="1152" y="316" width="610" height="3.6" fill="url(#c61)"/><rect x="1152" y="319" width="610" height="3.6" fill="url(#c62)"/><rect x="1152" y="322" width="610" height="3.6" fill="url(#c63)"/><rect x="1152" y="325" width="610" height="3.6" fill="url(#c64)"/><rect x="1152" y="328" width="610" height="3.6" fill="url(#c65)"/><rect x="1152" y="331" width="610" height="3.6" fill="url(#c66)"/><rect x="1152" y="334" width="610" height="3.6" fill="url(#c67)"/><rect x="1152" y="337" width="610" height="3.6" fill="url(#c68)"/><rect x="1152" y="340" width="610" height="3.6" fill="url(#c69)"/><rect x="1152" y="343" width="610" height="3.6" fill="url(#c70)"/><rect x="1152" y="346" width="610" height="3.6" fill="url(#c71)"/><rect x="1152" y="349" width="610" height="3.6" fill="url(#c72)"/><rect x="1152" y="352" width="610" height="3.6" fill="url(#c73)"/><rect x="1152" y="355" width="610" height="3.6" fill="url(#c74)"/><rect x="1152" y="358" width="610" height="3.6" fill="url(#c75)"/><rect x="1152" y="361" width="610" height="3.6" fill="url(#c76)"/><rect x="1152" y="364" width="610" height="3.6" fill="url(#c77)"/><rect x="1152" y="367" width="610" height="3.6" fill="url(#c78)"/><rect x="1152" y="370" width="610" height="3.6" fill="url(#c79)"/><rect x="1152" y="373" width="610" height="3.6" fill="url(#c80)"/><rect x="1152" y="376" width="610" height="3.6" fill="url(#c81)"/><rect x="1152" y="379" width="610" height="3.6" fill="url(#c82)"/><rect x="1152" y="382" width="610" height="3.6" fill="url(#c83)"/><rect x="1152" y="385" width="610" height="3.6" fill="url(#c84)"/><rect x="1152" y="388" width="610" height="3.6" fill="url(#c85)"/><rect x="1152" y="391" width="610" height="3.6" fill="url(#c86)"/><rect x="1152" y="394" width="610" height="3.6" fill="url(#c87)"/><rect x="1152" y="397" width="610" height="3.6" fill="url(#c88)"/><rect x="1152" y="400" width="610" height="3.6" fill="url(#c89)"/><rect x="1152" y="403" width="610" height="3.6" fill="url(#c90)"/><rect x="1152" y="406" width="610" height="3.6" fill="url(#c91)"/><rect x="1152" y="409" width="610" height="3.6" fill="url(#c92)"/><rect x="1152" y="412" width="610" height="3.6" fill="url(#c93)"/><rect x="1152" y="415" width="610" height="3.6" fill="url(#c94)"/><rect x="1152" y="418" width="610" height="3.6" fill="url(#c95)"/><rect x="1152" y="421" width="610" height="3.6" fill="url(#c96)"/><rect x="1152" y="424" width="610" height="3.6" fill="url(#c97)"/><rect x="1152" y="427" width="610" height="3.6" fill="url(#c98)"/><rect x="1152" y="430" width="610" height="3.6" fill="url(#c99)"/><rect x="1152" y="433" width="610" height="3.6" fill="url(#c100)"/><rect x="1152" y="436" width="610" height="3.6" fill="url(#c101)"/><rect x="1152" y="439" width="610" height="3.6" fill="url(#c102)"/><rect x="1152" y="442" width="610" height="3.6" fill="url(#c103)"/><rect x="1152" y="445" width="610" height="3.6" fill="url(#c104)"/><rect x="1152" y="448" width="610" height="3.6" fill="url(#c105)"/><rect x="1152" y="451" width="610" height="3.6" fill="url(#c106)"/><rect x="1152" y="454" width="610" height="3.6" fill="url(#c107)"/><rect x="1152" y="457" width="610" height="3.6" fill="url(#c108)"/><rect x="1152" y="460" width="610" height="3.6" fill="url(#c109)"/><rect x="1152" y="463" width="610" height="3.6" fill="url(#c110)"/><rect x="1152" y="466" width="610" height="3.6" fill="url(#c111)"/><rect x="1152" y="469" width="610" height="3.6" fill="url(#c112)"/><rect x="1152" y="472" width="610" height="3.6" fill="url(#c113)"/><rect x="1152" y="475" width="610" height="3.6" fill="url(#c114)"/><rect x="1152" y="478" width="610" height="3.6" fill="url(#c115)"/><rect x="1152" y="481" width="610" height="3.6" fill="url(#c116)"/><rect x="1152" y="484" width="610" height="3.6" fill="url(#c117)"/><rect x="1152" y="487" width="610" height="3.6" fill="url(#c118)"/><rect x="1152" y="490" width="610" height="3.6" fill="url(#c119)"/><rect x="1152" y="493" width="610" height="3.6" fill="url(#c120)"/><rect x="1152" y="496" width="610" height="3.6" fill="url(#c121)"/><rect x="1152" y="499" width="610" height="3.6" fill="url(#c122)"/><rect x="1152" y="502" width="610" height="3.6" fill="url(#c123)"/><rect x="1152" y="505" width="610" height="3.6" fill="url(#c124)"/><rect x="1152" y="508" width="610" height="3.6" fill="url(#c125)"/><rect x="1152" y="511" width="610" height="3.6" fill="url(#c126)"/><rect x="1152" y="514" width="610" height="3.6" fill="url(#c127)"/><rect x="1152" y="517" width="610" height="3.6" fill="url(#c128)"/><rect x="1152" y="520" width="610" height="3.6" fill="url(#c129)"/><rect x="1152" y="523" width="610" height="3.6" fill="url(#c130)"/><rect x="1152" y="526" width="610" height="3.6" fill="url(#c131)"/><rect x="1152" y="529" width="610" height="3.6" fill="url(#c132)"/><rect x="1152" y="532" width="610" height="3.6" fill="url(#c133)"/><rect x="1152" y="535" width="610" height="3.6" fill="url(#c134)"/><rect x="1152" y="538" width="610" height="3.6" fill="url(#c135)"/><rect x="1152" y="541" width="610" height="3.6" fill="url(#c136)"/><rect x="1152" y="544" width="610" height="3.6" fill="url(#c137)"/><rect x="1152" y="547" width="610" height="3.6" fill="url(#c138)"/><rect x="1152" y="550" width="610" height="3.6" fill="url(#c139)"/><rect x="1152" y="553" width="610" height="3.6" fill="url(#c140)"/><rect x="1152" y="556" width="610" height="3.6" fill="url(#c141)"/><rect x="1152" y="559" width="610" height="3.6" fill="url(#c142)"/><rect x="1152" y="562" width="610" height="3.6" fill="url(#c143)"/><rect x="1152" y="565" width="610" height="3.6" fill="url(#c144)"/><rect x="1152" y="568" width="610" height="3.6" fill="url(#c145)"/><rect x="1152" y="571" width="610" height="3.6" fill="url(#c146)"/><rect x="1152" y="574" width="610" height="3.6" fill="url(#c147)"/><rect x="1152" y="577" width="610" height="3.6" fill="url(#c148)"/><rect x="1152" y="580" width="610" height="3.6" fill="url(#c149)"/><rect x="1152" y="583" width="610" height="3.6" fill="url(#c150)"/><rect x="1152" y="586" width="610" height="3.6" fill="url(#c151)"/><rect x="1152" y="589" width="610" height="3.6" fill="url(#c152)"/><rect x="1152" y="592" width="610" height="3.6" fill="url(#c153)"/><rect x="1152" y="595" width="610" height="3.6" fill="url(#c154)"/><rect x="1152" y="598" width="610" height="3.6" fill="url(#c155)"/><rect x="1152" y="601" width="610" height="3.6" fill="url(#c156)"/><rect x="1152" y="604" width="610" height="3.6" fill="url(#c157)"/><rect x="1152" y="607" width="610" height="3.6" fill="url(#c158)"/><rect x="1152" y="610" width="610" height="3.6" fill="url(#c159)"/><rect x="1152" y="613" width="610" height="3.6" fill="url(#c160)"/><rect x="1152" y="616" width="610" height="3.6" fill="url(#c161)"/><rect x="1152" y="619" width="610" height="3.6" fill="url(#c162)"/><rect x="1152" y="622" width="610" height="3.6" fill="url(#c163)"/><rect x="1152" y="625" width="610" height="3.6" fill="url(#c164)"/><rect x="1152" y="628" width="610" height="3.6" fill="url(#c165)"/><rect x="1152" y="631" width="610" height="3.6" fill="url(#c166)"/><rect x="1152" y="634" width="610" height="3.6" fill="url(#c167)"/><rect x="1152" y="637" width="610" height="3.6" fill="url(#c168)"/><rect x="1152" y="640" width="610" height="3.6" fill="url(#c169)"/><rect x="1152" y="643" width="610" height="3.6" fill="url(#c170)"/><rect x="1152" y="646" width="610" height="3.6" fill="url(#c171)"/><rect x="1152" y="649" width="610" height="3.6" fill="url(#c172)"/><rect x="1152" y="652" width="610" height="3.6" fill="url(#c173)"/><rect x="1152" y="655" width="610" height="3.6" fill="url(#c174)"/><rect x="1152" y="658" width="610" height="3.6" fill="url(#c175)"/><rect x="1152" y="661" width="610" height="3.6" fill="url(#c176)"/><rect x="1152" y="664" width="610" height="3.6" fill="url(#c177)"/><rect x="1152" y="667" width="610" height="3.6" fill="url(#c178)"/><rect x="1152" y="670" width="610" height="3.6" fill="url(#c179)"/></g><path d="M1294.2 664.4L1293.0 664.6L1291.0 663.9L1289.9 663.2L1288.2 662.2L1286.1 660.7L1283.4 658.9L1279.6 656.4L1275.0 653.2L1269.2 648.8L1262.1 642.3L1257.6 637.4L1252.6 631.0L1248.9 625.8L1244.9 619.8L1240.5 612.7L1237.0 606.5L1233.3 599.7L1229.4 592.1L1225.3 583.6L1222.4 577.4L1219.3 570.9L1216.1 564.0L1212.9 556.7L1209.7 548.9L1206.5 540.6L1204.1 534.0L1201.6 527.2L1199.2 520.0L1196.7 512.7L1194.3 505.1L1191.9 497.2L1189.5 489.1L1187.1 480.9L1185.2 474.0L1183.3 467.0L1181.4 459.8L1179.4 452.4L1177.6 444.9L1175.7 437.2L1173.9 429.6L1172.1 421.8L1170.5 414.1L1168.9 406.4L1167.5 399.3L1166.1 392.1L1164.7 384.9L1163.4 377.6L1162.2 370.2L1161.0 362.8L1159.9 355.5L1158.8 348.2L1157.8 341.0L1156.9 333.8L1156.1 326.8L1155.3 319.1L1154.6 311.5L1154.0 303.8L1153.5 296.3L1153.0 288.8L1152.7 281.3L1152.5 274.1L1152.4 266.9L1152.4 259.9L1152.5 253.1L1152.9 244.8L1153.5 236.6L1154.2 228.6L1155.2 220.8L1156.3 213.2L1157.6 206.0L1159.1 199.2L1160.9 192.7L1163.5 184.7L1166.6 177.2L1170.0 170.3L1173.6 164.0L1177.6 158.4L1181.7 153.6L1190.7 146.4L1200.7 142.1L1211.1 139.8L1221.9 139.7L1233.1 141.7L1244.3 144.6L1252.8 147.2L1261.3 150.4L1269.8 153.9L1278.1 157.5L1286.2 161.1L1294.2 164.9L1302.0 168.8L1309.9 172.8L1317.6 177.0L1325.2 181.3L1332.8 185.6L1340.4 190.1L1348.0 194.7L1355.5 199.4L1363.0 204.2L1370.5 209.1L1378.0 214.1L1385.4 219.1L1392.9 224.2L1400.3 229.4L1407.8 234.6L1415.2 239.9L1422.6 245.2L1430.0 250.5L1437.5 255.9L1444.9 261.3L1452.4 266.8L1459.8 272.3L1467.3 277.8L1474.7 283.3L1482.1 288.9L1489.5 294.4L1496.9 299.9L1504.2 305.4L1511.6 311.0L1518.9 316.5L1526.2 322.0L1533.5 327.4L1540.7 332.9L1547.8 338.3L1554.9 343.7L1562.0 349.0L1568.9 354.3L1575.9 359.6L1582.7 364.8L1589.5 369.9L1596.2 375.0L1602.7 380.0L1609.2 384.9L1615.6 389.7L1621.9 394.4L1628.0 399.1L1636.0 405.1L1643.7 411.0L1651.1 416.6L1658.1 421.9L1664.8 427.0L1671.2 431.8L1680.3 438.7L1688.8 445.2L1696.5 450.9L1703.4 456.2L1709.7 460.9L1715.3 465.2L1724.8 472.4L1732.4 478.1L1738.5 482.8L1743.6 486.6L1747.7 489.8L1751.1 492.3L1753.5 494.2L1755.5 495.6L1756.9 496.7L1757.8 497.4L1759.1 498.4L1760.2 499.2ZM1682.0 458.7L1399.0 287.8L1274.1 629.6Z" fill-rule="evenodd" fill="#000" opacity=".40"/></g><path d="M1150.0 666.5v6.6M1233.1 666.5v6.6M1316.2 666.5v6.6M1399.3 666.5v6.6M1482.4 666.5v6.6M1565.5 666.5v6.6M1648.6 666.5v6.6M1731.7 666.5v6.6M1814.8 666.5v6.6M1150 666.9h-6M1150 603.8h-6M1150 540.7h-6M1150 477.6h-6M1150 414.5h-6M1150 351.4h-6M1150 288.3h-6M1150 225.2h-6M1150 162.1h-6" stroke="#a6a6a6" stroke-width="1.4" fill="none"/><text x="1485.0" y="131.0" font-size="15" fill="#d9d9d9" text-anchor="middle" textLength="81.3" lengthAdjust="spacingAndGlyphs">CIE 1931 xy</text><text x="1149.4" y="689.9" font-size="15.2" fill="#d9d9d9" text-anchor="middle" textLength="8.5" lengthAdjust="spacingAndGlyphs">0</text><text x="1143.2" y="675.4" font-size="15.2" fill="#d9d9d9" text-anchor="end" textLength="8.6" lengthAdjust="spacingAndGlyphs">0</text><text x="1232.5" y="689.9" font-size="15.2" fill="#d9d9d9" text-anchor="middle" textLength="21.1" lengthAdjust="spacingAndGlyphs">0,1</text><text x="1143.2" y="612.0" font-size="15.2" fill="#d9d9d9" text-anchor="end" textLength="21.6" lengthAdjust="spacingAndGlyphs">0,1</text><text x="1315.6" y="689.9" font-size="15.2" fill="#d9d9d9" text-anchor="middle" textLength="21.1" lengthAdjust="spacingAndGlyphs">0,2</text><text x="1143.2" y="548.6" font-size="15.2" fill="#d9d9d9" text-anchor="end" textLength="21.6" lengthAdjust="spacingAndGlyphs">0,2</text><text x="1398.7" y="689.9" font-size="15.2" fill="#d9d9d9" text-anchor="middle" textLength="21.1" lengthAdjust="spacingAndGlyphs">0,3</text><text x="1143.2" y="485.2" font-size="15.2" fill="#d9d9d9" text-anchor="end" textLength="21.6" lengthAdjust="spacingAndGlyphs">0,3</text><text x="1481.8" y="689.9" font-size="15.2" fill="#d9d9d9" text-anchor="middle" textLength="21.1" lengthAdjust="spacingAndGlyphs">0,4</text><text x="1143.2" y="421.8" font-size="15.2" fill="#d9d9d9" text-anchor="end" textLength="21.6" lengthAdjust="spacingAndGlyphs">0,4</text><text x="1564.9" y="689.9" font-size="15.2" fill="#d9d9d9" text-anchor="middle" textLength="21.1" lengthAdjust="spacingAndGlyphs">0,5</text><text x="1143.2" y="358.4" font-size="15.2" fill="#d9d9d9" text-anchor="end" textLength="21.6" lengthAdjust="spacingAndGlyphs">0,5</text><text x="1648.0" y="689.9" font-size="15.2" fill="#d9d9d9" text-anchor="middle" textLength="21.1" lengthAdjust="spacingAndGlyphs">0,6</text><text x="1143.2" y="295.0" font-size="15.2" fill="#d9d9d9" text-anchor="end" textLength="21.6" lengthAdjust="spacingAndGlyphs">0,6</text><text x="1731.1" y="689.9" font-size="15.2" fill="#d9d9d9" text-anchor="middle" textLength="21.1" lengthAdjust="spacingAndGlyphs">0,7</text><text x="1143.2" y="231.6" font-size="15.2" fill="#d9d9d9" text-anchor="end" textLength="21.6" lengthAdjust="spacingAndGlyphs">0,7</text><text x="1814.2" y="689.9" font-size="15.2" fill="#d9d9d9" text-anchor="middle" textLength="21.1" lengthAdjust="spacingAndGlyphs">0,8</text><text x="1143.2" y="168.2" font-size="15.2" fill="#d9d9d9" text-anchor="end" textLength="21.6" lengthAdjust="spacingAndGlyphs">0,8</text><rect x="1402.1" y="451.8" width="15" height="15" fill="none" stroke="#101010" stroke-width="2" opacity="1"/><rect x="1475.0" y="429.6" width="15" height="15" fill="none" stroke="#fff" stroke-width="2" opacity=".8"/><rect x="1457.7" y="434.6" width="15" height="15" fill="none" stroke="#fff" stroke-width="2" opacity=".8"/><rect x="1349.5" y="492.0" width="15" height="15" fill="none" stroke="#fff" stroke-width="2" opacity=".8"/><rect x="1424.4" y="389.7" width="15" height="15" fill="none" stroke="#fff" stroke-width="2" opacity=".8"/><rect x="1364.9" y="500.3" width="15" height="15" fill="none" stroke="#fff" stroke-width="2" opacity=".8"/><rect x="1360.4" y="431.2" width="15" height="15" fill="none" stroke="#fff" stroke-width="2" opacity=".8"/><rect x="1568.1" y="402.9" width="15" height="15" fill="none" stroke="#fff" stroke-width="2" opacity=".8"/><rect x="1321.7" y="537.7" width="15" height="15" fill="none" stroke="#fff" stroke-width="2" opacity=".8"/><rect x="1526.0" y="461.6" width="15" height="15" fill="none" stroke="#fff" stroke-width="2" opacity=".8"/><rect x="1383.5" y="518.8" width="15" height="15" fill="none" stroke="#fff" stroke-width="2" opacity=".8"/><rect x="1453.8" y="346.9" width="15" height="15" fill="none" stroke="#fff" stroke-width="2" opacity=".8"/><rect x="1513.8" y="359.2" width="15" height="15" fill="none" stroke="#fff" stroke-width="2" opacity=".8"/><rect x="1301.1" y="569.7" width="15" height="15" fill="none" stroke="#fff" stroke-width="2" opacity=".8"/><rect x="1395.0" y="348.2" width="15" height="15" fill="none" stroke="#fff" stroke-width="2" opacity=".8"/><rect x="1589.0" y="458.6" width="15" height="15" fill="none" stroke="#fff" stroke-width="2" opacity=".8"/><rect x="1535.8" y="381.0" width="15" height="15" fill="none" stroke="#fff" stroke-width="2" opacity=".8"/><rect x="1452.5" y="502.8" width="15" height="15" fill="none" stroke="#fff" stroke-width="2" opacity=".8"/><rect x="1314.0" y="488.0" width="15" height="15" fill="none" stroke="#fff" stroke-width="2" opacity=".8"/><rect x="1674.0" y="449.5" width="15" height="15" fill="none" stroke="#fff" stroke-width="2" opacity=".8"/><rect x="1390.6" y="279.9" width="15" height="15" fill="none" stroke="#fff" stroke-width="2" opacity=".8"/><rect x="1266.3" y="619.8" width="15" height="15" fill="none" stroke="#fff" stroke-width="2" opacity=".8"/><rect x="1329.2" y="451.0" width="15" height="15" fill="none" stroke="#fff" stroke-width="2" opacity=".8"/><rect x="1408.3" y="561.3" width="15" height="15" fill="none" stroke="#fff" stroke-width="2" opacity=".8"/><rect x="1490.7" y="339.8" width="15" height="15" fill="none" stroke="#fff" stroke-width="2" opacity=".8"/><circle cx="1410.2" cy="455.7" r="4.9" fill="#a8a8a8" stroke="#161616" stroke-width="1.5"/><circle cx="1358.2" cy="492.1" r="4.9" fill="#000000" stroke="#161616" stroke-width="1.5"/><circle cx="1486.6" cy="430.9" r="4.9" fill="#6a4a3e" stroke="#161616" stroke-width="1.5"/><circle cx="1466.5" cy="437.6" r="4.9" fill="#bc9484" stroke="#161616" stroke-width="1.5"/><circle cx="1356.9" cy="499.0" r="4.9" fill="#7286a6" stroke="#161616" stroke-width="1.5"/><circle cx="1431.2" cy="386.4" r="4.9" fill="#56683e" stroke="#161616" stroke-width="1.5"/><circle cx="1373.4" cy="507.8" r="4.9" fill="#8c88ac" stroke="#161616" stroke-width="1.5"/><circle cx="1365.6" cy="433.5" r="4.9" fill="#7ab8a4" stroke="#161616" stroke-width="1.5"/><circle cx="1578.9" cy="403.2" r="4.9" fill="#d8904c" stroke="#161616" stroke-width="1.5"/><circle cx="1329.5" cy="547.9" r="4.9" fill="#6870a4" stroke="#161616" stroke-width="1.5"/><circle cx="1537.9" cy="465.8" r="4.9" fill="#c06474" stroke="#161616" stroke-width="1.5"/><circle cx="1392.0" cy="529.2" r="4.9" fill="#5c3c60" stroke="#161616" stroke-width="1.5"/><circle cx="1459.9" cy="341.6" r="4.9" fill="#a4b44c" stroke="#161616" stroke-width="1.5"/><circle cx="1523.1" cy="357.4" r="4.9" fill="#e4b440" stroke="#161616" stroke-width="1.5"/><circle cx="1308.6" cy="584.7" r="4.9" fill="#444a94" stroke="#161616" stroke-width="1.5"/><circle cx="1398.3" cy="342.7" r="4.9" fill="#4c8c4c" stroke="#161616" stroke-width="1.5"/><circle cx="1603.8" cy="463.2" r="4.9" fill="#b04450" stroke="#161616" stroke-width="1.5"/><circle cx="1546.5" cy="379.4" r="4.9" fill="#e8b83c" stroke="#161616" stroke-width="1.5"/><circle cx="1464.3" cy="509.8" r="4.9" fill="#b45c8c" stroke="#161616" stroke-width="1.5"/><circle cx="1319.9" cy="495.5" r="4.9" fill="#1c8ca0" stroke="#161616" stroke-width="1.5"/><circle cx="1682.9" cy="454.3" r="4.9" fill="#f01414" stroke="#161616" stroke-width="1.5"/><circle cx="1392.3" cy="267.9" r="4.9" fill="#28f028" stroke="#161616" stroke-width="1.5"/><circle cx="1278.3" cy="634.8" r="4.4" fill="#0c0cf0" stroke="#0a0aa8" stroke-width="1.5"/><circle cx="1333.5" cy="454.4" r="4.9" fill="#14f0f0" stroke="#161616" stroke-width="1.5"/><circle cx="1421.2" cy="570.3" r="4.9" fill="#f028f0" stroke="#161616" stroke-width="1.5"/><circle cx="1498.0" cy="335.4" r="4.9" fill="#f8f020" stroke="#161616" stroke-width="1.5"/><g clip-path="url(#ic)"><rect x="1605.5" y="143.5" width="236.5" height="4.6" fill="url(#i0)"/><rect x="1605.5" y="147.5" width="236.5" height="4.6" fill="url(#i1)"/><rect x="1605.5" y="151.5" width="236.5" height="4.6" fill="url(#i2)"/><rect x="1605.5" y="155.5" width="236.5" height="4.6" fill="url(#i3)"/><rect x="1605.5" y="159.5" width="236.5" height="4.6" fill="url(#i4)"/><rect x="1605.5" y="163.5" width="236.5" height="4.6" fill="url(#i5)"/><rect x="1605.5" y="167.5" width="236.5" height="4.6" fill="url(#i6)"/><rect x="1605.5" y="171.5" width="236.5" height="4.6" fill="url(#i7)"/><rect x="1605.5" y="175.5" width="236.5" height="4.6" fill="url(#i8)"/><rect x="1605.5" y="179.5" width="236.5" height="4.6" fill="url(#i9)"/><rect x="1605.5" y="183.5" width="236.5" height="4.6" fill="url(#i10)"/><rect x="1605.5" y="187.5" width="236.5" height="4.6" fill="url(#i11)"/><rect x="1605.5" y="191.5" width="236.5" height="4.6" fill="url(#i12)"/><rect x="1605.5" y="195.5" width="236.5" height="4.6" fill="url(#i13)"/><rect x="1605.5" y="199.5" width="236.5" height="4.6" fill="url(#i14)"/><rect x="1605.5" y="203.5" width="236.5" height="4.6" fill="url(#i15)"/><rect x="1605.5" y="207.5" width="236.5" height="4.6" fill="url(#i16)"/><rect x="1605.5" y="211.5" width="236.5" height="4.6" fill="url(#i17)"/><rect x="1605.5" y="215.5" width="236.5" height="4.6" fill="url(#i18)"/><rect x="1605.5" y="219.5" width="236.5" height="4.6" fill="url(#i19)"/><rect x="1605.5" y="223.5" width="236.5" height="4.6" fill="url(#i20)"/><rect x="1605.5" y="227.5" width="236.5" height="4.6" fill="url(#i21)"/><rect x="1605.5" y="231.5" width="236.5" height="4.6" fill="url(#i22)"/><rect x="1605.5" y="235.5" width="236.5" height="4.6" fill="url(#i23)"/><rect x="1605.5" y="239.5" width="236.5" height="4.6" fill="url(#i24)"/><rect x="1605.5" y="243.5" width="236.5" height="4.6" fill="url(#i25)"/><rect x="1605.5" y="247.5" width="236.5" height="4.6" fill="url(#i26)"/><rect x="1605.5" y="251.5" width="236.5" height="4.6" fill="url(#i27)"/><rect x="1605.5" y="255.5" width="236.5" height="4.6" fill="url(#i28)"/><rect x="1605.5" y="259.5" width="236.5" height="4.6" fill="url(#i29)"/><rect x="1605.5" y="263.5" width="236.5" height="4.6" fill="url(#i30)"/><rect x="1605.5" y="267.5" width="236.5" height="4.6" fill="url(#i31)"/><rect x="1605.5" y="271.5" width="236.5" height="4.6" fill="url(#i32)"/><rect x="1605.5" y="275.5" width="236.5" height="4.6" fill="url(#i33)"/><rect x="1605.5" y="279.5" width="236.5" height="4.6" fill="url(#i34)"/><rect x="1605.5" y="283.5" width="236.5" height="4.6" fill="url(#i35)"/><rect x="1605.5" y="287.5" width="236.5" height="4.6" fill="url(#i36)"/><rect x="1605.5" y="291.5" width="236.5" height="4.6" fill="url(#i37)"/><rect x="1605.5" y="295.5" width="236.5" height="4.6" fill="url(#i38)"/><rect x="1605.5" y="299.5" width="236.5" height="4.6" fill="url(#i39)"/><rect x="1605.5" y="303.5" width="236.5" height="4.6" fill="url(#i40)"/><rect x="1605.5" y="307.5" width="236.5" height="4.6" fill="url(#i41)"/><rect x="1605.5" y="311.5" width="236.5" height="4.6" fill="url(#i42)"/><rect x="1605.5" y="315.5" width="236.5" height="4.6" fill="url(#i43)"/><rect x="1605.5" y="319.5" width="236.5" height="4.6" fill="url(#i44)"/><rect x="1605.5" y="323.5" width="236.5" height="4.6" fill="url(#i45)"/><rect x="1605.5" y="327.5" width="236.5" height="4.6" fill="url(#i46)"/><rect x="1605.5" y="331.5" width="236.5" height="4.6" fill="url(#i47)"/><rect x="1605.5" y="335.5" width="236.5" height="4.6" fill="url(#i48)"/><rect x="1605.5" y="339.5" width="236.5" height="4.6" fill="url(#i49)"/><path d="M1159.5 -133.9L2767.7 940.7L2767.7 -1327.9L1159.5 -1327.9Z" fill="#000" opacity=".40"/></g><rect x="1605.5" y="143.5" width="236.5" height="199" fill="none" stroke="#8c8c8c" stroke-width="1.6"/><rect x="1714.5" y="234.5" width="16" height="15.5" fill="none" stroke="#fff" stroke-width="1.6" opacity=".85"/><circle cx="1721" cy="172" r="4.6" fill="#f8f020" stroke="#161616" stroke-width="1.4"/><rect x="1573.5" y="631" width="271.5" height="30" fill="#333" opacity=".92"/><text x="1574.6" y="654.9" font-size="22.4" fill="#f0f0f0" textLength="227.3" lengthAdjust="spacingAndGlyphs">RGB Triplet: 255, 255, 0</text></svg>
<div id="swatches" class="abs" style="left:465px;top:514px;width:639px;height:173px;background:#000;overflow:hidden">
<div class="abs" style="left:18.5px;top:7px;width:63.5px;height:127px;box-sizing:border-box;border:1.5px solid rgba(255,255,255,.82);background:linear-gradient(#fdfefb 0,#fdfefb 49%,#ffffff 51%,#ffffff 100%)"></div>
<div class="abs" style="left:91.9px;top:7px;width:63.5px;height:127px;box-sizing:border-box;border:1.5px solid rgba(255,255,255,.82);background:linear-gradient(#e0e4df 0,#e0e4df 49%,#e6e6e6 51%,#e6e6e6 100%)"></div>
<div class="abs" style="left:165.3px;top:7px;width:63.5px;height:127px;box-sizing:border-box;border:1.5px solid rgba(255,255,255,.82);background:linear-gradient(#c9cdc9 0,#c9cdc9 49%,#d1d1d1 51%,#d1d1d1 100%)"></div>
<div class="abs" style="left:238.7px;top:7px;width:63.5px;height:127px;box-sizing:border-box;border:1.5px solid rgba(255,255,255,.82);background:linear-gradient(#b2b6b2 0,#b2b6b2 49%,#bababa 51%,#bababa 100%)"></div>
<div class="abs" style="left:312.1px;top:7px;width:63.5px;height:127px;box-sizing:border-box;border:1.5px solid rgba(255,255,255,.82);background:linear-gradient(#9a9c9a 0,#9a9c9a 49%,#a0a0a0 51%,#a0a0a0 100%)"></div>
<div class="abs" style="left:385.5px;top:7px;width:63.5px;height:127px;box-sizing:border-box;border:1.5px solid rgba(255,255,255,.82);background:linear-gradient(#030305 0,#030305 49%,#000000 51%,#000000 100%)"></div>
<div class="abs" style="left:458.9px;top:7px;width:63.5px;height:127px;box-sizing:border-box;border:1.5px solid rgba(255,255,255,.82);background:linear-gradient(#71523f 0,#71523f 49%,#745447 51%,#745447 100%)"></div>
<div class="abs" style="left:532.3px;top:7px;width:63.5px;height:127px;box-sizing:border-box;border:1.5px solid rgba(255,255,255,.82);background:linear-gradient(#c0947a 0,#c0947a 49%,#c4967f 51%,#c4967f 100%)"></div>
<div class="abs" style="left:605.7px;top:7px;width:63.5px;height:127px;box-sizing:border-box;border:1.5px solid rgba(255,255,255,.82);background:linear-gradient(#5a78a0 0,#5a78a0 49%,#5c7aa0 51%,#5c7aa0 100%)"></div>
</div>
<div class="t" style="left:499.15px;top:653.56px;font-size:12.80px;color:#fff;transform:scaleX(0.9844);text-shadow:0 0 .6px #fff;">White</div>
<div class="t" style="left:566.94px;top:653.56px;font-size:12.80px;color:#fff;transform:scaleX(0.9537);text-shadow:0 0 .6px #fff;">Gray 80</div>
<div class="t" style="left:640.34px;top:653.56px;font-size:12.80px;color:#fff;transform:scaleX(0.9537);text-shadow:0 0 .6px #fff;">Gray 65</div>
<div class="t" style="left:713.74px;top:653.56px;font-size:12.80px;color:#fff;transform:scaleX(0.9537);text-shadow:0 0 .6px #fff;">Gray 50</div>
<div class="t" style="left:787.14px;top:653.56px;font-size:12.80px;color:#fff;transform:scaleX(0.9537);text-shadow:0 0 .6px #fff;">Gray 35</div>
<div class="t" style="left:866.46px;top:653.56px;font-size:12.80px;color:#fff;transform:scaleX(1.0089);text-shadow:0 0 .6px #fff;">Black</div>
<div class="t" style="left:928.35px;top:653.56px;font-size:12.80px;color:#fff;transform:scaleX(0.9840);text-shadow:0 0 .6px #fff;">Dark Skin</div>
<div class="t" style="left:1000.45px;top:653.56px;font-size:12.80px;color:#fff;transform:scaleX(1.0175);text-shadow:0 0 .6px #fff;">Light Skin</div>
<div class="abs" style="left:1070px;top:648px;width:34px;height:20px;overflow:hidden"><div class="t" style="left:7.00px;top:5.56px;font-size:12.80px;color:#fff;transform:scaleX(0.9896);text-shadow:0 0 .6px #fff;">Blue Sky</div></div>
<div class="t" style="left:469px;top:567.5px;font-size:12.8px;color:#fff;text-shadow:0 0 .6px #fff;transform:rotate(-90deg);transform-origin:0 0">Actual</div>
<div class="t" style="left:469px;top:639px;font-size:12.8px;color:#fff;text-shadow:0 0 .6px #fff;transform:rotate(-90deg);transform-origin:0 0">Target</div>
<div class="abs" style="left:465px;top:687px;width:639px;height:18px;background:#656565"></div>
<div class="abs" style="left:484.5px;top:688.5px;width:170px;height:15px;border-radius:7.5px;background:#505050"></div>
<div class="abs" style="left:466px;top:688.5px;width:15px;height:15px;border-radius:3px;background:#8a8a8a"></div><div class="abs" style="left:469.5px;top:691.5px;border-top:4.5px solid transparent;border-bottom:4.5px solid transparent;border-right:6.5px solid #4c4c4c"></div>
<div class="abs" style="left:1088px;top:688.5px;width:15px;height:15px;border-radius:3px;background:#8a8a8a"></div><div class="abs" style="left:1093px;top:691.5px;border-top:4.5px solid transparent;border-bottom:4.5px solid transparent;border-left:6.5px solid #4c4c4c"></div>
<div id="datatable" class="abs" style="left:408px;top:721px;width:1449.5px;height:243.3px;overflow:hidden;background:#333">
<div class="abs" style="left:0;top:0;width:1450px;height:30.3px;background:linear-gradient(#2a2a2a 0,#262626 48%,#141414 52%,#101010 100%)"></div>
<div class="abs" style="left:0;top:30.30px;width:1450px;height:27.87px;background:#464646"></div>
<div class="abs" style="left:0;top:58.17px;width:1450px;height:27.87px;background:#7e7e7e"></div>
<div class="abs" style="left:0;top:86.04px;width:1450px;height:27.87px;background:#464646"></div>
<div class="abs" style="left:0;top:113.91px;width:1450px;height:27.87px;background:#7e7e7e"></div>
<div class="abs" style="left:0;top:141.78px;width:1450px;height:27.87px;background:#464646"></div>
<div class="abs" style="left:0;top:169.65px;width:1450px;height:27.87px;background:#7e7e7e"></div>
<div class="abs" style="left:0;top:197.52px;width:1450px;height:27.87px;background:#464646"></div>
<div class="abs" style="left:0;top:30.30px;width:17.5px;height:27.87px;background:linear-gradient(90deg,#181818,#3c3c3c)"></div>
<div class="abs" style="left:0;top:58.17px;width:17.5px;height:27.87px;background:linear-gradient(90deg,#202020,#4e4e4e)"></div>
<div class="abs" style="left:0;top:86.04px;width:17.5px;height:27.87px;background:linear-gradient(90deg,#181818,#3c3c3c)"></div>
<div class="abs" style="left:0;top:113.91px;width:17.5px;height:27.87px;background:linear-gradient(90deg,#202020,#4e4e4e)"></div>
<div class="abs" style="left:0;top:141.78px;width:17.5px;height:27.87px;background:linear-gradient(90deg,#181818,#3c3c3c)"></div>
<div class="abs" style="left:0;top:169.65px;width:17.5px;height:27.87px;background:linear-gradient(90deg,#202020,#4e4e4e)"></div>
<div class="abs" style="left:0;top:197.52px;width:17.5px;height:27.87px;background:linear-gradient(90deg,#181818,#3c3c3c)"></div>
<div class="abs" style="left:0;top:0;width:17.5px;height:30.3px;background:#000"></div>
<div class="abs" style="left:17.5px;top:225.4px;width:1432px;height:17.9px;background:#606060;box-shadow:inset 0 1px 0 #6c6c6c"></div>
<div class="abs" style="left:40.5px;top:227.2px;width:627px;height:14.6px;border-radius:7.3px;background:#454545"></div>
<div class="abs" style="left:19.5px;top:226.6px;width:15px;height:14px;border-radius:3px;background:#8a8a8a"></div><div class="abs" style="left:23px;top:229.1px;border-top:4.5px solid transparent;border-bottom:4.5px solid transparent;border-right:6.5px solid #4c4c4c"></div>
<div class="abs" style="left:1431px;top:226.6px;width:15px;height:14px;border-radius:3px;background:#8a8a8a"></div><div class="abs" style="left:1436px;top:229.1px;border-top:4.5px solid transparent;border-bottom:4.5px solid transparent;border-left:6.5px solid #4c4c4c"></div>
<div class="t" style="left:165.75px;top:8.09px;font-size:15.60px;color:#f0f0f0;transform:scaleX(1.2689);">White</div>
<div class="t" style="left:165.75px;top:37.01px;font-size:17.00px;color:#f4f4f4;transform:scaleX(1.1680);">0,3142</div>
<div class="t" style="left:165.75px;top:64.91px;font-size:17.00px;color:#f4f4f4;transform:scaleX(1.1680);">0,3356</div>
<div class="t" style="left:165.75px;top:92.71px;font-size:17.00px;color:#f4f4f4;transform:scaleX(1.1680);">429,4085</div>
<div class="t" style="left:165.75px;top:120.51px;font-size:17.00px;color:#f4f4f4;transform:scaleX(1.1680);">0,3127</div>
<div class="t" style="left:165.75px;top:148.41px;font-size:17.00px;color:#f4f4f4;transform:scaleX(1.1680);">0,3290</div>
<div class="t" style="left:165.75px;top:176.21px;font-size:17.00px;color:#f4f4f4;transform:scaleX(1.1680);">429,4085</div>
<div class="t" style="left:165.75px;top:204.01px;font-size:17.00px;color:#f4f4f4;transform:scaleX(1.1680);">4,2957</div>
<div class="t" style="left:262.50px;top:8.09px;font-size:15.60px;color:#f0f0f0;transform:scaleX(1.1758);">Gray 80</div>
<div class="t" style="left:262.50px;top:37.01px;font-size:17.00px;color:#f4f4f4;transform:scaleX(1.1680);">0,3130</div>
<div class="t" style="left:262.50px;top:64.91px;font-size:17.00px;color:#f4f4f4;transform:scaleX(1.1680);">0,3343</div>
<div class="t" style="left:262.50px;top:92.71px;font-size:17.00px;color:#f4f4f4;transform:scaleX(1.1680);">331,6720</div>
<div class="t" style="left:262.50px;top:120.51px;font-size:17.00px;color:#f4f4f4;transform:scaleX(1.1680);">0,3127</div>
<div class="t" style="left:262.50px;top:148.41px;font-size:17.00px;color:#f4f4f4;transform:scaleX(1.1680);">0,3290</div>
<div class="t" style="left:262.50px;top:176.21px;font-size:17.00px;color:#f4f4f4;transform:scaleX(1.1680);">339,7901</div>
<div class="t" style="left:262.50px;top:204.01px;font-size:17.00px;color:#f4f4f4;transform:scaleX(1.1680);">3,6316</div>
<div class="t" style="left:359.00px;top:8.09px;font-size:15.60px;color:#f0f0f0;transform:scaleX(1.1713);">Gray 65</div>
<div class="t" style="left:359.00px;top:37.01px;font-size:17.00px;color:#f4f4f4;transform:scaleX(1.1680);">0,3128</div>
<div class="t" style="left:359.00px;top:64.91px;font-size:17.00px;color:#f4f4f4;transform:scaleX(1.1680);">0,3340</div>
<div class="t" style="left:359.00px;top:92.71px;font-size:17.00px;color:#f4f4f4;transform:scaleX(1.1680);">264,6589</div>
<div class="t" style="left:359.00px;top:120.51px;font-size:17.00px;color:#f4f4f4;transform:scaleX(1.1680);">0,3127</div>
<div class="t" style="left:359.00px;top:148.41px;font-size:17.00px;color:#f4f4f4;transform:scaleX(1.1680);">0,3290</div>
<div class="t" style="left:359.00px;top:176.21px;font-size:17.00px;color:#f4f4f4;transform:scaleX(1.1680);">273,7895</div>
<div class="t" style="left:359.00px;top:204.01px;font-size:17.00px;color:#f4f4f4;transform:scaleX(1.1680);">3,3784</div>
<div class="t" style="left:455.75px;top:8.09px;font-size:15.60px;color:#f0f0f0;transform:scaleX(1.1803);">Gray 50</div>
<div class="t" style="left:455.75px;top:37.01px;font-size:17.00px;color:#f4f4f4;transform:scaleX(1.1680);">0,3128</div>
<div class="t" style="left:455.75px;top:64.91px;font-size:17.00px;color:#f4f4f4;transform:scaleX(1.1680);">0,3340</div>
<div class="t" style="left:455.75px;top:92.71px;font-size:17.00px;color:#f4f4f4;transform:scaleX(1.1680);">202,8425</div>
<div class="t" style="left:455.75px;top:120.51px;font-size:17.00px;color:#f4f4f4;transform:scaleX(1.1680);">0,3127</div>
<div class="t" style="left:455.75px;top:148.41px;font-size:17.00px;color:#f4f4f4;transform:scaleX(1.1680);">0,3290</div>
<div class="t" style="left:455.75px;top:176.21px;font-size:17.00px;color:#f4f4f4;transform:scaleX(1.1680);">210,8485</div>
<div class="t" style="left:455.75px;top:204.01px;font-size:17.00px;color:#f4f4f4;transform:scaleX(1.1680);">3,1736</div>
<div class="t" style="left:552.50px;top:8.09px;font-size:15.60px;color:#f0f0f0;transform:scaleX(1.1713);">Gray 35</div>
<div class="t" style="left:552.50px;top:37.01px;font-size:17.00px;color:#f4f4f4;transform:scaleX(1.1680);">0,3129</div>
<div class="t" style="left:552.50px;top:64.91px;font-size:17.00px;color:#f4f4f4;transform:scaleX(1.1680);">0,3342</div>
<div class="t" style="left:552.50px;top:92.71px;font-size:17.00px;color:#f4f4f4;transform:scaleX(1.1680);">140,7152</div>
<div class="t" style="left:552.50px;top:120.51px;font-size:17.00px;color:#f4f4f4;transform:scaleX(1.1680);">0,3127</div>
<div class="t" style="left:552.50px;top:148.41px;font-size:17.00px;color:#f4f4f4;transform:scaleX(1.1680);">0,3290</div>
<div class="t" style="left:552.50px;top:176.21px;font-size:17.00px;color:#f4f4f4;transform:scaleX(1.1680);">146,8210</div>
<div class="t" style="left:552.50px;top:204.01px;font-size:17.00px;color:#f4f4f4;transform:scaleX(1.1680);">2,9504</div>
<div class="t" style="left:649.50px;top:8.09px;font-size:15.60px;color:#f0f0f0;transform:scaleX(1.1665);">Black</div>
<div class="t" style="left:649.50px;top:37.01px;font-size:17.00px;color:#f4f4f4;transform:scaleX(1.1680);">0,2510</div>
<div class="t" style="left:649.50px;top:64.91px;font-size:17.00px;color:#f4f4f4;transform:scaleX(1.1680);">0,2773</div>
<div class="t" style="left:649.50px;top:92.71px;font-size:17.00px;color:#f4f4f4;transform:scaleX(1.1680);">0,3079</div>
<div class="t" style="left:649.50px;top:120.51px;font-size:17.00px;color:#f4f4f4;transform:scaleX(1.1680);">0,3127</div>
<div class="t" style="left:649.50px;top:148.41px;font-size:17.00px;color:#f4f4f4;transform:scaleX(1.1680);">0,3290</div>
<div class="t" style="left:649.50px;top:176.21px;font-size:17.00px;color:#f4f4f4;transform:scaleX(1.1680);">0,0000</div>
<div class="t" style="left:649.50px;top:204.01px;font-size:17.00px;color:#f4f4f4;transform:scaleX(1.1680);">0,7480</div>
<div class="t" style="left:723.25px;top:8.09px;font-size:15.60px;color:#f0f0f0;transform:scaleX(1.1720);">Dark Skin</div>
<div class="t" style="left:723.25px;top:37.01px;font-size:17.00px;color:#f4f4f4;transform:scaleX(1.1680);">0,4053</div>
<div class="t" style="left:723.25px;top:64.91px;font-size:17.00px;color:#f4f4f4;transform:scaleX(1.1680);">0,3740</div>
<div class="t" style="left:723.25px;top:92.71px;font-size:17.00px;color:#f4f4f4;transform:scaleX(1.1680);">40,8739</div>
<div class="t" style="left:723.25px;top:120.51px;font-size:17.00px;color:#f4f4f4;transform:scaleX(1.1680);">0,4003</div>
<div class="t" style="left:723.25px;top:148.41px;font-size:17.00px;color:#f4f4f4;transform:scaleX(1.1680);">0,3642</div>
<div class="t" style="left:723.25px;top:176.21px;font-size:17.00px;color:#f4f4f4;transform:scaleX(1.1680);">43,2556</div>
<div class="t" style="left:723.25px;top:204.01px;font-size:17.00px;color:#f4f4f4;transform:scaleX(1.1680);">2,3665</div>
<div class="t" style="left:814.00px;top:8.09px;font-size:15.60px;color:#f0f0f0;transform:scaleX(1.1823);">Light Skin</div>
<div class="t" style="left:814.00px;top:37.01px;font-size:17.00px;color:#f4f4f4;transform:scaleX(1.1680);">0,3811</div>
<div class="t" style="left:814.00px;top:64.91px;font-size:17.00px;color:#f4f4f4;transform:scaleX(1.1680);">0,3633</div>
<div class="t" style="left:814.00px;top:92.71px;font-size:17.00px;color:#f4f4f4;transform:scaleX(1.1680);">144,8031</div>
<div class="t" style="left:814.00px;top:120.51px;font-size:17.00px;color:#f4f4f4;transform:scaleX(1.1680);">0,3795</div>
<div class="t" style="left:814.00px;top:148.41px;font-size:17.00px;color:#f4f4f4;transform:scaleX(1.1680);">0,3562</div>
<div class="t" style="left:814.00px;top:176.21px;font-size:17.00px;color:#f4f4f4;transform:scaleX(1.1680);">149,8428</div>
<div class="t" style="left:814.00px;top:204.01px;font-size:17.00px;color:#f4f4f4;transform:scaleX(1.1680);">2,6838</div>
<div class="t" style="left:910.75px;top:8.09px;font-size:15.60px;color:#f0f0f0;transform:scaleX(1.1573);">Blue Sky</div>
<div class="t" style="left:910.75px;top:37.01px;font-size:17.00px;color:#f4f4f4;transform:scaleX(1.1680);">0,2494</div>
<div class="t" style="left:910.75px;top:64.91px;font-size:17.00px;color:#f4f4f4;transform:scaleX(1.1680);">0,2663</div>
<div class="t" style="left:910.75px;top:92.71px;font-size:17.00px;color:#f4f4f4;transform:scaleX(1.1680);">75,6072</div>
<div class="t" style="left:910.75px;top:120.51px;font-size:17.00px;color:#f4f4f4;transform:scaleX(1.1680);">0,2496</div>
<div class="t" style="left:910.75px;top:148.41px;font-size:17.00px;color:#f4f4f4;transform:scaleX(1.1680);">0,2656</div>
<div class="t" style="left:910.75px;top:176.21px;font-size:17.00px;color:#f4f4f4;transform:scaleX(1.1680);">80,2925</div>
<div class="t" style="left:910.75px;top:204.01px;font-size:17.00px;color:#f4f4f4;transform:scaleX(1.1680);">1,3645</div>
<div class="t" style="left:996.25px;top:8.09px;font-size:15.60px;color:#f0f0f0;transform:scaleX(1.1629);">Foliage</div>
<div class="t" style="left:996.25px;top:37.01px;font-size:17.00px;color:#f4f4f4;transform:scaleX(1.1680);">0,3387</div>
<div class="t" style="left:996.25px;top:64.91px;font-size:17.00px;color:#f4f4f4;transform:scaleX(1.1680);">0,4443</div>
<div class="t" style="left:996.25px;top:92.71px;font-size:17.00px;color:#f4f4f4;transform:scaleX(1.1680);">53,3625</div>
<div class="t" style="left:996.25px;top:120.51px;font-size:17.00px;color:#f4f4f4;transform:scaleX(1.1680);">0,3395</div>
<div class="t" style="left:996.25px;top:148.41px;font-size:17.00px;color:#f4f4f4;transform:scaleX(1.1680);">0,4271</div>
<div class="t" style="left:996.25px;top:176.21px;font-size:17.00px;color:#f4f4f4;transform:scaleX(1.1680);">55,9625</div>
<div class="t" style="left:996.25px;top:204.01px;font-size:17.00px;color:#f4f4f4;transform:scaleX(1.1680);">2,0962</div>
<div class="t" style="left:1081.50px;top:8.09px;font-size:15.60px;color:#f0f0f0;transform:scaleX(1.2201);">Blue Flower</div>
<div class="t" style="left:1081.50px;top:37.01px;font-size:17.00px;color:#f4f4f4;transform:scaleX(1.1680);">0,2693</div>
<div class="t" style="left:1081.50px;top:64.91px;font-size:17.00px;color:#f4f4f4;transform:scaleX(1.1680);">0,2524</div>
<div class="t" style="left:1081.50px;top:92.71px;font-size:17.00px;color:#f4f4f4;transform:scaleX(1.1680);">94,6631</div>
<div class="t" style="left:1081.50px;top:120.51px;font-size:17.00px;color:#f4f4f4;transform:scaleX(1.1680);">0,2681</div>
<div class="t" style="left:1081.50px;top:148.41px;font-size:17.00px;color:#f4f4f4;transform:scaleX(1.1680);">0,2525</div>
<div class="t" style="left:1081.50px;top:176.21px;font-size:17.00px;color:#f4f4f4;transform:scaleX(1.1680);">100,1316</div>
<div class="t" style="left:1081.50px;top:204.01px;font-size:17.00px;color:#f4f4f4;transform:scaleX(1.1680);">1,3705</div>
<div class="t" style="left:1193.25px;top:8.09px;font-size:15.60px;color:#f0f0f0;transform:scaleX(1.2003);">Bluish Green</div>
<div class="t" style="left:1193.25px;top:37.01px;font-size:17.00px;color:#f4f4f4;transform:scaleX(1.1680);">0,2599</div>
<div class="t" style="left:1193.25px;top:64.91px;font-size:17.00px;color:#f4f4f4;transform:scaleX(1.1680);">0,3699</div>
<div class="t" style="left:1193.25px;top:92.71px;font-size:17.00px;color:#f4f4f4;transform:scaleX(1.1680);">172,5657</div>
<div class="t" style="left:1193.25px;top:120.51px;font-size:17.00px;color:#f4f4f4;transform:scaleX(1.1680);">0,2626</div>
<div class="t" style="left:1193.25px;top:148.41px;font-size:17.00px;color:#f4f4f4;transform:scaleX(1.1680);">0,3616</div>
<div class="t" style="left:1193.25px;top:176.21px;font-size:17.00px;color:#f4f4f4;transform:scaleX(1.1680);">179,8063</div>
<div class="t" style="left:1193.25px;top:204.01px;font-size:17.00px;color:#f4f4f4;transform:scaleX(1.1680);">1,8976</div>
<div class="t" style="left:1312.50px;top:8.09px;font-size:15.60px;color:#f0f0f0;transform:scaleX(1.1915);">Orange</div>
<div class="t" style="left:1312.50px;top:37.01px;font-size:17.00px;color:#f4f4f4;transform:scaleX(1.1680);">0,5162</div>
<div class="t" style="left:1312.50px;top:64.91px;font-size:17.00px;color:#f4f4f4;transform:scaleX(1.1680);">0,4177</div>
<div class="t" style="left:1312.50px;top:92.71px;font-size:17.00px;color:#f4f4f4;transform:scaleX(1.1680);">119,1213</div>
<div class="t" style="left:1312.50px;top:120.51px;font-size:17.00px;color:#f4f4f4;transform:scaleX(1.1680);">0,5122</div>
<div class="t" style="left:1312.50px;top:148.41px;font-size:17.00px;color:#f4f4f4;transform:scaleX(1.1680);">0,4063</div>
<div class="t" style="left:1312.50px;top:176.21px;font-size:17.00px;color:#f4f4f4;transform:scaleX(1.1680);">121,7280</div>
<div class="t" style="left:1312.50px;top:204.01px;font-size:17.00px;color:#f4f4f4;transform:scaleX(1.1680);">3,1040</div>
<div class="t" style="left:1409.50px;top:8.09px;font-size:15.60px;color:#f0f0f0;transform:scaleX(1.1875);">Purplish Blue</div>
<div class="t" style="left:1409.50px;top:37.01px;font-size:17.00px;color:#f4f4f4;transform:scaleX(1.1680);">0,2160</div>
<div class="t" style="left:1409.50px;top:64.91px;font-size:17.00px;color:#f4f4f4;transform:scaleX(1.1680);">0,1882</div>
<div class="t" style="left:1409.50px;top:92.71px;font-size:17.00px;color:#f4f4f4;transform:scaleX(1.1680);">45,7712</div>
<div class="t" style="left:1409.50px;top:120.51px;font-size:17.00px;color:#f4f4f4;transform:scaleX(1.1680);">0,2166</div>
<div class="t" style="left:1409.50px;top:148.41px;font-size:17.00px;color:#f4f4f4;transform:scaleX(1.1680);">0,1925</div>
<div class="t" style="left:1409.50px;top:176.21px;font-size:17.00px;color:#f4f4f4;transform:scaleX(1.1680);">50,4702</div>
<div class="t" style="left:1409.50px;top:204.01px;font-size:17.00px;color:#f4f4f4;transform:scaleX(1.1680);">2,0571</div>
<div class="t" style="left:23.25px;top:37.01px;font-size:17.00px;color:#f4f4f4;transform:scaleX(1.0890);">x: CIE31</div>
<div class="t" style="left:23.25px;top:64.91px;font-size:17.00px;color:#f4f4f4;transform:scaleX(1.0890);">y: CIE31</div>
<div class="t" style="left:23.25px;top:92.71px;font-size:17.00px;color:#f4f4f4;transform:scaleX(1.0142);">Y</div>
<div class="t" style="left:23.25px;top:120.51px;font-size:17.00px;color:#f4f4f4;transform:scaleX(1.1339);">Target x:CIE31</div>
<div class="t" style="left:23.25px;top:148.41px;font-size:17.00px;color:#f4f4f4;transform:scaleX(1.1339);">Target y:CIE31</div>
<div class="t" style="left:23.25px;top:176.21px;font-size:17.00px;color:#f4f4f4;transform:scaleX(1.1745);">Target Y</div>
<div class="t" style="left:23.25px;top:204.01px;font-size:17.00px;color:#f4f4f4;transform:scaleX(1.1573);">ΔE 2000</div>
</div>
<div id="bottombar" class="abs" style="left:0;top:964.5px;width:1920px;height:67.5px;background:#2d2d2d"></div>
<div class="sw" style="left:2.0px"><b style="height:36px;background:#ffffff"></b><span style="top:47px">White</span></div>
<div class="sw" style="left:55.1px"><b style="height:36px;background:#e6e6e6"></b><span style="top:47px">Gray 80</span></div>
<div class="sw" style="left:108.3px"><b style="height:36px;background:#d1d1d1"></b><span style="top:47px">Gray 65</span></div>
<div class="sw" style="left:161.4px"><b style="height:36px;background:#bababa"></b><span style="top:47px">Gray 50</span></div>
<div class="sw" style="left:214.6px"><b style="height:36px;background:#a0a0a0"></b><span style="top:47px">Gray 35</span></div>
<div class="sw" style="left:267.8px"><b style="height:36px;background:#000000"></b><span style="top:47px">Black</span></div>
<div class="sw" style="left:320.9px"><b style="height:36px;background:#7a5545"></b><span style="top:47px">Dark Skin</span></div>
<div class="sw" style="left:374.1px"><b style="height:36px;background:#c99a84"></b><span style="top:47px">Light Skin</span></div>
<div class="sw" style="left:427.2px"><b style="height:36px;background:#5f82b4"></b><span style="top:47px">Blue Sky</span></div>
<div class="sw" style="left:480.3px"><b style="height:36px;background:#566c40"></b><span style="top:47px">Foliage</span></div>
<div class="sw" style="left:533.5px"><b style="height:24px;background:#8885c0"></b><span style="top:35.2px"><u>Blue<br>Flower</u></span></div>
<div class="sw" style="left:586.6px"><b style="height:24px;background:#66c7ae"></b><span style="top:35.2px"><u>Bluish<br>Green</u></span></div>
<div class="sw" style="left:639.8px"><b style="height:36px;background:#df7c2c"></b><span style="top:47px">Orange</span></div>
<div class="sw" style="left:692.9px"><b style="height:24px;background:#4a5baa"></b><span style="top:35.2px"><u>Purplish<br>Blue</u></span></div>
<div class="sw" style="left:746.1px"><b style="height:24px;background:#cc5365"></b><span style="top:35.2px"><u>Moderate<br>Red</u></span></div>
<div class="sw" style="left:799.2px"><b style="height:36px;background:#5e3a76"></b><span style="top:47px">Purple</span></div>
<div class="sw" style="left:852.4px"><b style="height:24px;background:#a4c740"></b><span style="top:35.2px"><u>Yellow<br>Green</u></span></div>
<div class="sw" style="left:905.5px"><b style="height:24px;background:#f0a830"></b><span style="top:35.2px"><u>Orange<br>Yellow</u></span></div>
<div class="sw" style="left:958.7px"><b style="height:36px;background:#353aa0"></b><span style="top:47px">Blue</span></div>
<div class="sw" style="left:1011.9px"><b style="height:36px;background:#469a48"></b><span style="top:47px">Green</span></div>
<div class="sw" style="left:1065.0px"><b style="height:36px;background:#b53238"></b><span style="top:47px">Red</span></div>
<div class="sw" style="left:1118.1px"><b style="height:36px;background:#f0c828"></b><span style="top:47px">Yellow</span></div>
<div class="sw" style="left:1171.3px"><b style="height:36px;background:#bd5698"></b><span style="top:47px">Magenta</span></div>
<div class="sw" style="left:1224.5px"><b style="height:36px;background:#0a8fae"></b><span style="top:47px">Cyan</span></div>
<div class="sw" style="left:1277.6px"><b style="height:36px;background:#ff0000"></b><span style="top:47px">100% Red</span></div>
<div class="sw" style="left:1330.8px"><b style="height:24px;background:#00ff00"></b><span style="top:35.2px"><u>100%<br>Green</u></span></div>
<div class="sw" style="left:1383.9px"><b style="height:24px;background:#0000ff"></b><span style="top:35.2px"><u>100%<br>Blue</u></span></div>
<div class="sw" style="left:1437.0px"><b style="height:24px;background:#00ffff"></b><span style="top:35.2px"><u>100%<br>Cyan</u></span></div>
<div class="sw" style="left:1490.2px"><b style="height:24px;background:#ff00ff"></b><span style="top:35.2px"><u>100%<br>Magenta</u></span></div>
<div class="sw sel" style="left:1543.3px"><b style="height:24px;background:#ffff00"></b><span style="top:35.2px"><u>100%<br>Yellow</u></span></div>
<div class="cb" style="left:1597px;top:969px;width:48.3px;height:18px;border-radius:5px 5px 0 0"></div>
<div class="cb" style="left:1597px;top:988px;width:48.3px;height:42px;border-radius:0 0 5px 5px;background:linear-gradient(#909090,#6a6a6a)"></div>
<div class="abs" style="left:1612px;top:970.5px;width:18px;height:14px;border-radius:50%;background:linear-gradient(#6e6e6e,#a0a0a0)"></div><div class="abs" style="left:1616px;top:974.5px;border-left:5px solid transparent;border-right:5px solid transparent;border-bottom:5.5px solid #2a2a2a"></div>
<div class="abs" style="left:1605.8px;top:993.5px;width:30.2px;height:30px;box-sizing:border-box;border:2.2px solid #262626;border-radius:5px;background:linear-gradient(#d0d0d0 0,#c4c4c4 48%,#a2a2a2 52%,#9a9a9a 100%)"></div><div class="abs" style="left:1614px;top:1002px;width:14px;height:13.3px;background:#000"></div>
<div class="cb" style="left:1646.4px;top:969px;width:44.6px;height:30px;border-radius:5px 0 0 0;"></div>
<div class="ic" style="left:1658.7px;top:974px"></div>
<div class="cb" style="left:1691.9px;top:969px;width:44.6px;height:30px;"></div>
<div class="ic" style="left:1704.2px;top:974px"></div>
<div class="cb" style="left:1737.3px;top:969px;width:44.6px;height:30px;"></div>
<div class="ic" style="left:1749.6px;top:974px"></div>
<div class="cb" style="left:1782.8px;top:969px;width:44.6px;height:30px;"></div>
<div class="ic" style="left:1795.1px;top:974px"></div>
<div class="cb dk" style="left:1827.2px;top:969px;width:44.8px;height:30px"></div><div class="cb dk" style="left:1872.7px;top:969px;width:47.3px;height:30px"></div>
<div class="abs" style="left:1839.5px;top:974px;width:20px;height:20px;border-radius:50%;background:linear-gradient(#2c2c2c,#3e3e3e)"></div><div class="abs" style="left:1886px;top:974px;width:20px;height:20px;border-radius:50%;background:linear-gradient(#4a4a4a,#3a3a3a)"></div>
<div class="cb" style="left:1646.4px;top:1000.2px;width:135.8px;height:29.8px;border-radius:0 0 0 5px"></div><div class="cb" style="left:1782.8px;top:1000.2px;width:135.6px;height:29.8px;border-radius:0 5px 5px 0"></div>
<div class="ic" style="left:1667.3px;top:1005.3px;width:19px;height:19px"></div><div class="ic" style="left:1880.4px;top:1005.3px;width:19px;height:19px"></div>
<div class="t" style="left:1703.40px;top:1004.05px;font-size:21.80px;color:#343434;transform:scaleX(1.0317);text-shadow:0 0 .7px #343434;">Back</div>
<div class="t" style="left:1810.50px;top:1004.05px;font-size:21.80px;color:#343434;transform:scaleX(1.1467);text-shadow:0 0 .7px #343434;">Next</div>
<svg width="1920" height="1032" viewBox="0 0 1920 1032"><g fill="#2c2c2c"><rect x="1664.6" y="979.6" width="8.6" height="8.6"/><path d="M1712 980.4l8.4 4.300-8.4 4.300z"/></g><g fill="none" stroke="#2c2c2c" stroke-width="1.5"><path d="M1758.6 978.7h-2.400v10.600h2.400M1762 978.700h2.400v10.600h-2.400" stroke-width="2"/><path d="M1758.600 984h1.200M1760.800 984h1.200" stroke-width="1.300"/><path d="M1805.500 984.200c-1.600-2.600-5.800-2.600-5.800 0s4.200 2.600 5.800 0c1.600-2.600 5.800-2.600 5.800 0s-4.200 2.600-5.800 0z" stroke-width="1.900"/><path d="M1678.800 1010.500l-3.200 4.300 3.200 4.300M1674.800 1010.500l-3.200 4.300 3.200 4.300" stroke="#333" stroke-width="1.900"/><path d="M1888.200 1010.500l3.200 4.300-3.200 4.300M1892.200 1010.500l3.200 4.300-3.200 4.300" stroke="#333" stroke-width="1.900"/></g><g fill="none" stroke="#161616" stroke-width="2.700"><path d="M1844.500 981.500a5.500 5.500 0 0 1 9.800-1.200M1854.500 986.500a5.500 5.500 0 0 1-9.800 1.200"/></g><path d="M1855.800 977.500v4.500h-4.500zM1843.200 990.500v-4.500h4.500z" fill="#161616"/></svg>
</body></html>
